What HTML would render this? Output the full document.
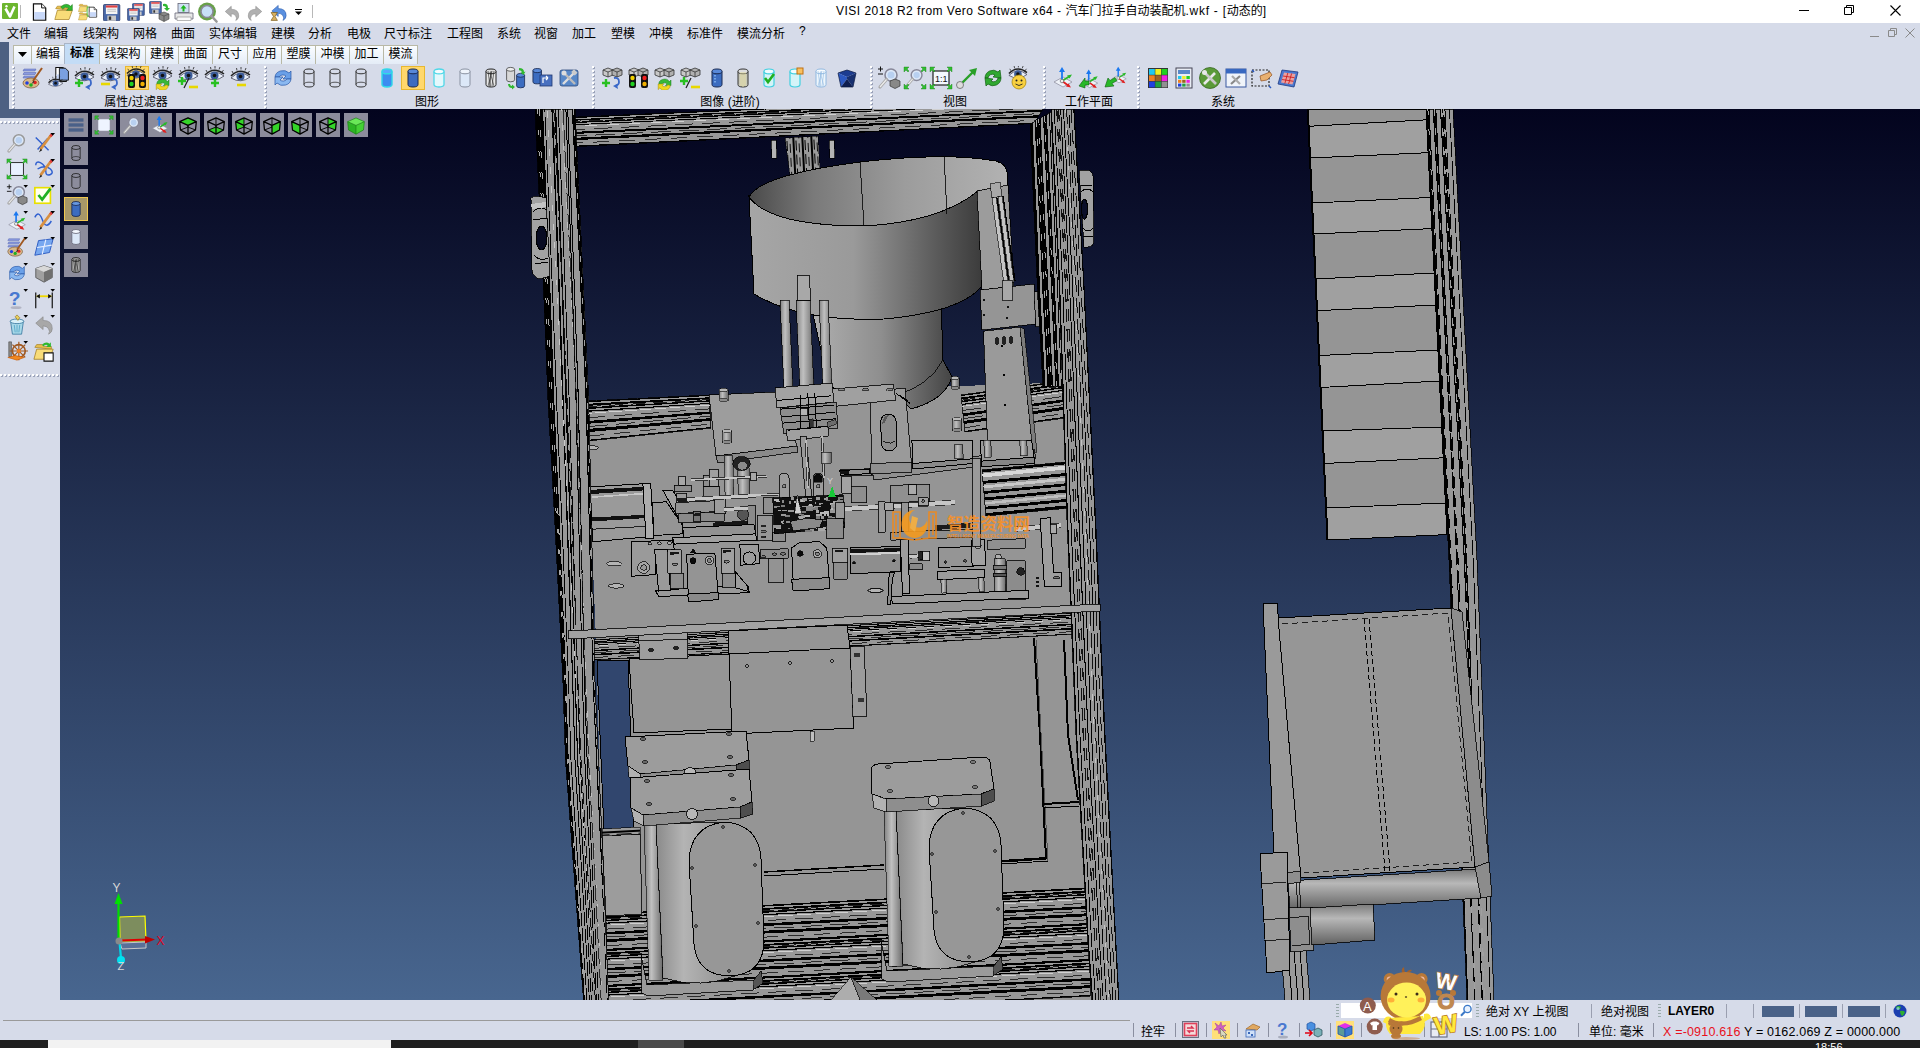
<!DOCTYPE html>
<html lang="zh-CN">
<head>
<meta charset="utf-8">
<title>VISI 2018 R2 from Vero Software x64 - 汽车门拉手自动装配机.wkf - [动态的]</title>
<style>
html,body{margin:0;padding:0}
body{width:1920px;height:1048px;overflow:hidden;position:relative;background:#d6dbe9;font-family:"Liberation Sans","Noto Sans CJK SC",sans-serif;font-size:12px;color:#000}
.abs{position:absolute}
#title{left:0;top:0;width:1920px;height:23px;background:#fff}
#title .t{position:absolute;left:836px;top:2px;font-size:12px;line-height:18px;white-space:nowrap}
#menu{left:0;top:23px;width:1920px;height:19px;background:#d6dbe9}
#menu span{position:absolute;top:1px;font-size:12px;white-space:nowrap}
#strip{left:0;top:42px;width:60px;height:76px;background:#4d6082}
#ribbon{left:9px;top:42px;width:1911px;height:67px;background:#d6dbe9}
.tab{position:absolute;top:45px;height:19px;box-sizing:border-box;border:1px solid #b9b9a6;border-bottom:none;background:linear-gradient(#fbfdff,#e4ecf7);font-size:12px;text-align:center;line-height:17px;white-space:nowrap}
.tab.on{top:43px;height:21px;background:#c3dcf6;border-color:#a9b5c7;line-height:19px}
.glabel{position:absolute;top:91.5px;font-size:12px;white-space:nowrap}
.grip{position:absolute;width:3px;background-image:repeating-linear-gradient(#fbfcff 0 1.6px,#aab2c6 1.6px 2.6px,transparent 2.6px 4px)}
#left{left:0;top:118px;width:60px;height:882px;background:#d6dbe9}
#vp{left:60px;top:109px;width:1860px;height:891px;display:block}
#status{left:0;top:1000px;width:1920px;height:40px;background:#d6dbe9}
#taskbar{left:0;top:1040px;width:1920px;height:8px;background:#1f1f1f}
.st{position:absolute;font-size:12.5px;white-space:nowrap}
.ic{position:absolute;width:24px;height:24px}
</style>
</head>
<body>
<div id="title" class="abs"><div class="t"><span style="letter-spacing:.49px">VISI 2018 R2 from Vero Software x64 - </span>汽车门拉手自动装配机<span style="letter-spacing:.75px">.wkf - [</span>动态的]</div></div>
<div id="menu" class="abs"><span style="left:7px">文件</span><span style="left:44px">编辑</span><span style="left:83px">线架构</span><span style="left:133px">网格</span><span style="left:171px">曲面</span><span style="left:209px">实体编辑</span><span style="left:271px">建模</span><span style="left:308px">分析</span><span style="left:347px">电极</span><span style="left:384px">尺寸标注</span><span style="left:447px">工程图</span><span style="left:497px">系统</span><span style="left:534px">视窗</span><span style="left:572px">加工</span><span style="left:611px">塑模</span><span style="left:649px">冲模</span><span style="left:687px">标准件</span><span style="left:737px">模流分析</span><span style="left:799px">?</span></div>
<div id="strip" class="abs"></div>
<div id="ribbon" class="abs"></div>
<div class="tab" style="left:13px;width:19px"><svg width="10" height="6" style="margin-top:6px"><path d="M0 0h9l-4.5 5z" fill="#000"/></svg></div>
<div class="tab" style="left:31px;width:34px">编辑</div>
<div class="tab on" style="left:64px;width:36px"><b>标准</b></div>
<div class="tab" style="left:99px;width:47px">线架构</div>
<div class="tab" style="left:145px;width:34px">建模</div>
<div class="tab" style="left:178px;width:35px">曲面</div>
<div class="tab" style="left:212px;width:36px">尺寸</div>
<div class="tab" style="left:247px;width:35px">应用</div>
<div class="tab" style="left:281px;width:35px">塑膜</div>
<div class="tab" style="left:315px;width:35px">冲模</div>
<div class="tab" style="left:349px;width:35px">加工</div>
<div class="tab" style="left:383px;width:35px">模流</div>
<svg width="0" height="0" style="position:absolute"><defs><pattern id="gp" width="4" height="4" patternUnits="userSpaceOnUse"><rect x="1" y="1" width="2" height="2" fill="#9aa2b8"/><rect width="2" height="2" fill="#fff"/></pattern></defs></svg>
<svg class="abs" style="left:12px;top:66px" width="4" height="43"><rect width="4" height="43" fill="url(#gp)"/></svg>
<svg class="abs" style="left:264px;top:66px" width="4" height="43"><rect width="4" height="43" fill="url(#gp)"/></svg>
<svg class="abs" style="left:592px;top:66px" width="4" height="43"><rect width="4" height="43" fill="url(#gp)"/></svg>
<svg class="abs" style="left:870px;top:66px" width="4" height="43"><rect width="4" height="43" fill="url(#gp)"/></svg>
<svg class="abs" style="left:1043px;top:66px" width="4" height="43"><rect width="4" height="43" fill="url(#gp)"/></svg>
<svg class="abs" style="left:1137px;top:66px" width="4" height="43"><rect width="4" height="43" fill="url(#gp)"/></svg>
<div class="glabel" style="left:76px;width:120px;text-align:center">属性/过滤器</div>
<div class="glabel" style="left:367px;width:120px;text-align:center">图形</div>
<div class="glabel" style="left:670px;width:120px;text-align:center">图像 (进阶)</div>
<div class="glabel" style="left:895px;width:120px;text-align:center">视图</div>
<div class="glabel" style="left:1029px;width:120px;text-align:center">工作平面</div>
<div class="glabel" style="left:1163px;width:120px;text-align:center">系统</div>
<svg class="abs" style="left:2px;top:3px;" width="16" height="16" viewBox="0 0 16 16"><rect width="16" height="16" rx="1" fill="#6cb62e"/><path d="M3.500 5.500l4.500 8l4.500-10" stroke="#fff" stroke-width="2.600" fill="none" stroke-linejoin="round"/><circle cx="4.500" cy="3.200" r="1.200" fill="#fff"/></svg>
<div class="abs" style="left:20px;top:5px;width:1px;height:13px;background:#b8b8b8"></div>
<svg class="abs" style="left:31px;top:2px;" width="18" height="20" viewBox="1 0 22 24"><path d="M4 2h10l5 5v15H4z" fill="#fff" stroke="#111" stroke-width="1.5"/><path d="M5 12h13v9H5z" fill="#c8d8f8"/><path d="M14 2v5h5" fill="#fff" stroke="#111" stroke-width="1.2"/></svg>
<svg class="abs" style="left:54px;top:2px;" width="20" height="20" viewBox="0 0 24 24"><path d="M2 8l2-3h6l2 2h8v3z" fill="#e8c050" stroke="#a07818" stroke-width=".7"/><path d="M1 21L4 10h18l-4 11z" fill="#f8dc78" stroke="#a07818" stroke-width=".8"/><path d="M8 6q6-6 12-1l2-2v7h-7l2.500-2.500q-4-3-7 1z" fill="#30b830" stroke="#187018" stroke-width=".6"/></svg>
<svg class="abs" style="left:78px;top:2px;" width="20" height="20" viewBox="0 0 24 24"><g transform="scale(.55)"><path d="M2 8l2-3h6l2 2h8v3z" fill="#e8c050" stroke="#a07818" stroke-width=".7"/><path d="M1 21L4 10h18l-4 11z" fill="#f8dc78" stroke="#a07818" stroke-width=".8"/></g><g transform="translate(0,10) scale(.55)"><path d="M2 8l2-3h6l2 2h8v3z" fill="#e8c050" stroke="#a07818" stroke-width=".7"/><path d="M1 21L4 10h18l-4 11z" fill="#f8dc78" stroke="#a07818" stroke-width=".8"/></g><path d="M11 6h3M11 17h3M11 6v11" stroke="#40c040" fill="none"/><g transform="translate(11,5) scale(.6)"><path d="M4 2h10l5 5v15H4z" fill="#fff" stroke="#111" stroke-width="1.5"/><path d="M5 12h13v9H5z" fill="#c8d8f8"/><path d="M14 2v5h5" fill="#fff" stroke="#111" stroke-width="1.2"/></g></svg>
<svg class="abs" style="left:103px;top:4px;" width="18" height="17" viewBox="0 0 18 17"><g transform="translate(0.5,0.5) scale(0.96)"><rect x="0" y="0" width="17" height="17" rx="1" fill="#4868a8" stroke="#283868" stroke-width=".8"/><rect x="2.500" y="1" width="12" height="9" fill="#f4f4f4"/><rect x="2.500" y="1" width="12" height="2.200" fill="#e04040"/><path d="M4 5h9M4 7h9" stroke="#aaa" stroke-width=".7"/><rect x="4" y="11.500" width="9" height="5.500" fill="#c8c8c8"/><rect x="5.500" y="12.500" width="2.500" height="3.500" fill="#333"/></g></svg>
<svg class="abs" style="left:127px;top:3px;" width="18" height="18" viewBox="0 0 18 18"><g transform="translate(5.5,0.5) scale(0.7)"><rect x="0" y="0" width="17" height="17" rx="1" fill="#4868a8" stroke="#283868" stroke-width=".8"/><rect x="2.500" y="1" width="12" height="9" fill="#f4f4f4"/><rect x="2.500" y="1" width="12" height="2.200" fill="#e04040"/><path d="M4 5h9M4 7h9" stroke="#aaa" stroke-width=".7"/><rect x="4" y="11.500" width="9" height="5.500" fill="#c8c8c8"/><rect x="5.500" y="12.500" width="2.500" height="3.500" fill="#333"/></g><g transform="translate(0.5,5.5) scale(0.7)"><rect x="0" y="0" width="17" height="17" rx="1" fill="#4868a8" stroke="#283868" stroke-width=".8"/><rect x="2.500" y="1" width="12" height="9" fill="#f4f4f4"/><rect x="2.500" y="1" width="12" height="2.200" fill="#e04040"/><path d="M4 5h9M4 7h9" stroke="#aaa" stroke-width=".7"/><rect x="4" y="11.500" width="9" height="5.500" fill="#c8c8c8"/><rect x="5.500" y="12.500" width="2.500" height="3.500" fill="#333"/></g></svg>
<svg class="abs" style="left:149px;top:1px;" width="22" height="21" viewBox="0 0 22 21"><g transform="translate(0.5,0.5) scale(0.7)"><rect x="0" y="0" width="17" height="17" rx="1" fill="#4868a8" stroke="#283868" stroke-width=".8"/><rect x="2.500" y="1" width="12" height="9" fill="#f4f4f4"/><rect x="2.500" y="1" width="12" height="2.200" fill="#e04040"/><path d="M4 5h9M4 7h9" stroke="#aaa" stroke-width=".7"/><rect x="4" y="11.500" width="9" height="5.500" fill="#c8c8c8"/><rect x="5.500" y="12.500" width="2.500" height="3.500" fill="#333"/></g><path d="M14 3q5-1 5 4l2 0l-3 3l-3-3h2q0-2-3-2z" fill="#30b830"/><path d="M10 13l5-2l5 2v5l-5 2.500l-5-2.500z" fill="#888" stroke="#444" stroke-width=".6"/><path d="M10 13l5 2l5-2M15 15v5.500" stroke="#444" stroke-width=".6" fill="none"/></svg>
<svg class="abs" style="left:174px;top:3px;" width="20" height="18" viewBox="0 0 20 18"><rect x="4" y="0.500" width="11" height="9" fill="#cfe0f4" stroke="#667" stroke-width=".8"/><path d="M9.500 2l3 3.500h-2v3h-2v-3h-2z" fill="#20b820"/><path d="M1 10h18v6H1z" fill="#e8e8e8" stroke="#667" stroke-width=".8"/><path d="M3 14h14v3.500H3z" fill="#fafafa" stroke="#888" stroke-width=".6"/></svg>
<svg class="abs" style="left:197px;top:2px;" width="21" height="21" viewBox="0 0 21 21"><circle cx="10" cy="9.500" r="9" fill="#68a048"/><circle cx="10" cy="9.500" r="6" fill="#c8e0f8" stroke="#889" stroke-width="1.600"/><path d="M14.500 14l5 5.500" stroke="#999" stroke-width="2.600" stroke-linecap="round"/></svg>
<svg class="abs" style="left:223px;top:4px;" width="18" height="18" viewBox="0 0 24 24"><path d="M3 10l8-7v4q10 0 10 9q0 4-4 6q2-3 0-6q-2-3-6-3v4z" fill="#b0b0b0" stroke="#888" stroke-width=".7"/></svg>
<svg class="abs" style="left:246px;top:4px;" width="18" height="18" viewBox="0 0 24 24"><g transform="translate(24,0) scale(-1,1)"><path d="M3 10l8-7v4q10 0 10 9q0 4-4 6q2-3 0-6q-2-3-6-3v4z" fill="#b0b0b0" stroke="#888" stroke-width=".7"/></g></svg>
<svg class="abs" style="left:269px;top:3px;" width="20" height="19" viewBox="0 0 24 24"><path d="M3 10l8-7v4q10 0 10 9q0 4-4 6q2-3 0-6q-2-3-6-3v4z" fill="#5a90e0" stroke="#2858a8" stroke-width=".7"/><path d="M2 12h8l-3 5l3 5H2l3-5z" fill="#d8b060" stroke="#705010" stroke-width=".8"/></svg>
<svg class="abs" style="left:295px;top:9px;" width="8" height="7" viewBox="0 0 8 7"><path d="M0 .500h7" stroke="#000" stroke-width="1"/><path d="M0 2.500h7l-3.500 3.500z" fill="#000"/></svg>
<div class="abs" style="left:312px;top:5px;width:1px;height:13px;background:#b8b8b8"></div>
<svg class="abs" style="left:1799px;top:5px;" width="10" height="10" viewBox="0 0 10 10"><path d="M0 5.500h10" stroke="#000" stroke-width="1"/></svg>
<svg class="abs" style="left:1844px;top:5px;" width="10" height="10" viewBox="0 0 10 10"><path d="M.5 2.500h7v7h-7zM2.500 2.500v-2h7v7h-2" fill="none" stroke="#000" stroke-width="1"/></svg>
<svg class="abs" style="left:1890px;top:5px;" width="11" height="11" viewBox="0 0 11 11"><path d="M.5 .5l10 10M10.500 .5l-10 10" stroke="#000" stroke-width="1.100"/></svg>
<svg class="abs" style="left:1870px;top:28px;" width="10" height="10" viewBox="0 0 10 10"><path d="M0 8.500h9" stroke="#8a8a8a" stroke-width="1"/></svg>
<svg class="abs" style="left:1888px;top:28px;" width="10" height="10" viewBox="0 0 10 10"><path d="M.5 2.500h6v6h-6zM2.500 2.500v-2h6v6h-2" fill="none" stroke="#8a8a8a" stroke-width="1"/></svg>
<svg class="abs" style="left:1905px;top:28px;" width="10" height="10" viewBox="0 0 10 10"><path d="M.5 .5l9 9M9.500 .5l-9 9" stroke="#8a8a8a" stroke-width="1"/></svg>
<svg class="abs" style="left:21px;top:66px;" width="24" height="24" viewBox="0 0 24 24"><path d="M3 3h12l-1 2H2zM3 6.500h12l-1 2H2zM3 10h12l-1 2H2z" fill="#8a9ae0" stroke="#5060b0" stroke-width=".5"/><ellipse cx="10" cy="17" rx="8" ry="5" fill="#d8b888" stroke="#806040" stroke-width=".8"/><circle cx="6" cy="17" r="1.8" fill="#2040e0"/><circle cx="10" cy="19" r="1.8" fill="#20b020"/><circle cx="14" cy="16.500" r="1.8" fill="#e02020"/><path d="M21 2L12 15" stroke="#a05820" stroke-width="2"/><path d="M12.500 14.500l-2 3.500l3-2z" fill="#333"/></svg>
<svg class="abs" style="left:47px;top:66px;" width="24" height="24" viewBox="0 0 24 24"><g transform="translate(6,0) scale(.7)"><path d="M4 2h10l5 5v15H4z" fill="#fff" stroke="#111" stroke-width="1.5"/><path d="M5 12h13v9H5z" fill="#c8d8f8"/><path d="M14 2v5h5" fill="#fff" stroke="#111" stroke-width="1.2"/></g><g transform="translate(10,1) scale(.6)"><path d="M4 2h10l5 5v15H4z" fill="#7aa0e0" stroke="#111" stroke-width="1.500"/></g><g transform="translate(0,10) scale(0.75)"><path d="M2 11Q11 2 21 10Q12 17 2 11z" fill="#e8eef8" stroke="#445" stroke-width=".8"/><circle cx="11.5" cy="9.5" r="4" fill="#3c5c98"/><circle cx="11.5" cy="9.5" r="1.8" fill="#111"/><path d="M2 9Q11 0 21 8" stroke="#222" stroke-width="1.6" fill="none"/><path d="M4 6l-1-2M8 3.5l-.5-2.5M12 2.5V0M16 3.5l1-2.5M19 6l1.5-2" stroke="#222" stroke-width=".8"/></g></svg>
<svg class="abs" style="left:73px;top:66px;" width="24" height="24" viewBox="0 0 24 24"><g transform="translate(0,1) scale(1)"><path d="M2 11Q11 2 21 10Q12 17 2 11z" fill="#e8eef8" stroke="#445" stroke-width=".8"/><circle cx="11.5" cy="9.5" r="4" fill="#3c5c98"/><circle cx="11.5" cy="9.5" r="1.8" fill="#111"/><path d="M2 9Q11 0 21 8" stroke="#222" stroke-width="1.6" fill="none"/><path d="M4 6l-1-2M8 3.5l-.5-2.5M12 2.5V0M16 3.5l1-2.5M19 6l1.5-2" stroke="#222" stroke-width=".8"/></g><path d="M2 17h8M6 13v8" stroke="#28c020" stroke-width="2.4"/><path d="M13 13q5-1 5 4q0 3-4 4" stroke="#3a68c8" stroke-width="1.8" fill="none"/><path d="M12 21l5 3l-1-5z" fill="#3a68c8"/></svg>
<svg class="abs" style="left:99px;top:66px;" width="24" height="24" viewBox="0 0 24 24"><g transform="translate(0,1) scale(1)"><path d="M2 11Q11 2 21 10Q12 17 2 11z" fill="#e8eef8" stroke="#445" stroke-width=".8"/><circle cx="11.5" cy="9.5" r="4" fill="#3c5c98"/><circle cx="11.5" cy="9.5" r="1.8" fill="#111"/><path d="M2 9Q11 0 21 8" stroke="#222" stroke-width="1.6" fill="none"/><path d="M4 6l-1-2M8 3.5l-.5-2.5M12 2.5V0M16 3.5l1-2.5M19 6l1.5-2" stroke="#222" stroke-width=".8"/></g><path d="M2 18h9" stroke="#e8d800" stroke-width="2.6"/><path d="M13 13q5-1 5 4q0 3-4 4" stroke="#3a68c8" stroke-width="1.8" fill="none"/><path d="M12 21l5 3l-1-5z" fill="#3a68c8"/></svg>
<div class="abs" style="left:125px;top:66px;width:24px;height:24px;background:#ffd86c;border:1px solid #e8b830;box-sizing:border-box"></div>
<svg class="abs" style="left:125px;top:66px;" width="24" height="24" viewBox="0 0 24 24"><g transform="translate(0,-1) scale(0.95)"><path d="M2 11Q11 2 21 10Q12 17 2 11z" fill="#e8eef8" stroke="#445" stroke-width=".8"/><circle cx="11.5" cy="9.5" r="4" fill="#3c5c98"/><circle cx="11.5" cy="9.5" r="1.8" fill="#111"/><path d="M2 9Q11 0 21 8" stroke="#222" stroke-width="1.6" fill="none"/><path d="M4 6l-1-2M8 3.5l-.5-2.5M12 2.5V0M16 3.5l1-2.5M19 6l1.5-2" stroke="#222" stroke-width=".8"/></g><rect x="3" y="8" width="7" height="14" rx="2" fill="#111"/><circle cx="6.5" cy="12" r="2.2" fill="#f0d000"/><circle cx="6.5" cy="18" r="2.2" fill="#20d020"/><rect x="14" y="8" width="7" height="14" rx="2" fill="#111"/><circle cx="17.5" cy="12" r="2.2" fill="#f02020"/><circle cx="17.5" cy="18" r="2.2" fill="#f0b000"/></svg>
<svg class="abs" style="left:151px;top:66px;" width="24" height="24" viewBox="0 0 24 24"><g transform="translate(0,0) scale(1)"><path d="M2 11Q11 2 21 10Q12 17 2 11z" fill="#e8eef8" stroke="#445" stroke-width=".8"/><circle cx="11.5" cy="9.5" r="4" fill="#3c5c98"/><circle cx="11.5" cy="9.5" r="1.8" fill="#111"/><path d="M2 9Q11 0 21 8" stroke="#222" stroke-width="1.6" fill="none"/><path d="M4 6l-1-2M8 3.5l-.5-2.5M12 2.5V0M16 3.5l1-2.5M19 6l1.5-2" stroke="#222" stroke-width=".8"/></g><g transform="translate(2,6) scale(.8)"><path d="M5 16a7 6 0 0 1 13-4l2-2v7h-7l2-2a4 3.5 0 0 0-7 1z" fill="#38b838" stroke="#187818" stroke-width=".6"/><path d="M19 17a7 6 0 0 1-13 3l-2 2v-7h7l-2 2a4 3.5 0 0 0 7-1z" fill="#f0d820" stroke="#a08800" stroke-width=".6"/></g></svg>
<svg class="abs" style="left:177px;top:66px;" width="24" height="24" viewBox="0 0 24 24"><g transform="translate(0,0) scale(1)"><path d="M2 11Q11 2 21 10Q12 17 2 11z" fill="#e8eef8" stroke="#445" stroke-width=".8"/><circle cx="11.5" cy="9.5" r="4" fill="#3c5c98"/><circle cx="11.5" cy="9.5" r="1.8" fill="#111"/><path d="M2 9Q11 0 21 8" stroke="#222" stroke-width="1.6" fill="none"/><path d="M4 6l-1-2M8 3.5l-.5-2.5M12 2.5V0M16 3.5l1-2.5M19 6l1.5-2" stroke="#222" stroke-width=".8"/></g><path d="M1 15h8M5 11v8" stroke="#28c020" stroke-width="2.4"/><path d="M12 12L7 22" stroke="#222" stroke-width="1.200"/><path d="M12 21h9" stroke="#e8d800" stroke-width="2.6"/></svg>
<svg class="abs" style="left:203px;top:66px;" width="24" height="24" viewBox="0 0 24 24"><g transform="translate(0,0) scale(1)"><path d="M2 11Q11 2 21 10Q12 17 2 11z" fill="#e8eef8" stroke="#445" stroke-width=".8"/><circle cx="11.5" cy="9.5" r="4" fill="#3c5c98"/><circle cx="11.5" cy="9.5" r="1.8" fill="#111"/><path d="M2 9Q11 0 21 8" stroke="#222" stroke-width="1.6" fill="none"/><path d="M4 6l-1-2M8 3.5l-.5-2.5M12 2.5V0M16 3.5l1-2.5M19 6l1.5-2" stroke="#222" stroke-width=".8"/></g><path d="M8 17h8M12 13v8" stroke="#28c020" stroke-width="2.4"/></svg>
<svg class="abs" style="left:229px;top:66px;" width="24" height="24" viewBox="0 0 24 24"><g transform="translate(0,1) scale(1)"><path d="M2 11Q11 2 21 10Q12 17 2 11z" fill="#e8eef8" stroke="#445" stroke-width=".8"/><circle cx="11.5" cy="9.5" r="4" fill="#3c5c98"/><circle cx="11.5" cy="9.5" r="1.8" fill="#111"/><path d="M2 9Q11 0 21 8" stroke="#222" stroke-width="1.6" fill="none"/><path d="M4 6l-1-2M8 3.5l-.5-2.5M12 2.5V0M16 3.5l1-2.5M19 6l1.5-2" stroke="#222" stroke-width=".8"/></g><path d="M8 19h9" stroke="#e8d800" stroke-width="2.6"/></svg>
<svg class="abs" style="left:271px;top:66px;" width="24" height="24" viewBox="0 0 24 24"><path d="M4 11a8 7 0 0 1 14-4l2-2v8h-8l3-3a4.500 4 0 0 0-7 1z" fill="#6aa0e8" stroke="#2858a8" stroke-width=".7"/><path d="M20 13a8 7 0 0 1-14 4l-2 2v-8h8l-3 3a4.500 4 0 0 0 7-1z" fill="#8ab8f0" stroke="#2858a8" stroke-width=".7"/></svg>
<svg class="abs" style="left:297px;top:66px;" width="24" height="24" viewBox="0 0 24 24"><path d="M7 5.4v13.2a5.0 2.4 0 0 0 10 0v-13.2" fill="none" stroke="#333" stroke-width="1"/><ellipse cx="12.0" cy="5.4" rx="5.0" ry="2.4" fill="none" stroke="#333" stroke-width="1"/><path d="M7 18.6a5 2.4 0 0 1 10 0" fill="none" stroke="#333" stroke-width=".8"/></svg>
<svg class="abs" style="left:323px;top:66px;" width="24" height="24" viewBox="0 0 24 24"><path d="M7 5.4v13.2a5.0 2.4 0 0 0 10 0v-13.2" fill="none" stroke="#333" stroke-width="1"/><ellipse cx="12.0" cy="5.4" rx="5.0" ry="2.4" fill="none" stroke="#333" stroke-width="1"/><path d="M7 18.6a5 2.4 0 0 1 10 0" fill="none" stroke="#333" stroke-width=".8"/></svg>
<svg class="abs" style="left:349px;top:66px;" width="24" height="24" viewBox="0 0 24 24"><path d="M7 5.4v13.2a5.0 2.4 0 0 0 10 0v-13.2" fill="none" stroke="#333" stroke-width="1"/><ellipse cx="12.0" cy="5.4" rx="5.0" ry="2.4" fill="none" stroke="#333" stroke-width="1"/><path d="M7 18.6a5 2.4 0 0 1 10 0" fill="none" stroke="#333" stroke-width=".8"/></svg>
<svg class="abs" style="left:375px;top:66px;" width="24" height="24" viewBox="0 0 24 24"><path d="M7 5.4v13.2a5.0 2.4 0 0 0 10 0v-13.2" fill="#3c8cf0" stroke="#30d8e8" stroke-width="1.4"/><ellipse cx="12.0" cy="5.4" rx="5.0" ry="2.4" fill="#58a8ff" stroke="#30d8e8" stroke-width="1.4"/></svg>
<div class="abs" style="left:401px;top:66px;width:24px;height:24px;background:#ffd86c;border:1px solid #e8b830;box-sizing:border-box"></div>
<svg class="abs" style="left:401px;top:66px;" width="24" height="24" viewBox="0 0 24 24"><path d="M7 5.4v13.2a5.0 2.4 0 0 0 10 0v-13.2" fill="#3c6cc0" stroke="#182850" stroke-width="1"/><ellipse cx="12.0" cy="5.4" rx="5.0" ry="2.4" fill="#5888d8" stroke="#182850" stroke-width="1"/></svg>
<svg class="abs" style="left:427px;top:66px;" width="24" height="24" viewBox="0 0 24 24"><path d="M7 5.4v13.2a5.0 2.4 0 0 0 10 0v-13.2" fill="#e4f8fc" stroke="#50d8e8" stroke-width="1.3"/><ellipse cx="12.0" cy="5.4" rx="5.0" ry="2.4" fill="#f4fcff" stroke="#50d8e8" stroke-width="1.3"/></svg>
<svg class="abs" style="left:453px;top:66px;" width="24" height="24" viewBox="0 0 24 24"><path d="M7 5.4v13.2a5.0 2.4 0 0 0 10 0v-13.2" fill="#dce8f8" stroke="#8890a0" stroke-width="1"/><ellipse cx="12.0" cy="5.4" rx="5.0" ry="2.4" fill="#eef4fc" stroke="#8890a0" stroke-width="1"/></svg>
<svg class="abs" style="left:479px;top:66px;" width="24" height="24" viewBox="0 0 24 24"><path d="M7 5.4v13.2a5.0 2.4 0 0 0 10 0v-13.2" fill="#e8e8e8" stroke="#222" stroke-width="1"/><ellipse cx="12.0" cy="5.4" rx="5.0" ry="2.4" fill="#ddd" stroke="#222" stroke-width="1"/><path d="M9 5l2 15M12 5l-1 16M15 5l-2 15M9 20l4-15M15 20l-4-14" stroke="#222" stroke-width=".6" fill="none"/></svg>
<svg class="abs" style="left:505px;top:66px;" width="24" height="24" viewBox="0 0 24 24"><g transform="translate(-4,-1) scale(.8)"><path d="M7 5.4v13.2a5.0 2.4 0 0 0 10 0v-13.2" fill="#d8d8d8" stroke="#444" stroke-width="1"/><ellipse cx="12.0" cy="5.4" rx="5.0" ry="2.4" fill="#eee" stroke="#444" stroke-width="1"/></g><g transform="translate(6,5) scale(.8)"><path d="M7 5.4v13.2a5.0 2.4 0 0 0 10 0v-13.2" fill="#3c6cc0" stroke="#182850" stroke-width="1"/><ellipse cx="12.0" cy="5.4" rx="5.0" ry="2.4" fill="#5888d8" stroke="#182850" stroke-width="1"/></g><path d="M14 2q5 0 5 4l1.500-.5l-2 3.500l-3-2.500l1.500-.2q-.5-2-3-2z" fill="#30b830"/><path d="M3 18q0 4 4 4v1.500l3-2.500l-3-2.500v1.500q-2 0-2-2z" fill="#30b830"/></svg>
<svg class="abs" style="left:531px;top:66px;" width="24" height="24" viewBox="0 0 24 24"><g transform="translate(-4,0) scale(.85)"><path d="M7 5.4v13.2a5.0 2.4 0 0 0 10 0v-13.2" fill="#3c6cc0" stroke="#182850" stroke-width="1"/><ellipse cx="12.0" cy="5.4" rx="5.0" ry="2.4" fill="#5888d8" stroke="#182850" stroke-width="1"/></g><rect x="9" y="9" width="12" height="11" fill="#4870c0" stroke="#203870" stroke-width=".8"/><path d="M12 17v-5h5M17 12l-2-2M17 12l-2 2" stroke="#fff" stroke-width="1.200" fill="none"/></svg>
<svg class="abs" style="left:557px;top:66px;" width="24" height="24" viewBox="0 0 24 24"><rect x="3" y="4" width="18" height="16" rx="2" fill="#5888c8" stroke="#284878" stroke-width=".8"/><path d="M6 18L17 7" stroke="#ddd" stroke-width="2.400"/><path d="M18 18L8 8" stroke="#bbb" stroke-width="2.400"/><circle cx="7" cy="7" r="2.500" fill="#ddd"/><rect x="15" y="4" width="5" height="4" fill="#ccc" transform="rotate(45 17 6)"/></svg>
<svg class="abs" style="left:601px;top:66px;" width="24" height="24" viewBox="0 0 24 24"><g transform="translate(0,-1)"><path d="M2 5l5-2l5 2v5l-5 2l-5-2z" fill="#c8c8c8" stroke="#333" stroke-width=".8"/><path d="M2 5l5 2l5-2M7 7v5" stroke="#333" stroke-width=".8" fill="none"/><path d="M11 5l5-2l5 2v5l-5 2l-5-2z" fill="#b0b0b0" stroke="#333" stroke-width=".8"/><path d="M11 5l5 2l5-2M16 7v5" stroke="#333" stroke-width=".8" fill="none"/></g><path d="M1 17h8M5 13v8" stroke="#28c020" stroke-width="2.4"/><path d="M13 12q5-1 5 4q0 3-4 4" stroke="#3a68c8" stroke-width="1.8" fill="none"/><path d="M12 20l5 3l-1-5z" fill="#3a68c8"/></svg>
<svg class="abs" style="left:627px;top:66px;" width="24" height="24" viewBox="0 0 24 24"><g transform="translate(0,-1)"><path d="M2 5l5-2l5 2v5l-5 2l-5-2z" fill="#c8c8c8" stroke="#333" stroke-width=".8"/><path d="M2 5l5 2l5-2M7 7v5" stroke="#333" stroke-width=".8" fill="none"/><path d="M11 5l5-2l5 2v5l-5 2l-5-2z" fill="#b0b0b0" stroke="#333" stroke-width=".8"/><path d="M11 5l5 2l5-2M16 7v5" stroke="#333" stroke-width=".8" fill="none"/></g><rect x="2" y="8" width="7" height="14" rx="2" fill="#111"/><circle cx="5.5" cy="12" r="2.2" fill="#f0d000"/><circle cx="5.5" cy="18" r="2.2" fill="#20d020"/><rect x="14" y="8" width="7" height="14" rx="2" fill="#111"/><circle cx="17.5" cy="12" r="2.2" fill="#f02020"/><circle cx="17.5" cy="18" r="2.2" fill="#f0b000"/></svg>
<svg class="abs" style="left:653px;top:66px;" width="24" height="24" viewBox="0 0 24 24"><g transform="translate(0,-1)"><path d="M2 5l5-2l5 2v5l-5 2l-5-2z" fill="#c8c8c8" stroke="#333" stroke-width=".8"/><path d="M2 5l5 2l5-2M7 7v5" stroke="#333" stroke-width=".8" fill="none"/><path d="M11 5l5-2l5 2v5l-5 2l-5-2z" fill="#b0b0b0" stroke="#333" stroke-width=".8"/><path d="M11 5l5 2l5-2M16 7v5" stroke="#333" stroke-width=".8" fill="none"/></g><g transform="translate(2,6) scale(.8)"><path d="M5 16a7 6 0 0 1 13-4l2-2v7h-7l2-2a4 3.5 0 0 0-7 1z" fill="#38b838" stroke="#187818" stroke-width=".6"/><path d="M19 17a7 6 0 0 1-13 3l-2 2v-7h7l-2 2a4 3.5 0 0 0 7-1z" fill="#f0d820" stroke="#a08800" stroke-width=".6"/></g></svg>
<svg class="abs" style="left:679px;top:66px;" width="24" height="24" viewBox="0 0 24 24"><g transform="translate(0,-1)"><path d="M2 5l5-2l5 2v5l-5 2l-5-2z" fill="#c8c8c8" stroke="#333" stroke-width=".8"/><path d="M2 5l5 2l5-2M7 7v5" stroke="#333" stroke-width=".8" fill="none"/><path d="M11 5l5-2l5 2v5l-5 2l-5-2z" fill="#b0b0b0" stroke="#333" stroke-width=".8"/><path d="M11 5l5 2l5-2M16 7v5" stroke="#333" stroke-width=".8" fill="none"/></g><path d="M1 15h8M5 11v8" stroke="#28c020" stroke-width="2.4"/><path d="M12 12L7 22" stroke="#222" stroke-width="1.200"/><path d="M12 21h9" stroke="#e8d800" stroke-width="2.6"/></svg>
<svg class="abs" style="left:705px;top:66px;" width="24" height="24" viewBox="0 0 24 24"><path d="M7 5.4v13.2a5.0 2.4 0 0 0 10 0v-13.2" fill="#3c6cc0" stroke="#182850" stroke-width="1"/><ellipse cx="12.0" cy="5.4" rx="5.0" ry="2.4" fill="#5888d8" stroke="#182850" stroke-width="1"/><path d="M10 9v8" stroke="#9cf" stroke-width="1.200" stroke-dasharray="1.500 1.500"/></svg>
<svg class="abs" style="left:731px;top:66px;" width="24" height="24" viewBox="0 0 24 24"><path d="M7 5.4v13.2a5.0 2.4 0 0 0 10 0v-13.2" fill="#c8c8b8" stroke="#333" stroke-width="1"/><ellipse cx="12.0" cy="5.4" rx="5.0" ry="2.4" fill="#ddd" stroke="#333" stroke-width="1"/><path d="M10 6v14M12 6v15M14 6v14" stroke="#e8e0a0" stroke-width=".9"/></svg>
<svg class="abs" style="left:757px;top:66px;" width="24" height="24" viewBox="0 0 24 24"><path d="M7 5.4v13.2a5.0 2.4 0 0 0 10 0v-13.2" fill="#d4f4f8" stroke="#40d0e0" stroke-width="1.2"/><ellipse cx="12.0" cy="5.4" rx="5.0" ry="2.4" fill="#f0fcff" stroke="#40d0e0" stroke-width="1.2"/><path d="M8 12l3 4l6-8" stroke="#20b020" stroke-width="2.600" fill="none"/></svg>
<svg class="abs" style="left:783px;top:66px;" width="24" height="24" viewBox="0 0 24 24"><path d="M7 5.4v13.2a5.0 2.4 0 0 0 10 0v-13.2" fill="#d4f4f8" stroke="#40d0e0" stroke-width="1.2"/><ellipse cx="12.0" cy="5.4" rx="5.0" ry="2.4" fill="#f0fcff" stroke="#40d0e0" stroke-width="1.2"/><rect x="14" y="2" width="6" height="6" fill="#f8c060" stroke="#c07010" stroke-width="1"/></svg>
<svg class="abs" style="left:809px;top:66px;" width="24" height="24" viewBox="0 0 24 24"><path d="M7 5.4v13.2a5.0 2.4 0 0 0 10 0v-13.2" fill="#eef6fc" stroke="#90b8e0" stroke-width="1"/><ellipse cx="12.0" cy="5.4" rx="5.0" ry="2.4" fill="#f8fcff" stroke="#90b8e0" stroke-width="1"/><path d="M9 5l2 15M12 5l-1 16M15 5l-2 15M9 20l4-15M15 20l-4-14" stroke="#90b8e0" stroke-width=".6" fill="none"/></svg>
<svg class="abs" style="left:835px;top:66px;" width="24" height="24" viewBox="0 0 24 24"><path d="M3 7l9-3l9 3l-9 4z" fill="#1c3c90"/><path d="M3 7l9 4v2l-6 8z" fill="#2c58c0"/><path d="M21 7l-9 4v2l6 8z" fill="#183070"/><path d="M12 13l-6 8h12z" fill="#0c1c50"/><path d="M3 7l9-3l9 3l-3 14H6z" fill="none" stroke="#0a1840" stroke-width=".7"/></svg>
<svg class="abs" style="left:877px;top:66px;" width="24" height="24" viewBox="0 0 24 24"><circle cx="14" cy="9" r="6" fill="#dce8f8" stroke="#889" stroke-width="1.6"/><circle cx="14" cy="9" r="3.5" fill="#b8d0f0"/><path d="M9.5 13.5L3 21" stroke="#aaa" stroke-width="3.2" stroke-linecap="round"/><path d="M9.5 13.5L3 21" stroke="#eee" stroke-width="1.2"/><path d="M1 3h5M3.500 .5v5M1 8h5" stroke="#111" stroke-width="1"/><path d="M13 15l5-2l5 2v5l-5 2.500l-5-2.500z" fill="#888" stroke="#333" stroke-width=".7"/></svg>
<svg class="abs" style="left:903px;top:66px;" width="24" height="24" viewBox="0 0 24 24"><g transform="translate(1,1) scale(.9)"><circle cx="14" cy="9" r="6" fill="#dce8f8" stroke="#889" stroke-width="1.6"/><circle cx="14" cy="9" r="3.5" fill="#b8d0f0"/><path d="M9.5 13.5L3 21" stroke="#aaa" stroke-width="3.2" stroke-linecap="round"/><path d="M9.5 13.5L3 21" stroke="#eee" stroke-width="1.2"/></g><path d="M1 1h5l-2 2l2 2l-1 1l-2-2l-2 2zM23 1v5l-2-2l-2 2l-1-1l2-2l-2-2zM1 23v-5l2 2l2-2l1 1l-2 2l2 2zM23 23h-5l2-2l-2-2l1-1l2 2l2-2z" fill="#30c030" stroke="#187818" stroke-width=".4"/></svg>
<svg class="abs" style="left:929px;top:66px;" width="24" height="24" viewBox="0 0 24 24"><rect x="4" y="5" width="16" height="14" fill="#f4f8ff" stroke="#222" stroke-width="1.200"/><text x="6" y="16" font-size="9" font-family="Liberation Sans,sans-serif" fill="#111">1:1</text><path d="M1 1h5l-2 2l2 2l-1 1l-2-2l-2 2zM23 1v5l-2-2l-2 2l-1-1l2-2l-2-2zM1 23v-5l2 2l2-2l1 1l-2 2l2 2zM23 23h-5l2-2l-2-2l1-1l2 2l2-2z" fill="#30c030" stroke="#187818" stroke-width=".4"/></svg>
<svg class="abs" style="left:955px;top:66px;" width="24" height="24" viewBox="0 0 24 24"><path d="M5 19L19 5" stroke="#28a028" stroke-width="2.400"/><path d="M22 2l-8 2l6 6z" fill="#28a028"/><circle cx="5" cy="19" r="3.500" fill="#ddd" stroke="#666" stroke-width=".8"/></svg>
<svg class="abs" style="left:981px;top:66px;" width="24" height="24" viewBox="0 0 24 24"><path d="M4 12a8 8 0 0 1 13-6l2-2l1 8l-8-1l2-2a4.500 4.500 0 0 0-7 3z" fill="#30a830" stroke="#106010" stroke-width=".7"/><path d="M20 12a8 8 0 0 1-13 6l-2 2l-1-8l8 1l-2 2a4.500 4.500 0 0 0 7-3z" fill="#30a830" stroke="#106010" stroke-width=".7"/></svg>
<svg class="abs" style="left:1007px;top:66px;" width="24" height="24" viewBox="0 0 24 24"><g transform="translate(0,-1) scale(0.95)"><path d="M2 11Q11 2 21 10Q12 17 2 11z" fill="#e8eef8" stroke="#445" stroke-width=".8"/><circle cx="11.5" cy="9.5" r="4" fill="#3c5c98"/><circle cx="11.5" cy="9.5" r="1.8" fill="#111"/><path d="M2 9Q11 0 21 8" stroke="#222" stroke-width="1.6" fill="none"/><path d="M4 6l-1-2M8 3.5l-.5-2.5M12 2.5V0M16 3.5l1-2.5M19 6l1.5-2" stroke="#222" stroke-width=".8"/></g><circle cx="12" cy="16" r="7" fill="#f8d040" stroke="#a08000" stroke-width=".7"/><circle cx="9.500" cy="14.500" r="1" fill="#222"/><circle cx="14.500" cy="14.500" r="1" fill="#222"/><path d="M8.500 18q3.500 3 7 0" stroke="#222" stroke-width=".9" fill="none"/></svg>
<svg class="abs" style="left:1051px;top:66px;" width="24" height="24" viewBox="0 0 24 24"><path d="M3 16l9-5l9 5l-9 5z" fill="#eef2f8" stroke="#889" stroke-width=".7"/><path d="M11 15V4" stroke="#1a78f0" stroke-width="1.8"/><path d="M11 1l3 5h-6z" fill="#1a78f0"/><path d="M11 15l8-5" stroke="#28b828" stroke-width="1.8"/><path d="M21 8.500l-5 1l2.500 3z" fill="#28b828"/><path d="M11 15l7 5" stroke="#e02020" stroke-width="1.8"/><path d="M20 21.500l-5-1l2.500-3z" fill="#e02020"/><circle cx="11" cy="15" r="1.8" fill="#eee" stroke="#555" stroke-width=".6"/></svg>
<svg class="abs" style="left:1077px;top:66px;" width="24" height="24" viewBox="0 0 24 24"><g transform="scale(.9) translate(2,3)"><path d="M3 16l9-5l9 5l-9 5z" fill="#eef2f8" stroke="#889" stroke-width=".7"/><path d="M11 15V4" stroke="#1a78f0" stroke-width="1.8"/><path d="M11 1l3 5h-6z" fill="#1a78f0"/><path d="M11 15l8-5" stroke="#28b828" stroke-width="1.8"/><path d="M21 8.500l-5 1l2.500 3z" fill="#28b828"/><path d="M11 15l7 5" stroke="#e02020" stroke-width="1.8"/><path d="M20 21.500l-5-1l2.500-3z" fill="#e02020"/><circle cx="11" cy="15" r="1.8" fill="#eee" stroke="#555" stroke-width=".6"/></g><path d="M2 20l6-8v3h4v4H8v3z" fill="#28b828" stroke="#106010" stroke-width=".6"/></svg>
<svg class="abs" style="left:1103px;top:66px;" width="24" height="24" viewBox="0 0 24 24"><g transform="scale(.8) translate(8,0)"><path d="M3 16l9-5l9 5l-9 5z" fill="#eef2f8" stroke="#889" stroke-width=".7"/><path d="M11 15V4" stroke="#1a78f0" stroke-width="1.8"/><path d="M11 1l3 5h-6z" fill="#1a78f0"/><path d="M11 15l8-5" stroke="#28b828" stroke-width="1.8"/><path d="M21 8.500l-5 1l2.500 3z" fill="#28b828"/><path d="M11 15l7 5" stroke="#e02020" stroke-width="1.8"/><path d="M20 21.500l-5-1l2.500-3z" fill="#e02020"/><circle cx="11" cy="15" r="1.8" fill="#eee" stroke="#555" stroke-width=".6"/></g><path d="M2 21l3-9l2 2.500l5-3l2 3l-5 3l2 2.500z" fill="#28b828" stroke="#106010" stroke-width=".6"/></svg>
<svg class="abs" style="left:1146px;top:66px;" width="24" height="24" viewBox="0 0 24 24"><rect x="2" y="2" width="20" height="20" fill="#333"/><rect x="3.0" y="3.0" width="5.800" height="5.800" fill="#20c8f0"/><rect x="9.3" y="3.0" width="5.800" height="5.800" fill="#f0f020"/><rect x="15.6" y="3.0" width="5.800" height="5.800" fill="#20d020"/><rect x="3.0" y="9.3" width="5.800" height="5.800" fill="#f08020"/><rect x="9.3" y="9.3" width="5.800" height="5.800" fill="#a06020"/><rect x="15.6" y="9.3" width="5.800" height="5.800" fill="#f020e0"/><rect x="3.0" y="15.6" width="5.800" height="5.800" fill="#2040e0"/><rect x="9.3" y="15.6" width="5.800" height="5.800" fill="#20a040"/><rect x="15.6" y="15.6" width="5.800" height="5.800" fill="#909090"/></svg>
<svg class="abs" style="left:1172px;top:66px;" width="24" height="24" viewBox="0 0 24 24"><rect x="4" y="2" width="16" height="20" fill="#e8ecf4" stroke="#445" stroke-width="1"/><rect x="6" y="4" width="12" height="4" fill="#5888c8"/><rect x="6.0" y="10.0" width="3.400" height="3" fill="#20c8f0"/><rect x="10.2" y="10.0" width="3.400" height="3" fill="#f0f020"/><rect x="14.4" y="10.0" width="3.400" height="3" fill="#20d020"/><rect x="6.0" y="13.8" width="3.400" height="3" fill="#f08020"/><rect x="10.2" y="13.8" width="3.400" height="3" fill="#a06020"/><rect x="14.4" y="13.8" width="3.400" height="3" fill="#f020e0"/><rect x="6.0" y="17.6" width="3.400" height="3" fill="#2040e0"/><rect x="10.2" y="17.6" width="3.400" height="3" fill="#20a040"/><rect x="14.4" y="17.6" width="3.400" height="3" fill="#909090"/></svg>
<svg class="abs" style="left:1198px;top:66px;" width="24" height="24" viewBox="0 0 24 24"><circle cx="12" cy="12" r="10.500" fill="#5a9a38" stroke="#386820" stroke-width=".8"/><path d="M6 18L17 7" stroke="#e8e8e8" stroke-width="2.600"/><path d="M18 18L7 7" stroke="#c8c8c8" stroke-width="2.600"/><circle cx="6.500" cy="6.500" r="2.500" fill="#e8e8e8"/></svg>
<svg class="abs" style="left:1224px;top:66px;" width="24" height="24" viewBox="0 0 24 24"><rect x="2" y="3" width="20" height="18" fill="#f0f4fa" stroke="#3858a0" stroke-width="1"/><rect x="2" y="3" width="20" height="4.500" fill="#3868c0"/><path d="M7 18l9-8" stroke="#888" stroke-width="2.200"/><path d="M16 18l-8-8" stroke="#aaa" stroke-width="2.200"/></svg>
<svg class="abs" style="left:1250px;top:66px;" width="24" height="24" viewBox="0 0 24 24"><rect x="2" y="4" width="17" height="16" fill="none" stroke="#222" stroke-width="1.200" stroke-dasharray="2 1.500"/><path d="M10 10l10-4l2 3l-5 5l-6 1z" fill="#e8b070" stroke="#905020" stroke-width=".7"/><path d="M2 4l2 2M19 20l2 2" stroke="#2858c0" stroke-width="1.500"/></svg>
<svg class="abs" style="left:1276px;top:66px;" width="24" height="24" viewBox="0 0 24 24"><path d="M6 4l16 2l-4 15l-16-3z" fill="#4878d0" stroke="#203880" stroke-width=".8"/><path d="M8 6.500l11.500 1.500l-3 10.500l-11.500-2z" fill="#e8a0a0"/><path d="M11.800 7l-3 10.500M15.600 7.500l-3 10.500M7 10l11.500 1.700M6 13.500l11.500 1.800" stroke="#d02020" stroke-width=".9"/></svg>
<div id="left" class="abs"></div>
<svg class="abs" style="left:0px;top:121px" width="60" height="4"><rect width="60" height="4" fill="url(#gp)"/></svg>
<svg class="abs" style="left:0px;top:374px" width="60" height="4"><rect width="60" height="4" fill="url(#gp)"/></svg>
<svg class="abs" style="left:6px;top:132px;" width="22" height="22" viewBox="0 0 24 24"><circle cx="14" cy="9" r="6" fill="#dce8f8" stroke="#999" stroke-width="1.6"/><circle cx="14" cy="9" r="3.5" fill="#b8d0f0"/><path d="M9.5 13.5L3 21" stroke="#aaa" stroke-width="3.2" stroke-linecap="round"/><path d="M9.5 13.5L3 21" stroke="#eee" stroke-width="1.2"/></svg>
<svg class="abs" style="left:33px;top:132px;" width="22" height="22" viewBox="0 0 24 24"><path d="M3 6l14 14M16 7L5 19" stroke="#3060d0" stroke-width="1.600"/><path d="M20 3L8 19" stroke="#d89040" stroke-width="3"/><path d="M21 2l-2 3" stroke="#e04040" stroke-width="3"/><path d="M8.500 18l-2 4l3.500-2z" fill="#222"/><path d="M19 1h5l-2.500 3z" fill="#000"/></svg>
<svg class="abs" style="left:6px;top:158px;" width="22" height="22" viewBox="0 0 24 24"><rect x="5" y="5" width="14" height="14" fill="#e8f0ff" stroke="#222" stroke-width="1"/><path d="M1 1h5l-2 2l2 2l-1 1l-2-2l-2 2zM23 1v5l-2-2l-2 2l-1-1l2-2l-2-2zM1 23v-5l2 2l2-2l1 1l-2 2l2 2zM23 23h-5l2-2l-2-2l1-1l2 2l2-2z" fill="#30c030" stroke="#187818" stroke-width=".4"/></svg>
<svg class="abs" style="left:33px;top:158px;" width="22" height="22" viewBox="0 0 24 24"><path d="M3 8q0-5 5-3q6 3 6 10q0 5 5 3q4-2 0-6q-6-5-14 0" stroke="#3060d0" stroke-width="1.600" fill="none"/><path d="M20 3L8 19" stroke="#d89040" stroke-width="3"/><path d="M21 2l-2 3" stroke="#e04040" stroke-width="3"/><path d="M8.500 18l-2 4l3.500-2z" fill="#222"/><path d="M19 1h5l-2.500 3z" fill="#000"/></svg>
<svg class="abs" style="left:6px;top:184px;" width="22" height="22" viewBox="0 0 24 24"><circle cx="14" cy="9" r="6" fill="#dce8f8" stroke="#889" stroke-width="1.6"/><circle cx="14" cy="9" r="3.5" fill="#b8d0f0"/><path d="M9.5 13.5L3 21" stroke="#aaa" stroke-width="3.2" stroke-linecap="round"/><path d="M9.5 13.5L3 21" stroke="#eee" stroke-width="1.2"/><path d="M1 3h5M3.500 .5v5M1 8h5" stroke="#111" stroke-width="1"/><path d="M13 15l5-2l5 2v5l-5 2.500l-5-2.500z" fill="#888" stroke="#333" stroke-width=".7"/><path d="M19 1h5l-2.500 3z" fill="#000"/></svg>
<svg class="abs" style="left:33px;top:184px;" width="22" height="22" viewBox="0 0 24 24"><rect x="2" y="4" width="17" height="17" fill="#fffff0" stroke="#e8e000" stroke-width="1.800"/><path d="M6 12l4 5l9-12" stroke="#20b020" stroke-width="3" fill="none"/><path d="M19 1h5l-2.500 3z" fill="#000"/></svg>
<svg class="abs" style="left:6px;top:210px;" width="22" height="22" viewBox="0 0 24 24"><path d="M3 16l9-5l9 5l-9 5z" fill="#eef2f8" stroke="#889" stroke-width=".7"/><path d="M11 15V4" stroke="#1a78f0" stroke-width="1.8"/><path d="M11 1l3 5h-6z" fill="#1a78f0"/><path d="M11 15l8-5" stroke="#28b828" stroke-width="1.8"/><path d="M21 8.500l-5 1l2.500 3z" fill="#28b828"/><path d="M11 15l7 5" stroke="#e02020" stroke-width="1.8"/><path d="M20 21.500l-5-1l2.500-3z" fill="#e02020"/><circle cx="11" cy="15" r="1.8" fill="#eee" stroke="#555" stroke-width=".6"/><path d="M19 1h5l-2.500 3z" fill="#000"/></svg>
<svg class="abs" style="left:33px;top:210px;" width="22" height="22" viewBox="0 0 24 24"><path d="M2 8q4-8 8 2q4 12 10 2" stroke="#3060d0" stroke-width="1.600" fill="none"/><path d="M20 3L8 19" stroke="#d89040" stroke-width="3"/><path d="M21 2l-2 3" stroke="#e04040" stroke-width="3"/><path d="M8.500 18l-2 4l3.500-2z" fill="#222"/><path d="M19 1h5l-2.500 3z" fill="#000"/></svg>
<svg class="abs" style="left:6px;top:236px;" width="22" height="22" viewBox="0 0 24 24"><path d="M3 3h12l-1 2H2zM3 6.500h12l-1 2H2zM3 10h12l-1 2H2z" fill="#8a9ae0" stroke="#5060b0" stroke-width=".5"/><ellipse cx="10" cy="17" rx="8" ry="5" fill="#d8b888" stroke="#806040" stroke-width=".8"/><circle cx="6" cy="17" r="1.8" fill="#2040e0"/><circle cx="10" cy="19" r="1.8" fill="#20b020"/><circle cx="14" cy="16.500" r="1.8" fill="#e02020"/><path d="M21 2L12 15" stroke="#a05820" stroke-width="2"/><path d="M12.500 14.500l-2 3.500l3-2z" fill="#333"/><path d="M19 1h5l-2.500 3z" fill="#000"/></svg>
<svg class="abs" style="left:33px;top:236px;" width="22" height="22" viewBox="0 0 24 24"><path d="M6 5l16-2l-4 15l-16 3z" fill="#78a8f0" stroke="#2858c0" stroke-width="1"/><path d="M14 4l-4 16M4.500 12.500l16-2.500" stroke="#e8f0ff" stroke-width="1.200"/><path d="M19 1h5l-2.500 3z" fill="#000"/></svg>
<svg class="abs" style="left:6px;top:262px;" width="22" height="22" viewBox="0 0 24 24"><path d="M4 11a8 7 0 0 1 14-4l2-2v8h-8l3-3a4.500 4 0 0 0-7 1z" fill="#6aa0e8" stroke="#2858a8" stroke-width=".7"/><path d="M20 13a8 7 0 0 1-14 4l-2 2v-8h8l-3 3a4.500 4 0 0 0 7-1z" fill="#8ab8f0" stroke="#2858a8" stroke-width=".7"/><path d="M19 1h5l-2.500 3z" fill="#000"/></svg>
<svg class="abs" style="left:33px;top:262px;" width="22" height="22" viewBox="0 0 24 24"><path d="M3 7l9-3l9 3v10l-9 5l-9-5z" fill="#a0a0a0" stroke="#444" stroke-width=".8"/><path d="M3 7l9 4l9-4l-9-3z" fill="#d8d8d8"/><path d="M12 11v11l9-5V7z" fill="#707070"/><path d="M19 1h5l-2.500 3z" fill="#000"/></svg>
<svg class="abs" style="left:6px;top:288px;" width="22" height="22" viewBox="0 0 24 24"><ellipse cx="11" cy="21.500" rx="6" ry="1.500" fill="#99a" opacity=".6"/><text x="3" y="19" font-size="21" font-weight="bold" fill="#4878d0" font-family="Liberation Sans,sans-serif">?</text><path d="M19 1h5l-2.500 3z" fill="#000"/></svg>
<svg class="abs" style="left:33px;top:288px;" width="22" height="22" viewBox="0 0 24 24"><path d="M3 5v17M21 5v17" stroke="#111" stroke-width="1.300"/><path d="M4 9h16" stroke="#f0d800" stroke-width="2"/><path d="M3.500 9l4-2.500v5zM20.500 9l-4-2.500v5z" fill="#111"/><path d="M19 1h5l-2.500 3z" fill="#000"/></svg>
<svg class="abs" style="left:6px;top:314px;" width="22" height="22" viewBox="0 0 24 24"><path d="M5 8h14l-2 14H7z" fill="#a8d8e8" stroke="#3878a0" stroke-width=".9"/><ellipse cx="12" cy="8" rx="7.500" ry="2.500" fill="#d8f0f8" stroke="#3878a0" stroke-width=".9"/><path d="M10 3l2-2l3 3l-2 3z" fill="#e8d060" stroke="#806000" stroke-width=".6"/><path d="M9 12l1 8M12 12v8M15 12l-1 8" stroke="#58a8c8" stroke-width="1"/><path d="M19 1h5l-2.500 3z" fill="#000"/></svg>
<svg class="abs" style="left:33px;top:314px;" width="22" height="22" viewBox="0 0 24 24"><path d="M3 10l8-7v4q10 0 10 9q0 4-4 6q2-3 0-6q-2-3-6-3v4z" fill="#a8a8a8" stroke="#888" stroke-width=".7"/><path d="M19 1h5l-2.500 3z" fill="#000"/></svg>
<svg class="abs" style="left:6px;top:340px;" width="22" height="22" viewBox="0 0 24 24"><path d="M3 2v16h3V2z" fill="#8a8a8a" stroke="#444" stroke-width=".6"/><circle cx="14" cy="12" r="7" fill="none" stroke="#a05820" stroke-width="1.800"/><path d="M14 2v20M4 12h20M7 5l14 14M21 5L7 19" stroke="#a05820" stroke-width="1.300"/><circle cx="14" cy="12" r="2.200" fill="#f08020"/><path d="M2 19l8-2l10 2l-8 3z" fill="#f08820" stroke="#c05000" stroke-width=".6"/><path d="M19 1h5l-2.500 3z" fill="#000"/></svg>
<svg class="abs" style="left:33px;top:340px;" width="22" height="22" viewBox="0 0 24 24"><path d="M2 8l2-3h6l2 2h8v3z" fill="#e8c050" stroke="#a07818" stroke-width=".7"/><path d="M1 21L4 10h18l-4 11z" fill="#f8dc78" stroke="#a07818" stroke-width=".8"/><path d="M12 14h10v9H12z" fill="#fff" stroke="#111" stroke-width="1.200"/><path d="M10 5q4-4 8-1l1.500-1.500v5h-5l1.500-1.500q-2-2-5 1z" fill="#30b830"/></svg>
<svg id="vp" class="abs" viewBox="60 109 1860 891" width="1860" height="891" shape-rendering="crispEdges">
<defs>
<linearGradient id="bg" x1="0" y1="0" x2="0" y2="1"><stop offset="0" stop-color="#03041e"/><stop offset="1" stop-color="#48668f"/></linearGradient>
<linearGradient id="bowlo" x1="0" y1="0" x2="1" y2="0"><stop offset="0" stop-color="#a6a6a6"/><stop offset="0.45" stop-color="#9a9a9a"/><stop offset="0.8" stop-color="#5c5c5c"/><stop offset="1" stop-color="#3c3c3c"/></linearGradient>
<linearGradient id="bowli" x1="0" y1="0" x2="1" y2="0"><stop offset="0" stop-color="#4a4a4a"/><stop offset="0.25" stop-color="#7a7a7a"/><stop offset="0.6" stop-color="#9c9c9c"/><stop offset="1" stop-color="#b2b2b2"/></linearGradient>
<linearGradient id="ped" x1="0" y1="0" x2="1" y2="0"><stop offset="0" stop-color="#b0b0b0"/><stop offset="0.5" stop-color="#8e8e8e"/><stop offset="1" stop-color="#444"/></linearGradient>
<linearGradient id="cyl" x1="0" y1="0" x2="1" y2="0"><stop offset="0" stop-color="#8a8a8a"/><stop offset="0.35" stop-color="#b4b4b4"/><stop offset="1" stop-color="#8c8c8c"/></linearGradient>
<linearGradient id="rod" x1="0" y1="0" x2="1" y2="0"><stop offset="0" stop-color="#808080"/><stop offset="0.4" stop-color="#c0c0c0"/><stop offset="1" stop-color="#6a6a6a"/></linearGradient>
<linearGradient id="roll" x1="0" y1="0" x2="0" y2="1"><stop offset="0" stop-color="#7a7a7a"/><stop offset="0.35" stop-color="#b8b8b8"/><stop offset="1" stop-color="#606060"/></linearGradient>
<pattern id="hv" width="9" height="14" patternUnits="userSpaceOnUse" patternTransform="rotate(-2.8)"><rect width="9" height="14" fill="#9a9a9a"/><rect x="1" width="1.6" height="14" fill="#000"/><rect x="4" width="1.2" height="10" fill="#000"/><rect x="6.5" y="3" width="1.3" height="9" fill="#111"/></pattern>
<pattern id="hv2" width="9" height="14" patternUnits="userSpaceOnUse" patternTransform="rotate(-3)"><rect width="9" height="14" fill="#9a9a9a"/><rect x="1" width="1.6" height="14" fill="#000"/><rect x="4" width="1.2" height="10" fill="#000"/><rect x="6.5" y="3" width="1.3" height="9" fill="#111"/></pattern>
<pattern id="hh" width="22" height="7" patternUnits="userSpaceOnUse" patternTransform="rotate(-3)"><rect width="22" height="7" fill="#9c9c9c"/><rect y="1" width="22" height="1.5" fill="#000"/><rect y="4" width="15" height="1.3" fill="#000"/></pattern>
<pattern id="hh2" width="26" height="8" patternUnits="userSpaceOnUse" patternTransform="rotate(-3.5)"><rect width="26" height="8" fill="#a0a0a0"/><rect y="1" width="26" height="2" fill="#000"/><rect y="5" width="18" height="1.5" fill="#000"/></pattern>
<pattern id="hvc" width="9" height="16" patternUnits="userSpaceOnUse" patternTransform="rotate(-2.6)"><rect width="9" height="16" fill="#999"/><rect x="0.5" width="2" height="16" fill="#000"/><rect x="4" width="1.6" height="11" fill="#000"/><rect x="7" y="4" width="1.2" height="10" fill="#111"/></pattern>
</defs>
<rect x="60" y="109" width="1860" height="891" fill="url(#bg)"/>
<polygon points="567.0,117.5 647.7,113.9 728.3,110.3 809.0,106.8 889.7,103.2 970.3,99.6 1051.0,96.0 1034.0,123.5 956.2,127.4 878.3,131.3 800.5,135.2 722.7,139.2 644.8,143.1 567.0,147.0" fill="#989898" stroke="#000" stroke-width="0.8" />
<polygon points="567.0,117.5 647.7,113.9 728.3,110.3 809.0,106.8 889.7,103.2 970.3,99.6 1051.0,96.0 1050.5,96.8 969.9,100.4 889.3,104.0 808.7,107.6 728.2,111.2 647.6,114.8 567.0,118.4" fill="#000" stroke="none" stroke-width="1" />
<polygon points="567.0,119.6 647.5,116.0 727.9,112.4 808.4,108.7 888.9,105.1 969.3,101.5 1049.8,97.9 1049.0,99.3 968.6,102.9 888.3,106.5 808.0,110.2 727.7,113.8 647.3,117.4 567.0,121.0" fill="#000" stroke="none" stroke-width="1" />
<polygon points="567.0,122.2 647.2,118.6 727.4,114.9 807.6,111.3 887.9,107.7 968.1,104.0 1048.3,100.4 1047.6,101.5 967.5,105.1 887.4,108.8 807.3,112.5 727.2,116.1 647.1,119.8 567.0,123.4" fill="#000" stroke="none" stroke-width="1" />
<polygon points="567.0,124.6 647.0,120.9 727.0,117.3 807.0,113.6 886.9,109.9 966.9,106.3 1046.9,102.6 1046.4,103.4 966.5,107.1 886.6,110.8 806.7,114.4 726.8,118.1 646.9,121.8 567.0,125.5" fill="#000" stroke="none" stroke-width="1" />
<polygon points="567.0,126.3 646.8,122.7 726.6,119.0 806.5,115.3 886.3,111.6 966.1,107.9 1045.9,104.2 1045.6,104.8 965.8,108.5 886.0,112.2 806.3,115.9 726.5,119.6 646.8,123.2 567.0,126.9" fill="#d0d0d0" stroke="none" stroke-width="1" />
<polygon points="567.0,132.2 646.2,128.5 725.5,124.8 804.8,121.0 884.0,117.2 963.2,113.5 1042.5,109.8 1041.3,111.7 962.3,115.4 883.2,119.2 804.2,123.0 725.1,126.8 646.1,130.5 567.0,134.3" fill="#000" stroke="none" stroke-width="1" />
<polygon points="567.0,138.2 645.7,134.3 724.4,130.5 803.0,126.7 881.7,122.9 960.4,119.1 1039.1,115.2 1037.7,117.5 959.3,121.3 880.8,125.1 802.4,129.0 723.9,132.8 645.5,136.7 567.0,140.5" fill="#000" stroke="none" stroke-width="1" />
<polygon points="567.0,146.1 644.9,142.2 722.8,138.3 800.8,134.4 878.7,130.5 956.6,126.6 1034.5,122.7 1034.0,123.5 956.2,127.4 878.3,131.3 800.5,135.2 722.7,139.2 644.8,143.1 567.0,147.0" fill="#000" stroke="none" stroke-width="1" />
<polyline points="567.0,118.8 647.5,115.2 728.1,111.6 808.6,108.0 889.2,104.4 969.7,100.8 1050.2,97.2" fill="none" stroke="#a0a0a0" stroke-width="0.8" stroke-dasharray="9 12"/>
<polyline points="567.0,121.6 647.3,118.0 727.5,114.4 807.8,110.7 888.1,107.1 968.4,103.5 1048.6,99.8" fill="none" stroke="#111" stroke-width="0.9" stroke-dasharray="14 8"/>
<polyline points="567.0,124.0 647.0,120.3 727.1,116.7 807.1,113.0 887.2,109.4 967.2,105.7 1047.3,102.0" fill="none" stroke="#a0a0a0" stroke-width="0.8" stroke-dasharray="10 12"/>
<polyline points="567.0,129.9 646.5,126.2 726.0,122.4 805.4,118.7 884.9,115.0 964.4,111.3 1043.9,107.5" fill="none" stroke="#111" stroke-width="0.8" stroke-dasharray="18 9"/>
<polyline points="567.0,136.4 645.9,132.6 724.7,128.8 803.6,125.0 882.4,121.2 961.3,117.4 1040.1,113.6" fill="none" stroke="#111" stroke-width="0.8" stroke-dasharray="20 8"/>
<polyline points="567.0,143.5 645.2,139.6 723.3,135.7 801.5,131.8 879.7,128.0 957.9,124.1 1036.0,120.2" fill="none" stroke="#111" stroke-width="0.8" stroke-dasharray="16 10"/>
<polygon points="771.0,140.0 776.0,140.0 777.0,158.0 772.0,158.0" fill="#b4b4b4" stroke="#000" stroke-width="0.7" />
<polygon points="829.0,140.0 834.0,140.0 835.0,158.0 830.0,158.0" fill="#b4b4b4" stroke="#000" stroke-width="0.7" />
<polygon points="785.0,138.0 818.0,136.0 820.0,172.0 790.0,176.0" fill="url(#hv2)" stroke="#000" stroke-width="0.5" />
<polygon points="586.0,401.0 709.0,395.0 1046.0,383.0 1060.0,383.0 1082.0,612.0 1092.0,1000.0 606.0,1000.0 596.0,640.0" fill="#959595" stroke="none" stroke-width="1" />
<polygon points="597.0,661.0 628.0,660.0 634.0,828.0 604.0,832.0" fill="#31466e" stroke="#000" stroke-width="1" />
<polygon points="587.0,401.0 607.3,400.0 627.7,399.0 648.0,398.0 668.3,397.0 688.7,396.0 709.0,395.0 711.0,428.0 690.5,430.2 670.0,432.3 649.5,434.5 629.0,436.7 608.5,438.8 588.0,441.0" fill="#989898" stroke="#000" stroke-width="0.8" />
<polygon points="587.0,401.0 607.3,400.0 627.7,399.0 648.0,398.0 668.3,397.0 688.7,396.0 709.0,395.0 709.1,396.0 688.7,397.0 668.4,398.1 648.0,399.1 627.7,400.1 607.4,401.2 587.0,402.2" fill="#000" stroke="none" stroke-width="1" />
<polygon points="587.1,403.8 607.4,402.7 627.8,401.6 648.1,400.6 668.5,399.5 688.8,398.4 709.1,397.3 709.2,399.0 688.9,400.1 668.5,401.2 648.2,402.4 627.8,403.5 607.5,404.7 587.1,405.8" fill="#000" stroke="none" stroke-width="1" />
<polygon points="587.2,407.4 607.5,406.2 627.9,405.0 648.2,403.8 668.6,402.7 689.0,401.5 709.3,400.3 709.4,401.6 689.0,402.8 668.7,404.1 648.3,405.3 627.9,406.5 607.6,407.8 587.2,409.0" fill="#000" stroke="none" stroke-width="1" />
<polygon points="587.2,410.6 607.6,409.3 628.0,408.0 648.4,406.8 668.7,405.5 689.1,404.2 709.5,402.9 709.5,403.9 689.2,405.2 668.8,406.5 648.4,407.9 628.0,409.2 607.6,410.5 587.3,411.8" fill="#000" stroke="none" stroke-width="1" />
<polygon points="587.3,413.0 607.7,411.6 628.1,410.3 648.5,408.9 668.8,407.6 689.2,406.2 709.6,404.9 709.6,405.6 689.3,406.9 668.9,408.3 648.5,409.7 628.1,411.1 607.7,412.4 587.3,413.8" fill="#d0d0d0" stroke="none" stroke-width="1" />
<polygon points="587.5,421.0 607.9,419.4 628.3,417.8 648.8,416.2 669.2,414.7 689.6,413.1 710.0,411.5 710.1,413.8 689.7,415.5 669.3,417.1 648.9,418.8 628.4,420.5 608.0,422.1 587.6,423.8" fill="#000" stroke="none" stroke-width="1" />
<polygon points="587.7,429.0 608.1,427.2 628.6,425.4 649.0,423.6 669.5,421.7 690.0,419.9 710.4,418.1 710.6,420.7 690.1,422.7 669.6,424.6 649.2,426.5 628.7,428.4 608.2,430.3 587.8,432.2" fill="#000" stroke="none" stroke-width="1" />
<polygon points="588.0,439.8 608.5,437.7 629.0,435.5 649.5,433.4 670.0,431.3 690.4,429.1 710.9,427.0 711.0,428.0 690.5,430.2 670.0,432.3 649.5,434.5 629.0,436.7 608.5,438.8 588.0,441.0" fill="#000" stroke="none" stroke-width="1" />
<polyline points="587.0,402.8 607.4,401.7 627.7,400.7 648.1,399.6 668.4,398.6 688.7,397.5 709.1,396.5" fill="none" stroke="#a0a0a0" stroke-width="0.8" stroke-dasharray="9 12"/>
<polyline points="587.1,406.6 607.5,405.4 627.9,404.3 648.2,403.1 668.6,401.9 688.9,400.8 709.3,399.6" fill="none" stroke="#111" stroke-width="0.9" stroke-dasharray="14 8"/>
<polyline points="587.2,409.8 607.6,408.5 628.0,407.3 648.3,406.0 668.7,404.8 689.1,403.5 709.4,402.3" fill="none" stroke="#a0a0a0" stroke-width="0.8" stroke-dasharray="10 12"/>
<polyline points="587.4,417.8 607.8,416.3 628.2,414.8 648.6,413.3 669.0,411.8 689.4,410.4 709.8,408.9" fill="none" stroke="#111" stroke-width="0.8" stroke-dasharray="18 9"/>
<polyline points="587.6,426.6 608.1,424.9 628.5,423.1 649.0,421.4 669.4,419.6 689.8,417.9 710.3,416.1" fill="none" stroke="#111" stroke-width="0.8" stroke-dasharray="20 8"/>
<polyline points="587.9,436.2 608.4,434.2 628.8,432.1 649.3,430.1 669.8,428.1 690.3,426.1 710.8,424.0" fill="none" stroke="#111" stroke-width="0.8" stroke-dasharray="16 10"/>
<polygon points="961.0,395.0 977.8,392.7 994.7,390.3 1011.5,388.0 1028.3,385.7 1045.2,383.3 1062.0,381.0 1064.0,418.0 1047.5,420.3 1031.0,422.7 1014.5,425.0 998.0,427.3 981.5,429.7 965.0,432.0" fill="#989898" stroke="#000" stroke-width="0.8" />
<polygon points="961.0,395.0 977.8,392.7 994.7,390.3 1011.5,388.0 1028.3,385.7 1045.2,383.3 1062.0,381.0 1062.1,382.1 1045.2,384.4 1028.4,386.8 1011.6,389.1 994.8,391.4 977.9,393.8 961.1,396.1" fill="#000" stroke="none" stroke-width="1" />
<polygon points="961.3,397.6 978.1,395.3 994.9,392.9 1011.7,390.6 1028.5,388.3 1045.3,385.9 1062.1,383.6 1062.2,385.4 1045.4,387.8 1028.7,390.1 1011.9,392.4 995.1,394.8 978.3,397.1 961.5,399.4" fill="#000" stroke="none" stroke-width="1" />
<polygon points="961.6,400.9 978.4,398.6 995.2,396.3 1012.0,393.9 1028.8,391.6 1045.5,389.3 1062.3,386.9 1062.4,388.4 1045.6,390.7 1028.9,393.1 1012.1,395.4 995.3,397.7 978.6,400.1 961.8,402.4" fill="#000" stroke="none" stroke-width="1" />
<polygon points="962.0,403.9 978.7,401.5 995.5,399.2 1012.2,396.9 1029.0,394.5 1045.7,392.2 1062.5,389.9 1062.5,391.0 1045.8,393.3 1029.1,395.7 1012.3,398.0 995.6,400.3 978.8,402.7 962.1,405.0" fill="#000" stroke="none" stroke-width="1" />
<polygon points="962.2,406.1 978.9,403.8 995.7,401.4 1012.4,399.1 1029.1,396.8 1045.9,394.4 1062.6,392.1 1062.6,392.8 1045.9,395.2 1029.2,397.5 1012.5,399.8 995.7,402.2 979.0,404.5 962.3,406.8" fill="#d0d0d0" stroke="none" stroke-width="1" />
<polygon points="963.0,413.5 979.7,411.2 996.3,408.8 1013.0,406.5 1029.7,404.2 1046.3,401.8 1063.0,399.5 1063.1,402.1 1046.5,404.4 1029.9,406.8 1013.2,409.1 996.6,411.4 979.9,413.8 963.3,416.1" fill="#000" stroke="none" stroke-width="1" />
<polygon points="963.8,420.9 980.4,418.6 997.0,416.2 1013.6,413.9 1030.2,411.6 1046.8,409.2 1063.4,406.9 1063.6,409.9 1047.0,412.2 1030.4,414.5 1013.8,416.9 997.3,419.2 980.7,421.5 964.1,423.9" fill="#000" stroke="none" stroke-width="1" />
<polygon points="964.9,430.9 981.4,428.6 997.9,426.2 1014.4,423.9 1030.9,421.6 1047.4,419.2 1063.9,416.9 1064.0,418.0 1047.5,420.3 1031.0,422.7 1014.5,425.0 998.0,427.3 981.5,429.7 965.0,432.0" fill="#000" stroke="none" stroke-width="1" />
<polyline points="961.2,396.7 978.0,394.3 994.8,392.0 1011.6,389.7 1028.5,387.3 1045.3,385.0 1062.1,382.7" fill="none" stroke="#a0a0a0" stroke-width="0.8" stroke-dasharray="9 12"/>
<polyline points="961.6,400.2 978.3,397.8 995.1,395.5 1011.9,393.2 1028.7,390.8 1045.5,388.5 1062.3,386.2" fill="none" stroke="#111" stroke-width="0.9" stroke-dasharray="14 8"/>
<polyline points="961.9,403.1 978.6,400.8 995.4,398.5 1012.2,396.1 1028.9,393.8 1045.7,391.5 1062.4,389.1" fill="none" stroke="#a0a0a0" stroke-width="0.8" stroke-dasharray="10 12"/>
<polyline points="962.7,410.5 979.4,408.2 996.1,405.9 1012.8,403.5 1029.5,401.2 1046.1,398.9 1062.8,396.5" fill="none" stroke="#111" stroke-width="0.8" stroke-dasharray="18 9"/>
<polyline points="963.6,418.7 980.2,416.3 996.8,414.0 1013.4,411.7 1030.0,409.3 1046.7,407.0 1063.3,404.7" fill="none" stroke="#111" stroke-width="0.8" stroke-dasharray="20 8"/>
<polyline points="964.5,427.6 981.1,425.2 997.6,422.9 1014.1,420.6 1030.7,418.2 1047.2,415.9 1063.8,413.6" fill="none" stroke="#111" stroke-width="0.8" stroke-dasharray="16 10"/>
<polygon points="982.0,470.0 1066.0,462.0 1069.0,508.0 986.0,516.0" fill="#989898" stroke="#000" stroke-width="0.8" />
<polygon points="982.0,470.0 1066.0,462.0 1066.2,464.3 982.2,472.3" fill="#000" stroke="none" stroke-width="1" />
<polygon points="982.3,473.7 1066.2,465.7 1066.5,469.4 982.6,477.4" fill="#d8d8d8" stroke="none" stroke-width="1" />
<polygon points="983.0,481.0 1066.7,473.0 1066.9,475.8 983.2,483.8" fill="#000" stroke="none" stroke-width="1" />
<polygon points="983.4,485.6 1067.0,477.6 1067.2,480.4 983.6,488.4" fill="#c8c8c8" stroke="none" stroke-width="1" />
<polygon points="983.8,491.2 1067.4,483.2 1067.6,485.9 984.1,493.9" fill="#000" stroke="none" stroke-width="1" />
<polygon points="984.4,497.6 1067.8,489.6 1068.0,492.4 984.6,500.4" fill="#000" stroke="none" stroke-width="1" />
<polygon points="984.8,502.2 1068.1,494.2 1068.2,496.5 985.0,504.5" fill="#c0c0c0" stroke="none" stroke-width="1" />
<polygon points="985.2,506.8 1068.4,498.8 1068.6,501.6 985.4,509.6" fill="#000" stroke="none" stroke-width="1" />
<polygon points="985.8,513.2 1068.8,505.2 1069.0,508.0 986.0,516.0" fill="#000" stroke="none" stroke-width="1" />
<path d="M811,305 L829,386 Q860,402 897,395 L911,409 Q945,400 952,377 L943,360 L941,300 Z" fill="url(#ped)" stroke="#000" stroke-width="1" />
<path d="M897,395 Q930,385 943,360" fill="none" stroke="#000" stroke-width="0.8" />
<path d="M749,197 Q770,226 864,226 Q940,222 978,190 L981,200 L981,287 Q960,312 884,319 Q800,322 754,294 Z" fill="url(#bowlo)" stroke="#000" stroke-width="1" />
<path d="M749,197 Q760,175 860,162 Q946,152 996,161 Q1006,164 1007,172 L1008,186 L978,191 Q940,222 864,226 Q770,226 749,197 Z" fill="url(#bowli)" stroke="#000" stroke-width="1" />
<polyline points="860.0,162.0 864.0,226.0" fill="none" stroke="#000" stroke-width="0.8" />
<polyline points="944.0,156.0 947.0,214.0" fill="none" stroke="#000" stroke-width="0.8" />
<polygon points="977.0,191.0 1008.0,185.0 1014.0,286.0 982.0,290.0" fill="#9c9c9c" stroke="#000" stroke-width="0.8" />
<polygon points="990.0,184.0 1000.0,182.0 1002.0,196.0 992.0,198.0" fill="#a8a8a8" stroke="#000" stroke-width="0.6" />
<polygon points="992.0,198.0 996.0,197.0 1008.0,283.0 1004.0,284.0" fill="#c4c4c4" stroke="#000" stroke-width="0.6" />
<polygon points="998.0,197.0 1002.0,196.0 1014.0,282.0 1010.0,283.0" fill="#c4c4c4" stroke="#000" stroke-width="0.6" />
<polyline points="997.0,198.0 1009.0,283.0" fill="none" stroke="#000" stroke-width="1.2" />
<polyline points="1003.0,196.0 1015.0,281.0" fill="none" stroke="#000" stroke-width="1.2" />
<polygon points="980.0,290.0 1034.0,284.0 1036.0,324.0 982.0,330.0" fill="#959595" stroke="#000" stroke-width="0.8" />
<polygon points="1002.0,281.0 1012.0,280.0 1013.0,300.0 1003.0,301.0" fill="#a8a8a8" stroke="#000" stroke-width="0.7" />
<circle cx="984" cy="300" r="1.5" fill="#111"/>
<circle cx="984" cy="315" r="1.5" fill="#111"/>
<circle cx="1008" cy="307" r="1.5" fill="#111"/>
<circle cx="1007" cy="318" r="1.5" fill="#111"/>
<polygon points="983.5,331.0 1020.0,327.0 1033.0,453.0 988.0,457.0" fill="#9a9a9a" stroke="#000" stroke-width="0.8" />
<polygon points="1020.0,327.0 1024.0,329.0 1037.0,452.0 1033.0,453.0" fill="#7c7c7c" stroke="#000" stroke-width="0.6" />
<circle cx="1002" cy="346" r="1.6" fill="#000"/>
<circle cx="1004" cy="375" r="1.6" fill="#000"/>
<circle cx="1005" cy="405" r="1.6" fill="#000"/>
<ellipse cx="997" cy="341" rx="2" ry="4.5" fill="#222" transform="translate(0,-0.0)"/>
<ellipse cx="1004" cy="341" rx="2" ry="4.5" fill="#222" transform="translate(0,-0.5)"/>
<ellipse cx="1011" cy="341" rx="2" ry="4.5" fill="#222" transform="translate(0,-1.0)"/>
<polygon points="1034.0,292.0 1052.0,290.0 1053.0,324.0 1036.0,327.0" fill="#909090" stroke="#000" stroke-width="0.8" />
<circle cx="1043" cy="305" r="1.5" fill="#111"/>
<polygon points="709.0,395.0 776.0,392.0 797.0,446.0 716.0,456.0" fill="#9d9d9d" stroke="#000" stroke-width="0.8" />
<polygon points="716.0,456.0 797.0,446.0 798.0,452.0 718.0,463.0" fill="#8a8a8a" stroke="#000" stroke-width="0.8" />
<polygon points="870.0,392.0 905.0,388.0 912.0,470.0 872.0,476.0" fill="#9a9a9a" stroke="#000" stroke-width="0.8" />
<rect x="881" y="414" width="15.5" height="37" rx="7.7" fill="#8c8c8c" stroke="#000" stroke-width="1" transform="rotate(-2 889 432)"/>
<path d="M882,424 q1,-9 8,-9.500 q-4,3 -5,8 z" fill="#5a5a5a"/>
<path d="M883,441 q7,4 12,0" fill="none" stroke="#000" stroke-width=".8"/>
<polygon points="797.0,392.0 893.0,384.0 896.0,400.0 800.0,410.0" fill="#a0a0a0" stroke="#000" stroke-width="0.8" />
<polygon points="872.0,470.0 1010.0,452.0 1012.0,462.0 874.0,480.0" fill="#909090" stroke="#000" stroke-width="0.8" />
<polygon points="1010.0,452.0 1034.0,449.0 1036.0,458.0 1012.0,462.0" fill="#888" stroke="#000" stroke-width="0.8" />
<polygon points="780.0,300.0 789.0,300.0 793.0,390.0 784.0,390.0" fill="url(#rod)" stroke="#000" stroke-width="0.7" />
<polygon points="796.0,300.0 810.0,300.0 814.0,390.0 800.0,390.0" fill="url(#rod)" stroke="#000" stroke-width="0.7" />
<polygon points="819.0,300.0 828.0,300.0 832.0,390.0 823.0,390.0" fill="url(#rod)" stroke="#000" stroke-width="0.7" />
<polygon points="797.0,275.0 809.0,275.0 811.0,300.0 797.0,300.0" fill="#a8a8a8" stroke="#000" stroke-width="0.8" />
<polygon points="775.0,388.0 832.0,383.0 834.0,402.0 777.0,408.0" fill="#a2a2a2" stroke="#000" stroke-width="0.8" />
<polygon points="780.0,408.0 836.0,402.0 838.0,428.0 784.0,434.0" fill="#8c8c8c" stroke="#000" stroke-width="0.8" />
<polygon points="786.0,430.0 828.0,426.0 828.0,436.0 788.0,441.0" fill="#a0a0a0" stroke="#000" stroke-width="0.8" />
<polyline points="776.6,400.5 831.2,395.8" fill="none" stroke="#000" stroke-width="1" />
<polyline points="781.2,409.1 834.4,405.2" fill="none" stroke="#000" stroke-width="1" />
<polyline points="782.0,416.9 835.2,412.2" fill="none" stroke="#000" stroke-width="1" />
<polyline points="782.8,423.1 835.9,418.8" fill="none" stroke="#000" stroke-width="1" />
<polyline points="787.5,430.2 829.7,426.2" fill="none" stroke="#000" stroke-width="1" />
<polyline points="800.0,395.0 800.0,429.4" fill="none" stroke="#000" stroke-width="1" />
<polyline points="807.8,393.4 809.4,428.6" fill="none" stroke="#000" stroke-width="1" />
<polyline points="814.8,393.4 816.4,427.8" fill="none" stroke="#000" stroke-width="1" />
<polygon points="827.3,422.3 835.9,419.2 836.2,423.9 827.8,427.5" fill="#6c6c6c" stroke="#000" stroke-width="0.6" />
<polygon points="800.0,409.1 807.8,408.4 807.8,415.3 800.3,415.9" fill="#b4b4b4" stroke="#000" stroke-width="0.8" />
<polygon points="809.4,419.2 813.3,418.9 813.4,427.0 809.7,427.5" fill="#333" stroke="#000" stroke-width="0.5" />
<ellipse cx="841.4" cy="389.5" rx="3" ry="1.5" fill="#8a8a8a" stroke="#000" stroke-width=".6"/>
<ellipse cx="865.6" cy="389.5" rx="3" ry="1.5" fill="#8a8a8a" stroke="#000" stroke-width=".6"/>
<ellipse cx="889.8" cy="389.5" rx="3" ry="1.5" fill="#8a8a8a" stroke="#000" stroke-width=".6"/>
<polyline points="896.1,393.4 910.2,403.6" fill="none" stroke="#000" stroke-width="1" />
<polyline points="899.2,395.0 908.6,401.2" fill="none" stroke="#000" stroke-width="1" />
<rect x="719.0" y="390" width="9" height="10" fill="url(#rod)" stroke="#000" stroke-width=".6"/>
<ellipse cx="723.5" cy="400" rx="4.5" ry="1.8" fill="#8a8a8a" stroke="#000" stroke-width=".5"/>
<ellipse cx="723.5" cy="390" rx="4.5" ry="1.8" fill="#b8b8b8" stroke="#000" stroke-width=".6"/>
<rect x="722.5" y="431" width="9" height="11" fill="url(#rod)" stroke="#000" stroke-width=".6"/>
<ellipse cx="727" cy="442" rx="4.5" ry="1.8" fill="#8a8a8a" stroke="#000" stroke-width=".5"/>
<ellipse cx="727" cy="431" rx="4.5" ry="1.8" fill="#b8b8b8" stroke="#000" stroke-width=".6"/>
<rect x="951.0" y="378" width="8" height="10" fill="url(#rod)" stroke="#000" stroke-width=".6"/>
<ellipse cx="955" cy="388" rx="4.0" ry="1.6" fill="#8a8a8a" stroke="#000" stroke-width=".5"/>
<ellipse cx="955" cy="378" rx="4.0" ry="1.6" fill="#b8b8b8" stroke="#000" stroke-width=".6"/>
<rect x="952.5" y="419" width="9" height="11" fill="url(#rod)" stroke="#000" stroke-width=".6"/>
<ellipse cx="957" cy="430" rx="4.5" ry="1.8" fill="#8a8a8a" stroke="#000" stroke-width=".5"/>
<ellipse cx="957" cy="419" rx="4.5" ry="1.8" fill="#b8b8b8" stroke="#000" stroke-width=".6"/>
<rect x="983.5" y="442" width="7" height="17" fill="url(#rod)" stroke="#000" stroke-width=".6"/>
<ellipse cx="987" cy="459" rx="3.5" ry="1.4" fill="#8a8a8a" stroke="#000" stroke-width=".5"/>
<ellipse cx="987" cy="442" rx="3.5" ry="1.4" fill="#b8b8b8" stroke="#000" stroke-width=".6"/>
<ellipse cx="614.0" cy="563.6" rx="7.8" ry="2.2" fill="#b4b4b4" stroke="#000" stroke-width="0.7"/>
<ellipse cx="616.3" cy="585.9" rx="7.8" ry="2.2" fill="#b4b4b4" stroke="#000" stroke-width="0.7"/>
<ellipse cx="590.5" cy="447.8" rx="7.8" ry="2.2" fill="#b4b4b4" stroke="#000" stroke-width="0.7"/>
<ellipse cx="875.3" cy="590.5" rx="7.8" ry="2.2" fill="#b4b4b4" stroke="#000" stroke-width="0.7"/>
<ellipse cx="875.1" cy="590.5" rx="7.0" ry="2.0" fill="#b4b4b4" stroke="#000" stroke-width="0.7"/>
<polygon points="589.7,486.9 642.9,483.8 646.0,537.0 592.8,541.7" fill="#9a9a9a" stroke="#000" stroke-width="1" />
<polygon points="591.3,489.8 642.9,486.9 643.1,490.4 591.4,494.0" fill="#111" stroke="none" stroke-width="1" />
<polygon points="591.6,496.3 643.2,492.9 643.2,494.5 591.6,497.9" fill="#c8c8c8" stroke="none" stroke-width="1" />
<polygon points="592.2,517.5 644.2,514.8 644.3,518.2 592.4,521.4" fill="#111" stroke="none" stroke-width="1" />
<polyline points="592.8,529.2 645.3,526.4" fill="none" stroke="#000" stroke-width="0.8" />
<polygon points="642.9,483.8 650.7,483.5 653.9,538.6 646.0,538.6" fill="#acacac" stroke="#000" stroke-width="1" />
<polygon points="652.3,502.6 666.4,501.8 682.0,524.5 682.0,533.9 653.9,535.5" fill="#959595" stroke="#000" stroke-width="1" />
<polygon points="663.2,490.9 672.6,490.4 685.2,508.9 682.0,524.5" fill="#a2a2a2" stroke="#000" stroke-width="1" />
<polygon points="724.3,455.6 732.9,455.6 733.7,496.3 725.1,497.1" fill="url(#rod)" stroke="#000" stroke-width="0.6" />
<polygon points="737.6,468.2 749.3,467.9 750.1,497.9 738.4,498.7" fill="url(#rod)" stroke="#000" stroke-width="0.6" />
<ellipse cx="741.5" cy="463.5" rx="8.6" ry="7.0" fill="#222" stroke="#000" stroke-width="0.7"/>
<ellipse cx="742.3" cy="465.8" rx="4.7" ry="3.9" fill="#8a8a8a" stroke="none" stroke-width="0.7"/>
<polygon points="674.2,485.4 691.4,485.4 691.4,491.6 674.2,491.6" fill="#8c8c8c" stroke="#000" stroke-width="0.8" />
<polygon points="678.9,476.0 685.2,476.0 685.2,485.4 678.9,485.4" fill="#a6a6a6" stroke="#000" stroke-width="0.8" />
<polygon points="676.5,493.2 686.7,493.2 686.7,508.9 676.5,508.9" fill="#9a9a9a" stroke="#000" stroke-width="0.8" />
<polygon points="703.2,475.2 710.2,475.2 710.2,486.9 703.2,486.9" fill="#8e8e8e" stroke="#000" stroke-width="0.8" />
<polygon points="709.4,469.0 718.0,469.0 718.0,486.9 709.4,486.9" fill="#a0a0a0" stroke="#000" stroke-width="0.8" />
<polygon points="703.9,486.9 719.6,486.9 719.6,496.3 703.9,496.3" fill="#909090" stroke="#000" stroke-width="0.8" />
<polygon points="675.8,502.6 725.8,500.3 725.8,511.2 675.8,513.6" fill="#939393" stroke="#000" stroke-width="0.8" />
<polygon points="678.9,513.6 724.3,511.7 724.3,521.1 678.9,522.9" fill="#8a8a8a" stroke="#000" stroke-width="0.8" />
<polygon points="693.0,511.2 700.8,511.2 700.8,521.4 693.0,521.4" fill="#777" stroke="#000" stroke-width="0.8" />
<polygon points="714.9,496.3 725.8,496.3 725.8,513.6 714.9,513.6" fill="#9c9c9c" stroke="#000" stroke-width="0.8" />
<polygon points="677.3,498.2 686.7,497.6 687.0,501.8 677.6,502.3" fill="#1a1a1a" stroke="none" stroke-width="1" />
<polygon points="693.0,513.6 700.8,513.2 700.8,516.1 693.0,516.4" fill="#1a1a1a" stroke="none" stroke-width="1" />
<polygon points="713.3,522.6 747.8,520.6 747.8,526.1 713.6,528.4" fill="#161616" stroke="none" stroke-width="1" />
<polygon points="747.8,505.7 755.6,505.7 755.6,535.5 747.8,535.5" fill="#8a8a8a" stroke="#000" stroke-width="0.8" />
<ellipse cx="743.1" cy="514.3" rx="5.5" ry="6.3" fill="#555" stroke="#000" stroke-width="0.7"/>
<polyline points="691.4,479.9 766.5,476.3" fill="none" stroke="#333" stroke-width="2.8" />
<polyline points="691.4,479.9 766.5,476.3" fill="none" stroke="#c6c6c6" stroke-width="1.6" />
<polyline points="686.7,499.5 755.6,495.6" fill="none" stroke="#333" stroke-width="4.2" />
<polyline points="686.7,499.5 755.6,495.6" fill="none" stroke="#c6c6c6" stroke-width="3" />
<polyline points="724.3,509.6 747.8,508.1" fill="none" stroke="#333" stroke-width="4.2" />
<polyline points="724.3,509.6 747.8,508.1" fill="none" stroke="#c6c6c6" stroke-width="3" />
<polyline points="755.6,495.1 786.9,494.0" fill="none" stroke="#333" stroke-width="2.4" />
<polyline points="755.6,495.1 786.9,494.0" fill="none" stroke="#c6c6c6" stroke-width="1.2" />
<polygon points="750.9,472.1 756.4,472.1 756.4,480.7 750.9,480.7" fill="#a8a8a8" stroke="#000" stroke-width="0.8" />
<polygon points="672.6,537.8 755.6,533.9 757.1,540.2 674.2,544.1" fill="#a0a0a0" stroke="#000" stroke-width="1" />
<polygon points="682.8,527.6 754.0,524.5 755.6,533.9 683.6,537.3" fill="#929292" stroke="#000" stroke-width="1" />
<path d="M779,498 L779,478 Q779,473 784,473 Q789,473 789,478 L789,498 Z" fill="#9c9c9c" stroke="#000" stroke-width="0.8" />
<circle cx="784" cy="486" r="2" fill="#888" stroke="#000" stroke-width=".6"/>
<path d="M813,498 L813,478 Q813,473 818,473 Q823,473 823,478 L823,498 Z" fill="#9c9c9c" stroke="#000" stroke-width="0.8" />
<path d="M814,482 L814,478 Q814,474 818,474 Q822,474 822,478 L822,482 Z" fill="#0a0a0a" stroke="#000" stroke-width="0.5" />
<circle cx="818" cy="486" r="2" fill="#888" stroke="#000" stroke-width=".6"/>
<polygon points="800.0,436.0 806.0,436.0 812.0,500.0 806.0,500.0" fill="#9a9a9a" stroke="#000" stroke-width="0.8" />
<polyline points="806.0,440.0 808.0,488.0" fill="none" stroke="#333" stroke-width="2.4" />
<polyline points="806.0,440.0 808.0,488.0" fill="none" stroke="#bbb" stroke-width="1.2" />
<polyline points="822.0,436.0 824.0,478.0" fill="none" stroke="#333" stroke-width="2.4" />
<polyline points="822.0,436.0 824.0,478.0" fill="none" stroke="#bbb" stroke-width="1.2" />
<polygon points="821.0,452.0 831.0,452.0 831.0,463.0 822.0,464.0" fill="url(#rod)" stroke="#000" stroke-width="0.6" />
<polygon points="757.1,515.1 772.8,515.1 772.8,540.2 757.1,540.2" fill="#969696" stroke="#000" stroke-width="0.8" />
<polygon points="772.8,532.3 785.3,532.3 785.3,541.7 772.8,541.7" fill="#8e8e8e" stroke="#000" stroke-width="0.8" />
<polygon points="763.4,497.9 774.4,497.9 774.4,513.6 763.4,513.6" fill="#909090" stroke="#000" stroke-width="0.8" />
<polygon points="772.8,497.9 843.2,494.8 844.8,527.6 774.4,533.9" fill="#101010" stroke="#000" stroke-width="0.8" />
<polygon points="803.7,515.3 810.4,515.0 810.4,517.2 803.7,517.5" fill="#b8b8b8" stroke="none" stroke-width="1" />
<polygon points="830.4,503.0 836.5,502.7 836.5,504.9 830.4,505.2" fill="#b8b8b8" stroke="none" stroke-width="1" />
<polygon points="826.3,499.8 829.6,499.7 829.6,500.7 826.3,500.8" fill="#7c7c7c" stroke="none" stroke-width="1" />
<polygon points="815.8,516.5 819.6,516.3 819.6,518.5 815.8,518.6" fill="#7c7c7c" stroke="none" stroke-width="1" />
<polygon points="814.5,501.9 816.2,501.8 816.2,504.2 814.5,504.3" fill="#989898" stroke="none" stroke-width="1" />
<polygon points="775.9,526.0 780.9,525.8 780.9,528.9 775.9,529.1" fill="#a8a8a8" stroke="none" stroke-width="1" />
<polygon points="802.9,524.7 807.4,524.6 807.4,527.2 802.9,527.4" fill="#8a8a8a" stroke="none" stroke-width="1" />
<polygon points="773.9,499.5 779.1,499.3 779.1,501.3 773.9,501.5" fill="#b8b8b8" stroke="none" stroke-width="1" />
<polygon points="839.8,524.7 843.5,524.4 843.5,526.2 839.8,526.4" fill="#989898" stroke="none" stroke-width="1" />
<polygon points="807.7,497.6 812.4,497.5 812.4,498.6 807.7,498.7" fill="#989898" stroke="none" stroke-width="1" />
<polygon points="829.9,509.5 836.8,509.3 836.8,512.6 829.9,512.8" fill="#989898" stroke="none" stroke-width="1" />
<polygon points="787.8,527.6 789.6,527.5 789.6,529.4 787.8,529.5" fill="#7c7c7c" stroke="none" stroke-width="1" />
<polygon points="800.0,499.1 805.1,498.9 805.1,502.0 800.0,502.2" fill="#a8a8a8" stroke="none" stroke-width="1" />
<polygon points="796.0,507.0 797.6,507.0 797.6,509.0 796.0,509.0" fill="#989898" stroke="none" stroke-width="1" />
<polygon points="782.5,520.2 784.2,520.2 784.2,522.3 782.5,522.4" fill="#8a8a8a" stroke="none" stroke-width="1" />
<polygon points="785.4,515.3 789.5,515.1 789.5,516.5 785.4,516.6" fill="#7c7c7c" stroke="none" stroke-width="1" />
<polygon points="824.8,510.6 828.5,510.5 828.5,512.4 824.8,512.6" fill="#989898" stroke="none" stroke-width="1" />
<polygon points="773.6,525.5 780.7,525.2 780.7,527.7 773.6,528.0" fill="#989898" stroke="none" stroke-width="1" />
<polygon points="787.6,509.8 794.0,509.5 794.0,512.2 787.6,512.5" fill="#989898" stroke="none" stroke-width="1" />
<polygon points="776.4,501.5 780.4,501.4 780.4,502.2 776.4,502.3" fill="#b8b8b8" stroke="none" stroke-width="1" />
<polygon points="795.5,506.5 797.4,506.4 797.4,507.5 795.5,507.6" fill="#b8b8b8" stroke="none" stroke-width="1" />
<polygon points="815.9,497.2 819.6,497.0 819.6,499.7 815.9,499.8" fill="#989898" stroke="none" stroke-width="1" />
<polygon points="837.4,512.8 842.2,512.6 842.2,515.9 837.4,516.1" fill="#989898" stroke="none" stroke-width="1" />
<polygon points="815.3,507.0 818.1,506.9 818.1,509.5 815.3,509.6" fill="#7c7c7c" stroke="none" stroke-width="1" />
<polygon points="786.2,521.3 793.1,521.0 793.1,522.4 786.2,522.7" fill="#8a8a8a" stroke="none" stroke-width="1" />
<polygon points="832.3,516.8 836.2,516.6 836.2,517.7 832.3,517.9" fill="#989898" stroke="none" stroke-width="1" />
<polygon points="807.7,505.2 813.4,504.9 813.4,506.9 807.7,507.1" fill="#8a8a8a" stroke="none" stroke-width="1" />
<polygon points="828.4,516.5 831.6,516.4 831.6,517.7 828.4,517.8" fill="#7c7c7c" stroke="none" stroke-width="1" />
<polygon points="838.6,500.9 842.8,500.7 842.8,503.4 838.6,503.6" fill="#b8b8b8" stroke="none" stroke-width="1" />
<polygon points="814.4,506.0 821.2,505.7 821.2,507.1 814.4,507.4" fill="#989898" stroke="none" stroke-width="1" />
<polygon points="778.2,510.4 781.1,510.2 781.1,511.2 778.2,511.3" fill="#a8a8a8" stroke="none" stroke-width="1" />
<polygon points="798.1,515.7 800.4,515.6 800.4,517.5 798.1,517.6" fill="#8a8a8a" stroke="none" stroke-width="1" />
<polygon points="838.8,518.5 843.5,518.3 843.5,520.9 838.8,521.1" fill="#989898" stroke="none" stroke-width="1" />
<polygon points="812.8,527.4 817.0,527.3 817.0,529.1 812.8,529.3" fill="#a8a8a8" stroke="none" stroke-width="1" />
<polygon points="837.6,497.4 842.8,497.2 842.8,499.4 837.6,499.6" fill="#7c7c7c" stroke="none" stroke-width="1" />
<polygon points="794.3,501.2 796.2,501.1 796.2,503.3 794.3,503.3" fill="#a8a8a8" stroke="none" stroke-width="1" />
<polygon points="822.6,526.7 828.3,526.4 828.3,529.3 822.6,529.5" fill="#a8a8a8" stroke="none" stroke-width="1" />
<polygon points="797.0,519.5 803.6,519.2 803.6,522.6 797.0,522.9" fill="#8a8a8a" stroke="none" stroke-width="1" />
<polygon points="836.4,497.7 840.8,497.5 840.8,498.3 836.4,498.5" fill="#7c7c7c" stroke="none" stroke-width="1" />
<polygon points="799.0,516.1 804.0,515.9 804.0,516.9 799.0,517.1" fill="#7c7c7c" stroke="none" stroke-width="1" />
<polygon points="781.3,505.2 785.2,505.1 785.2,506.8 781.3,507.0" fill="#7c7c7c" stroke="none" stroke-width="1" />
<polygon points="819.7,511.9 823.9,511.7 823.9,514.1 819.7,514.3" fill="#b8b8b8" stroke="none" stroke-width="1" />
<polygon points="823.5,497.6 828.4,497.4 828.4,499.7 823.5,499.9" fill="#989898" stroke="none" stroke-width="1" />
<polygon points="837.3,500.4 843.2,500.2 843.2,502.9 837.3,503.2" fill="#8a8a8a" stroke="none" stroke-width="1" />
<polygon points="790.6,497.0 793.9,496.9 793.9,499.7 790.6,499.8" fill="#989898" stroke="none" stroke-width="1" />
<polygon points="808.1,521.8 811.5,521.6 811.5,525.2 808.1,525.3" fill="#8a8a8a" stroke="none" stroke-width="1" />
<polygon points="832.9,507.5 838.2,507.3 838.2,508.7 832.9,508.9" fill="#8a8a8a" stroke="none" stroke-width="1" />
<polygon points="827.0,521.8 829.7,521.7 829.7,523.1 827.0,523.2" fill="#989898" stroke="none" stroke-width="1" />
<polygon points="812.4,507.2 814.7,507.1 814.7,509.4 812.4,509.5" fill="#989898" stroke="none" stroke-width="1" />
<polygon points="820.9,528.3 824.0,528.2 824.0,529.5 820.9,529.6" fill="#8a8a8a" stroke="none" stroke-width="1" />
<polygon points="804.9,527.5 811.2,527.3 811.2,529.2 804.9,529.4" fill="#b8b8b8" stroke="none" stroke-width="1" />
<polygon points="806.4,507.2 812.7,506.9 812.7,510.6 806.4,510.9" fill="#8a8a8a" stroke="none" stroke-width="1" />
<polygon points="794.9,524.3 798.0,524.1 798.0,526.7 794.9,526.9" fill="#7c7c7c" stroke="none" stroke-width="1" />
<polygon points="820.7,515.7 824.0,515.5 824.0,518.7 820.7,518.8" fill="#989898" stroke="none" stroke-width="1" />
<polygon points="816.2,510.2 818.8,510.1 818.8,513.1 816.2,513.2" fill="#a8a8a8" stroke="none" stroke-width="1" />
<polygon points="789.4,501.3 791.2,501.3 791.2,503.9 789.4,504.0" fill="#8a8a8a" stroke="none" stroke-width="1" />
<polygon points="780.8,514.5 786.0,514.3 786.0,516.2 780.8,516.4" fill="#989898" stroke="none" stroke-width="1" />
<polygon points="819.1,503.3 823.3,503.1 823.3,504.4 819.1,504.6" fill="#989898" stroke="none" stroke-width="1" />
<polygon points="823.8,514.5 825.6,514.4 825.6,515.9 823.8,515.9" fill="#a8a8a8" stroke="none" stroke-width="1" />
<polygon points="809.5,528.2 813.9,528.0 813.9,531.8 809.5,532.0" fill="#989898" stroke="none" stroke-width="1" />
<polygon points="799.7,523.0 806.4,522.8 806.4,523.8 799.7,524.1" fill="#7c7c7c" stroke="none" stroke-width="1" />
<polygon points="799.4,511.7 802.1,511.6 802.1,515.0 799.4,515.1" fill="#989898" stroke="none" stroke-width="1" />
<polygon points="798.6,515.6 805.2,515.4 805.2,518.5 798.6,518.8" fill="#a8a8a8" stroke="none" stroke-width="1" />
<polygon points="804.4,518.4 807.1,518.3 807.1,521.2 804.4,521.3" fill="#7c7c7c" stroke="none" stroke-width="1" />
<polygon points="835.0,500.8 838.0,500.6 838.0,502.6 835.0,502.7" fill="#989898" stroke="none" stroke-width="1" />
<polygon points="838.6,514.5 843.5,514.3 843.5,516.0 838.6,516.3" fill="#7c7c7c" stroke="none" stroke-width="1" />
<polygon points="830.5,508.3 832.5,508.2 832.5,510.3 830.5,510.4" fill="#b8b8b8" stroke="none" stroke-width="1" />
<polygon points="801.6,505.8 808.4,505.6 808.4,507.0 801.6,507.3" fill="#989898" stroke="none" stroke-width="1" />
<polygon points="802.1,497.8 806.7,497.6 806.7,500.5 802.1,500.6" fill="#989898" stroke="none" stroke-width="1" />
<polygon points="804.9,530.0 811.5,529.7 811.5,532.0 804.9,532.3" fill="#7c7c7c" stroke="none" stroke-width="1" />
<polygon points="819.4,528.2 823.8,528.0 823.8,531.6 819.4,531.8" fill="#989898" stroke="none" stroke-width="1" />
<polygon points="824.0,511.3 828.7,511.1 828.7,514.4 824.0,514.6" fill="#b8b8b8" stroke="none" stroke-width="1" />
<polygon points="816.1,514.1 822.4,513.8 822.4,516.3 816.1,516.5" fill="#a8a8a8" stroke="none" stroke-width="1" />
<polygon points="818.2,528.5 824.7,528.2 824.7,530.8 818.2,531.1" fill="#a8a8a8" stroke="none" stroke-width="1" />
<polygon points="830.2,528.9 834.7,528.8 834.7,531.2 830.2,531.4" fill="#989898" stroke="none" stroke-width="1" />
<polygon points="800.9,500.5 802.5,500.4 802.5,502.3 800.9,502.4" fill="#b8b8b8" stroke="none" stroke-width="1" />
<polygon points="838.1,513.9 841.9,513.7 841.9,516.9 838.1,517.0" fill="#b8b8b8" stroke="none" stroke-width="1" />
<polygon points="781.7,499.8 784.2,499.7 784.2,503.2 781.7,503.3" fill="#8a8a8a" stroke="none" stroke-width="1" />
<polygon points="801.1,528.5 807.9,528.3 807.9,529.9 801.1,530.1" fill="#8a8a8a" stroke="none" stroke-width="1" />
<polygon points="806.4,508.0 813.0,507.7 813.0,511.3 806.4,511.5" fill="#8a8a8a" stroke="none" stroke-width="1" />
<polygon points="808.5,500.3 812.4,500.1 812.4,501.0 808.5,501.1" fill="#a8a8a8" stroke="none" stroke-width="1" />
<polygon points="782.2,522.6 783.9,522.6 783.9,523.9 782.2,524.0" fill="#989898" stroke="none" stroke-width="1" />
<polygon points="774.4,506.1 780.0,505.9 780.0,507.4 774.4,507.6" fill="#8a8a8a" stroke="none" stroke-width="1" />
<polygon points="780.6,521.0 782.8,520.9 782.8,523.2 780.6,523.3" fill="#a8a8a8" stroke="none" stroke-width="1" />
<polygon points="821.3,520.0 827.8,519.8 827.8,520.6 821.3,520.9" fill="#7c7c7c" stroke="none" stroke-width="1" />
<polygon points="801.1,514.3 803.5,514.2 803.5,515.6 801.1,515.7" fill="#7c7c7c" stroke="none" stroke-width="1" />
<polygon points="809.1,503.9 811.9,503.8 811.9,506.2 809.1,506.3" fill="#b8b8b8" stroke="none" stroke-width="1" />
<polygon points="830.6,504.4 836.3,504.2 836.3,507.4 830.6,507.6" fill="#989898" stroke="none" stroke-width="1" />
<polygon points="794.6,507.2 801.3,506.9 801.3,508.3 794.6,508.6" fill="#989898" stroke="none" stroke-width="1" />
<polygon points="832.6,501.1 835.5,501.0 835.5,503.9 832.6,504.1" fill="#a8a8a8" stroke="none" stroke-width="1" />
<polygon points="799.4,511.1 806.2,510.9 806.2,513.3 799.4,513.5" fill="#7c7c7c" stroke="none" stroke-width="1" />
<polygon points="782.0,510.1 787.4,509.9 787.4,510.7 782.0,510.9" fill="#989898" stroke="none" stroke-width="1" />
<polygon points="811.5,508.6 817.7,508.3 817.7,510.2 811.5,510.4" fill="#7c7c7c" stroke="none" stroke-width="1" />
<polygon points="807.2,521.9 811.6,521.7 811.6,524.6 807.2,524.7" fill="#989898" stroke="none" stroke-width="1" />
<polygon points="827.0,512.7 828.7,512.7 828.7,515.7 827.0,515.8" fill="#b8b8b8" stroke="none" stroke-width="1" />
<polygon points="794.7,513.6 797.1,494.8 801.7,513.6" fill="#d0d0d0" stroke="#000" stroke-width="0.5" />
<polygon points="790.0,521.4 807.2,518.2 822.9,519.8 819.7,527.6 793.1,530.8" fill="#8a8a8a" stroke="#000" stroke-width="0.8" />
<ellipse cx="763.4" cy="526.1" rx="2.8" ry="0.9" fill="#777" stroke="#000" stroke-width="0.7"/>
<ellipse cx="763.4" cy="531.5" rx="2.8" ry="0.9" fill="#777" stroke="#000" stroke-width="0.7"/>
<ellipse cx="763.4" cy="537.0" rx="2.8" ry="0.9" fill="#777" stroke="#000" stroke-width="0.7"/>
<polygon points="826.8,518.2 843.2,518.2 843.2,538.6 826.8,538.6" fill="#8c8c8c" stroke="#000" stroke-width="0.8" />
<polygon points="835.4,502.6 844.8,502.6 844.8,518.2 835.4,518.2" fill="#9a9a9a" stroke="#000" stroke-width="0.8" />
<polygon points="840.1,469.7 871.4,468.8 871.4,475.1 840.1,476.0" fill="#8f8f8f" stroke="#000" stroke-width="0.8" />
<polygon points="841.7,476.0 851.0,476.0 851.0,493.2 841.7,493.2" fill="#a2a2a2" stroke="#000" stroke-width="0.8" />
<polygon points="851.0,486.9 866.7,486.9 866.7,502.6 851.0,502.6" fill="#8e8e8e" stroke="#000" stroke-width="0.8" />
<polygon points="840.9,471.3 849.5,470.8 849.5,473.6 840.9,474.1" fill="#111" stroke="none" stroke-width="1" />
<polygon points="828.3,497.0 832.3,486.0 836.0,497.0" fill="#18c838" stroke="none" stroke-width="1" />
<text x="827" y="484" font-size="9" fill="#d0d0d0" font-family="Liberation Sans,sans-serif">Y</text>
<polygon points="631.9,541.7 672.6,540.2 674.2,549.5 655.4,552.7 655.4,574.6 631.9,576.2" fill="#9a9a9a" stroke="#000" stroke-width="1" />
<ellipse cx="643.7" cy="567.5" rx="5.9" ry="5.9" fill="#a6a6a6" stroke="#000" stroke-width="0.7"/>
<ellipse cx="643.7" cy="567.5" rx="2.8" ry="2.8" fill="#999" stroke="#000" stroke-width="0.7"/>
<ellipse cx="649.9" cy="543.6" rx="1.9" ry="1.4" fill="#aaa" stroke="#000" stroke-width="0.7"/>
<ellipse cx="659.3" cy="543.3" rx="1.9" ry="1.4" fill="#aaa" stroke="#000" stroke-width="0.7"/>
<ellipse cx="669.5" cy="543.0" rx="1.9" ry="1.4" fill="#aaa" stroke="#000" stroke-width="0.7"/>
<polygon points="655.4,590.2 747.8,585.5 749.3,592.6 658.6,596.5" fill="#999" stroke="#000" stroke-width="1" />
<polygon points="654.6,549.5 667.9,549.5 670.3,590.2 658.6,591.0" fill="#9a9a9a" stroke="#000" stroke-width="1" />
<polygon points="667.9,549.5 681.2,549.5 681.2,573.0 667.9,573.0" fill="#a0a0a0" stroke="#000" stroke-width="0.8" />
<polygon points="670.3,573.0 683.6,573.0 683.6,588.7 670.3,588.7" fill="#8e8e8e" stroke="#000" stroke-width="0.8" />
<polygon points="670.3,552.4 678.9,552.1 678.9,554.2 670.3,554.7" fill="#151515" stroke="none" stroke-width="1" />
<ellipse cx="675.0" cy="564.4" rx="2.8" ry="1.3" fill="#888" stroke="#000" stroke-width="0.7"/>
<polygon points="686.7,554.2 714.9,553.5 718.0,591.8 688.3,596.5" fill="#949494" stroke="#000" stroke-width="1" />
<polygon points="687.5,594.1 718.0,592.6 718.0,599.6 689.1,602.0" fill="#8a8a8a" stroke="#000" stroke-width="1" />
<ellipse cx="709.4" cy="560.5" rx="4.1" ry="4.1" fill="#aaa" stroke="#000" stroke-width="0.7"/>
<ellipse cx="709.4" cy="560.5" rx="1.9" ry="1.9" fill="#888" stroke="#000" stroke-width="0.7"/>
<ellipse cx="693.0" cy="560.8" rx="2.8" ry="3.1" fill="#0a0a0a" stroke="#000" stroke-width="0.7"/>
<polygon points="689.1,553.5 693.0,548.8 696.9,553.0" fill="#0a0a0a" stroke="none" stroke-width="1" />
<polygon points="721.2,548.0 734.5,548.0 734.5,573.0 721.2,573.0" fill="#a0a0a0" stroke="#000" stroke-width="0.8" />
<polygon points="722.7,573.0 736.0,573.0 736.0,587.9 722.7,587.9" fill="#8e8e8e" stroke="#000" stroke-width="0.8" />
<polygon points="722.7,550.3 731.3,550.0 731.3,552.2 722.7,552.7" fill="#151515" stroke="none" stroke-width="1" />
<ellipse cx="726.6" cy="561.8" rx="2.8" ry="1.3" fill="#888" stroke="#000" stroke-width="0.7"/>
<polygon points="735.2,571.5 747.0,585.5 748.5,591.5 736.0,587.9" fill="#9c9c9c" stroke="#000" stroke-width="1" />
<polygon points="739.9,544.9 758.7,544.1 759.5,563.6 740.7,565.2" fill="#9a9a9a" stroke="#000" stroke-width="1" />
<ellipse cx="749.3" cy="558.2" rx="6.3" ry="6.3" fill="#9c9c9c" stroke="#000" stroke-width="1"/>
<polygon points="760.3,549.5 788.4,548.8 788.4,558.2 760.3,558.9" fill="#8c8c8c" stroke="#000" stroke-width="0.8" />
<ellipse cx="763.4" cy="556.6" rx="2.5" ry="1.3" fill="#777" stroke="#000" stroke-width="0.7"/>
<ellipse cx="774.4" cy="554.2" rx="2.5" ry="1.3" fill="#777" stroke="#000" stroke-width="0.7"/>
<ellipse cx="783.0" cy="553.9" rx="2.5" ry="1.3" fill="#777" stroke="#000" stroke-width="0.7"/>
<polygon points="768.1,558.9 783.7,558.9 783.7,582.4 768.1,582.4" fill="#939393" stroke="#000" stroke-width="0.8" />
<polygon points="791.6,548.0 799.4,542.5 819.7,541.7 826.8,548.0 829.1,577.7 793.1,579.3" fill="#969696" stroke="#000" stroke-width="1" />
<polygon points="791.6,579.3 829.1,577.7 829.1,588.7 793.1,591.0" fill="#8c8c8c" stroke="#000" stroke-width="1" />
<ellipse cx="800.2" cy="553.5" rx="2.8" ry="2.8" fill="#0a0a0a" stroke="#000" stroke-width="0.7"/>
<ellipse cx="817.4" cy="553.9" rx="4.1" ry="4.1" fill="#aaa" stroke="#000" stroke-width="0.7"/>
<ellipse cx="817.4" cy="553.9" rx="1.9" ry="1.9" fill="#888" stroke="#000" stroke-width="0.7"/>
<polygon points="832.3,548.0 847.9,548.0 847.9,562.1 832.3,562.1" fill="#a0a0a0" stroke="#000" stroke-width="0.8" />
<polygon points="833.8,562.1 847.1,562.1 847.1,579.3 833.8,579.3" fill="#8e8e8e" stroke="#000" stroke-width="0.8" />
<polygon points="834.6,550.0 843.2,549.7 843.2,551.9 834.6,552.4" fill="#151515" stroke="none" stroke-width="1" />
<polygon points="850.1,548.0 900.2,546.4 900.9,571.5 850.9,573.8" fill="#8e8e8e" stroke="#000" stroke-width="1" />
<polygon points="850.4,549.5 900.2,548.0 900.2,551.4 850.4,553.0" fill="#111" stroke="none" stroke-width="1" />
<polygon points="850.4,553.5 900.2,551.7 900.2,553.9 850.4,555.5" fill="#d0d0d0" stroke="none" stroke-width="1" />
<ellipse cx="854.0" cy="562.8" rx="1.3" ry="1.3" fill="#111" stroke="#000" stroke-width="0.7"/>
<ellipse cx="893.9" cy="560.8" rx="1.3" ry="1.3" fill="#111" stroke="#000" stroke-width="0.7"/>
<polygon points="900.2,537.0 908.0,536.7 909.5,593.4 902.5,594.1" fill="#9c9c9c" stroke="#000" stroke-width="1" />
<polygon points="889.2,573.0 894.7,572.2 892.3,579.3 890.8,604.0 887.6,604.0" fill="#8a8a8a" stroke="#000" stroke-width="1" />
<polyline points="845.4,508.9 954.9,502.3" fill="none" stroke="#333" stroke-width="5.2" />
<polyline points="845.4,508.9 954.9,502.3" fill="none" stroke="#c6c6c6" stroke-width="4" />
<polyline points="1014.4,529.2 1061.3,525.3" fill="none" stroke="#333" stroke-width="5.2" />
<polyline points="1014.4,529.2 1061.3,525.3" fill="none" stroke="#c6c6c6" stroke-width="4" />
<polygon points="878.2,501.8 885.3,501.8 885.3,532.3 878.2,532.3" fill="#9c9c9c" stroke="#000" stroke-width="0.8" />
<polygon points="884.5,502.6 893.9,502.6 893.9,510.4 884.5,510.4" fill="#a8a8a8" stroke="#000" stroke-width="0.8" />
<polygon points="901.7,497.9 908.0,497.9 908.0,533.9 901.7,533.9" fill="#959595" stroke="#000" stroke-width="0.8" />
<polygon points="890.8,485.4 929.9,484.1 929.9,501.3 890.8,502.6" fill="#909090" stroke="#000" stroke-width="0.8" />
<polygon points="908.0,484.6 916.6,484.6 916.6,494.8 908.0,494.8" fill="#aaa" stroke="#000" stroke-width="0.8" />
<polygon points="918.2,497.9 928.3,497.9 928.3,505.7 918.2,505.7" fill="#a0a0a0" stroke="#000" stroke-width="0.8" />
<ellipse cx="923.2" cy="500.7" rx="1.6" ry="1.6" fill="#777" stroke="#000" stroke-width="0.7"/>
<polygon points="890.8,532.3 972.1,529.2 972.1,537.0 890.8,540.2" fill="#8e8e8e" stroke="#000" stroke-width="0.8" />
<polygon points="934.6,525.3 970.6,522.9 970.6,527.6 934.6,530.0" fill="#1a1a1a" stroke="none" stroke-width="1" />
<polygon points="938.5,548.0 973.7,546.4 974.0,566.0 939.0,567.5" fill="#959595" stroke="#000" stroke-width="1" />
<ellipse cx="945.5" cy="562.1" rx="1.1" ry="1.6" fill="#333" stroke="#000" stroke-width="0.7"/>
<ellipse cx="965.1" cy="560.8" rx="1.4" ry="1.4" fill="#555" stroke="#000" stroke-width="0.7"/>
<polygon points="971.4,540.2 984.7,539.5 985.4,565.2 972.1,566.0" fill="#a0a0a0" stroke="#000" stroke-width="1" />
<ellipse cx="978.1" cy="545.9" rx="3.1" ry="3.1" fill="#a8a8a8" stroke="#000" stroke-width="0.7"/>
<polygon points="937.7,571.5 984.7,569.1 984.7,577.7 938.0,579.6" fill="#9c9c9c" stroke="#000" stroke-width="1" />
<polygon points="940.8,579.6 946.3,579.3 946.8,592.6 941.6,593.1" fill="url(#rod)" stroke="#000" stroke-width="0.6" />
<polygon points="978.4,578.0 983.9,577.7 984.4,591.5 979.2,591.8" fill="url(#rod)" stroke="#000" stroke-width="0.6" />
<polyline points="909.5,556.6 923.6,555.5" fill="none" stroke="#333" stroke-width="4.2" />
<polyline points="909.5,556.6 923.6,555.5" fill="none" stroke="#c6c6c6" stroke-width="3" />
<polygon points="918.9,551.1 929.9,551.1 929.9,560.5 918.9,560.5" fill="#c0c0c0" stroke="#000" stroke-width="0.8" />
<polygon points="919.7,551.9 922.8,551.9 922.8,559.7 919.7,559.7" fill="#222" stroke="#000" stroke-width="0.8" />
<polygon points="909.5,563.6 922.1,563.6 922.1,569.9 909.5,569.9" fill="#8a8a8a" stroke="#000" stroke-width="0.8" />
<polygon points="987.8,540.2 1025.4,538.6 1025.4,548.0 987.8,549.5" fill="#909090" stroke="#000" stroke-width="0.8" />
<polygon points="1006.6,560.5 1025.4,560.5 1025.4,599.6 1006.6,599.6" fill="#8c8c8c" stroke="#000" stroke-width="0.8" />
<polygon points="994.1,558.9 1005.0,558.5 1005.8,599.6 994.8,599.9" fill="url(#rod)" stroke="#000" stroke-width="0.7" />
<ellipse cx="998.4" cy="556.6" rx="3.1" ry="2.2" fill="#b0b0b0" stroke="#000" stroke-width="0.7"/>
<polygon points="993.3,565.2 1006.6,565.2 1006.6,569.9 993.3,569.9" fill="#777" stroke="#000" stroke-width="0.8" />
<polygon points="993.3,573.0 1006.6,573.0 1006.6,576.9 993.3,576.9" fill="#555" stroke="#000" stroke-width="0.8" />
<ellipse cx="1020.7" cy="571.5" rx="3.9" ry="3.9" fill="#222" stroke="#000" stroke-width="0.7"/>
<polygon points="1036.0,577.2 1039.4,577.2 1039.4,579.4 1036.0,579.4" fill="#111" stroke="#000" stroke-width="0" />
<polygon points="1036.0,581.2 1039.4,581.2 1039.4,583.3 1036.0,583.3" fill="#111" stroke="#000" stroke-width="0" />
<polygon points="1036.0,585.1 1039.4,585.1 1039.4,587.3 1036.0,587.3" fill="#111" stroke="#000" stroke-width="0" />
<polygon points="1040.2,518.2 1050.4,517.9 1053.5,573.0 1061.3,572.7 1061.7,586.3 1044.4,586.8" fill="#9e9e9e" stroke="#000" stroke-width="1" />
<ellipse cx="1056.7" cy="577.7" rx="3.4" ry="1.3" fill="#777" stroke="#000" stroke-width="0.7"/>
<polygon points="1050.4,524.5 1056.7,524.5 1056.7,533.9 1050.4,533.9" fill="#aaa" stroke="#000" stroke-width="0.8" />
<polygon points="891.5,596.5 1028.5,590.2 1028.5,598.1 892.3,604.0" fill="#9a9a9a" stroke="#000" stroke-width="1" />
<polygon points="911.9,440.0 972.1,440.0 972.9,458.8 912.7,463.5" fill="#9b9b9b" stroke="#000" stroke-width="1" />
<polygon points="912.7,463.5 972.9,458.8 972.9,463.5 913.0,469.0" fill="#8a8a8a" stroke="#000" stroke-width="1" />
<polygon points="980.0,440.0 1031.6,440.0 1034.0,457.2 981.5,461.1" fill="#9b9b9b" stroke="#000" stroke-width="1" />
<polygon points="981.5,461.1 1034.0,457.2 1034.3,463.5 981.8,466.6" fill="#858585" stroke="#000" stroke-width="1" />
<polygon points="954.1,444.7 962.8,444.7 963.1,458.8 954.5,458.8" fill="url(#rod)" stroke="#000" stroke-width="0.6" />
<polygon points="983.9,440.0 990.9,440.0 991.2,457.2 984.2,457.2" fill="url(#rod)" stroke="#000" stroke-width="0.6" />
<polygon points="1019.9,440.0 1026.9,440.0 1027.2,455.6 1020.2,455.6" fill="url(#rod)" stroke="#000" stroke-width="0.6" />
<polygon points="870.4,463.5 911.9,462.2 911.9,472.4 870.4,473.6" fill="#909090" stroke="#000" stroke-width="0.8" />
<polygon points="839.9,470.5 869.6,469.0 870.0,473.6 840.2,475.2" fill="#8f8f8f" stroke="#000" stroke-width="1" />
<polygon points="840.4,471.3 848.5,471.0 848.5,473.5 840.4,474.0" fill="#111" stroke="none" stroke-width="1" />
<polygon points="972.1,458.8 980.8,458.8 980.8,546.4 972.1,546.4" fill="#9a9a9a" stroke="#000" stroke-width="0.8" />
<g shape-rendering="auto" opacity=".92">
<path d="M893,512v26h7v-26zM900,538l14,2M936,512v26h-7v-26zM929,538l-14,2M896,515v20M933,515v20" fill="none" stroke="#f08a1c" stroke-width="1.6"/>
<path d="M915,510a13,14 0 1 0 12,10a9,9 0 1 1 -12,-10z" fill="#f39a20"/><path d="M912,516l6,2l-3,14l-5,-4z" fill="#f6b040"/>
<text x="947" y="530" font-size="16.600" font-weight="bold" fill="#f5912a" font-family="Liberation Sans,Noto Sans CJK SC,sans-serif">智造资料网</text>
<text x="947" y="538" font-size="4.700" font-weight="bold" fill="#f5912a" textLength="82" lengthAdjust="spacingAndGlyphs" font-family="Liberation Sans,sans-serif">INTELLIGENT MANUFACTURING DATA</text>
</g>
<polyline points="1034.0,638.0 1040.0,735.0 1046.0,858.0 1002.0,861.0" fill="none" stroke="#000" stroke-width="2" />
<polyline points="1036.0,640.0 1048.0,861.0" fill="none" stroke="#555" stroke-width="1" />
<polyline points="1002.0,864.0 1048.0,861.0" fill="none" stroke="#000" stroke-width="1" />
<polyline points="1043.0,804.0 1079.0,802.0" fill="none" stroke="#000" stroke-width="2" />
<polyline points="1043.0,808.0 1079.0,806.0" fill="none" stroke="#000" stroke-width="1" />
<polyline points="1064.0,640.0 1068.0,735.0 1078.0,800.0" fill="none" stroke="#000" stroke-width="2" />
<polyline points="764.0,872.0 884.0,865.0" fill="none" stroke="#000" stroke-width="1.5" />
<polyline points="764.0,876.0 884.0,869.0" fill="none" stroke="#000" stroke-width="1" />
<polyline points="1004.0,862.0 1046.0,859.0" fill="none" stroke="#000" stroke-width="1" />
<polygon points="606.0,914.0 666.5,910.8 727.0,907.5 787.5,904.2 848.0,901.0 908.5,897.8 969.0,894.5 1029.5,891.2 1090.0,888.0 1090.0,924.0 1029.5,927.2 969.0,930.5 908.5,933.8 848.0,937.0 787.5,940.2 727.0,943.5 666.5,946.8 606.0,950.0" fill="#989898" stroke="#000" stroke-width="0.8" />
<polygon points="606.0,914.0 666.5,910.8 727.0,907.5 787.5,904.2 848.0,901.0 908.5,897.8 969.0,894.5 1029.5,891.2 1090.0,888.0 1090.0,889.1 1029.5,892.3 969.0,895.6 908.5,898.8 848.0,902.1 787.5,905.3 727.0,908.6 666.5,911.8 606.0,915.1" fill="#000" stroke="none" stroke-width="1" />
<polygon points="606.0,916.5 666.5,913.3 727.0,910.0 787.5,906.8 848.0,903.5 908.5,900.3 969.0,897.0 1029.5,893.8 1090.0,890.5 1090.0,892.3 1029.5,895.6 969.0,898.8 908.5,902.1 848.0,905.3 787.5,908.6 727.0,911.8 666.5,915.1 606.0,918.3" fill="#000" stroke="none" stroke-width="1" />
<polygon points="606.0,919.8 666.5,916.5 727.0,913.3 787.5,910.0 848.0,906.8 908.5,903.5 969.0,900.3 1029.5,897.0 1090.0,893.8 1090.0,895.2 1029.5,898.5 969.0,901.7 908.5,905.0 848.0,908.2 787.5,911.5 727.0,914.7 666.5,918.0 606.0,921.2" fill="#000" stroke="none" stroke-width="1" />
<polygon points="606.0,922.6 666.5,919.4 727.0,916.1 787.5,912.9 848.0,909.6 908.5,906.4 969.0,903.1 1029.5,899.9 1090.0,896.6 1090.0,897.7 1029.5,901.0 969.0,904.2 908.5,907.5 848.0,910.7 787.5,914.0 727.0,917.2 666.5,920.5 606.0,923.7" fill="#000" stroke="none" stroke-width="1" />
<polygon points="606.0,924.8 666.5,921.5 727.0,918.3 787.5,915.0 848.0,911.8 908.5,908.5 969.0,905.3 1029.5,902.0 1090.0,898.8 1090.0,899.5 1029.5,902.8 969.0,906.0 908.5,909.3 848.0,912.5 787.5,915.8 727.0,919.0 666.5,922.3 606.0,925.5" fill="#d0d0d0" stroke="none" stroke-width="1" />
<polygon points="606.0,932.0 666.5,928.8 727.0,925.5 787.5,922.2 848.0,919.0 908.5,915.8 969.0,912.5 1029.5,909.2 1090.0,906.0 1090.0,908.5 1029.5,911.8 969.0,915.0 908.5,918.3 848.0,921.5 787.5,924.8 727.0,928.0 666.5,931.3 606.0,934.5" fill="#000" stroke="none" stroke-width="1" />
<polygon points="606.0,939.2 666.5,936.0 727.0,932.7 787.5,929.5 848.0,926.2 908.5,923.0 969.0,919.7 1029.5,916.5 1090.0,913.2 1090.0,916.1 1029.5,919.3 969.0,922.6 908.5,925.8 848.0,929.1 787.5,932.3 727.0,935.6 666.5,938.8 606.0,942.1" fill="#000" stroke="none" stroke-width="1" />
<polygon points="606.0,948.9 666.5,945.7 727.0,942.4 787.5,939.2 848.0,935.9 908.5,932.7 969.0,929.4 1029.5,926.2 1090.0,922.9 1090.0,924.0 1029.5,927.2 969.0,930.5 908.5,933.8 848.0,937.0 787.5,940.2 727.0,943.5 666.5,946.8 606.0,950.0" fill="#000" stroke="none" stroke-width="1" />
<polyline points="606.0,915.6 666.5,912.4 727.0,909.1 787.5,905.9 848.0,902.6 908.5,899.4 969.0,896.1 1029.5,892.9 1090.0,889.6" fill="none" stroke="#a0a0a0" stroke-width="0.8" stroke-dasharray="9 12"/>
<polyline points="606.0,919.0 666.5,915.8 727.0,912.5 787.5,909.3 848.0,906.0 908.5,902.8 969.0,899.5 1029.5,896.3 1090.0,893.0" fill="none" stroke="#111" stroke-width="0.9" stroke-dasharray="14 8"/>
<polyline points="606.0,921.9 666.5,918.7 727.0,915.4 787.5,912.2 848.0,908.9 908.5,905.7 969.0,902.4 1029.5,899.2 1090.0,895.9" fill="none" stroke="#a0a0a0" stroke-width="0.8" stroke-dasharray="10 12"/>
<polyline points="606.0,929.1 666.5,925.9 727.0,922.6 787.5,919.4 848.0,916.1 908.5,912.9 969.0,909.6 1029.5,906.4 1090.0,903.1" fill="none" stroke="#111" stroke-width="0.8" stroke-dasharray="18 9"/>
<polyline points="606.0,937.0 666.5,933.8 727.0,930.5 787.5,927.3 848.0,924.0 908.5,920.8 969.0,917.5 1029.5,914.3 1090.0,911.0" fill="none" stroke="#111" stroke-width="0.8" stroke-dasharray="20 8"/>
<polyline points="606.0,945.7 666.5,942.4 727.0,939.2 787.5,935.9 848.0,932.7 908.5,929.4 969.0,926.2 1029.5,922.9 1090.0,919.7" fill="none" stroke="#111" stroke-width="0.8" stroke-dasharray="16 10"/>
<polygon points="606.0,950.0 666.5,946.8 727.0,943.5 787.5,940.2 848.0,937.0 908.5,933.8 969.0,930.5 1029.5,927.2 1090.0,924.0 1090.0,960.0 1029.5,963.2 969.0,966.5 908.5,969.8 848.0,973.0 787.5,976.2 727.0,979.5 666.5,982.8 606.0,986.0" fill="#989898" stroke="#000" stroke-width="0.8" />
<polygon points="606.0,950.0 666.5,946.8 727.0,943.5 787.5,940.2 848.0,937.0 908.5,933.8 969.0,930.5 1029.5,927.2 1090.0,924.0 1090.0,925.1 1029.5,928.3 969.0,931.6 908.5,934.8 848.0,938.1 787.5,941.3 727.0,944.6 666.5,947.8 606.0,951.1" fill="#000" stroke="none" stroke-width="1" />
<polygon points="606.0,952.5 666.5,949.3 727.0,946.0 787.5,942.8 848.0,939.5 908.5,936.3 969.0,933.0 1029.5,929.8 1090.0,926.5 1090.0,928.3 1029.5,931.6 969.0,934.8 908.5,938.1 848.0,941.3 787.5,944.6 727.0,947.8 666.5,951.1 606.0,954.3" fill="#000" stroke="none" stroke-width="1" />
<polygon points="606.0,955.8 666.5,952.5 727.0,949.3 787.5,946.0 848.0,942.8 908.5,939.5 969.0,936.3 1029.5,933.0 1090.0,929.8 1090.0,931.2 1029.5,934.5 969.0,937.7 908.5,941.0 848.0,944.2 787.5,947.5 727.0,950.7 666.5,954.0 606.0,957.2" fill="#000" stroke="none" stroke-width="1" />
<polygon points="606.0,958.6 666.5,955.4 727.0,952.1 787.5,948.9 848.0,945.6 908.5,942.4 969.0,939.1 1029.5,935.9 1090.0,932.6 1090.0,933.7 1029.5,937.0 969.0,940.2 908.5,943.5 848.0,946.7 787.5,950.0 727.0,953.2 666.5,956.5 606.0,959.7" fill="#000" stroke="none" stroke-width="1" />
<polygon points="606.0,960.8 666.5,957.5 727.0,954.3 787.5,951.0 848.0,947.8 908.5,944.5 969.0,941.3 1029.5,938.0 1090.0,934.8 1090.0,935.5 1029.5,938.8 969.0,942.0 908.5,945.3 848.0,948.5 787.5,951.8 727.0,955.0 666.5,958.3 606.0,961.5" fill="#d0d0d0" stroke="none" stroke-width="1" />
<polygon points="606.0,968.0 666.5,964.8 727.0,961.5 787.5,958.2 848.0,955.0 908.5,951.8 969.0,948.5 1029.5,945.2 1090.0,942.0 1090.0,944.5 1029.5,947.8 969.0,951.0 908.5,954.3 848.0,957.5 787.5,960.8 727.0,964.0 666.5,967.3 606.0,970.5" fill="#000" stroke="none" stroke-width="1" />
<polygon points="606.0,975.2 666.5,972.0 727.0,968.7 787.5,965.5 848.0,962.2 908.5,959.0 969.0,955.7 1029.5,952.5 1090.0,949.2 1090.0,952.1 1029.5,955.3 969.0,958.6 908.5,961.8 848.0,965.1 787.5,968.3 727.0,971.6 666.5,974.8 606.0,978.1" fill="#000" stroke="none" stroke-width="1" />
<polygon points="606.0,984.9 666.5,981.7 727.0,978.4 787.5,975.2 848.0,971.9 908.5,968.7 969.0,965.4 1029.5,962.2 1090.0,958.9 1090.0,960.0 1029.5,963.2 969.0,966.5 908.5,969.8 848.0,973.0 787.5,976.2 727.0,979.5 666.5,982.8 606.0,986.0" fill="#000" stroke="none" stroke-width="1" />
<polyline points="606.0,951.6 666.5,948.4 727.0,945.1 787.5,941.9 848.0,938.6 908.5,935.4 969.0,932.1 1029.5,928.9 1090.0,925.6" fill="none" stroke="#a0a0a0" stroke-width="0.8" stroke-dasharray="9 12"/>
<polyline points="606.0,955.0 666.5,951.8 727.0,948.5 787.5,945.3 848.0,942.0 908.5,938.8 969.0,935.5 1029.5,932.3 1090.0,929.0" fill="none" stroke="#111" stroke-width="0.9" stroke-dasharray="14 8"/>
<polyline points="606.0,957.9 666.5,954.7 727.0,951.4 787.5,948.2 848.0,944.9 908.5,941.7 969.0,938.4 1029.5,935.2 1090.0,931.9" fill="none" stroke="#a0a0a0" stroke-width="0.8" stroke-dasharray="10 12"/>
<polyline points="606.0,965.1 666.5,961.9 727.0,958.6 787.5,955.4 848.0,952.1 908.5,948.9 969.0,945.6 1029.5,942.4 1090.0,939.1" fill="none" stroke="#111" stroke-width="0.8" stroke-dasharray="18 9"/>
<polyline points="606.0,973.0 666.5,969.8 727.0,966.5 787.5,963.3 848.0,960.0 908.5,956.8 969.0,953.5 1029.5,950.3 1090.0,947.0" fill="none" stroke="#111" stroke-width="0.8" stroke-dasharray="20 8"/>
<polyline points="606.0,981.7 666.5,978.4 727.0,975.2 787.5,971.9 848.0,968.7 908.5,965.4 969.0,962.2 1029.5,958.9 1090.0,955.7" fill="none" stroke="#111" stroke-width="0.8" stroke-dasharray="16 10"/>
<polygon points="606.0,986.0 666.5,982.8 727.0,979.5 787.5,976.2 848.0,973.0 908.5,969.8 969.0,966.5 1029.5,963.2 1090.0,960.0 1090.0,996.0 1029.5,999.2 969.0,1002.5 908.5,1005.8 848.0,1009.0 787.5,1012.2 727.0,1015.5 666.5,1018.8 606.0,1022.0" fill="#989898" stroke="#000" stroke-width="0.8" />
<polygon points="606.0,986.0 666.5,982.8 727.0,979.5 787.5,976.2 848.0,973.0 908.5,969.8 969.0,966.5 1029.5,963.2 1090.0,960.0 1090.0,961.1 1029.5,964.3 969.0,967.6 908.5,970.8 848.0,974.1 787.5,977.3 727.0,980.6 666.5,983.8 606.0,987.1" fill="#000" stroke="none" stroke-width="1" />
<polygon points="606.0,988.5 666.5,985.3 727.0,982.0 787.5,978.8 848.0,975.5 908.5,972.3 969.0,969.0 1029.5,965.8 1090.0,962.5 1090.0,964.3 1029.5,967.6 969.0,970.8 908.5,974.1 848.0,977.3 787.5,980.6 727.0,983.8 666.5,987.1 606.0,990.3" fill="#000" stroke="none" stroke-width="1" />
<polygon points="606.0,991.8 666.5,988.5 727.0,985.3 787.5,982.0 848.0,978.8 908.5,975.5 969.0,972.3 1029.5,969.0 1090.0,965.8 1090.0,967.2 1029.5,970.5 969.0,973.7 908.5,977.0 848.0,980.2 787.5,983.5 727.0,986.7 666.5,990.0 606.0,993.2" fill="#000" stroke="none" stroke-width="1" />
<polygon points="606.0,994.6 666.5,991.4 727.0,988.1 787.5,984.9 848.0,981.6 908.5,978.4 969.0,975.1 1029.5,971.9 1090.0,968.6 1090.0,969.7 1029.5,973.0 969.0,976.2 908.5,979.5 848.0,982.7 787.5,986.0 727.0,989.2 666.5,992.5 606.0,995.7" fill="#000" stroke="none" stroke-width="1" />
<polygon points="606.0,996.8 666.5,993.5 727.0,990.3 787.5,987.0 848.0,983.8 908.5,980.5 969.0,977.3 1029.5,974.0 1090.0,970.8 1090.0,971.5 1029.5,974.8 969.0,978.0 908.5,981.3 848.0,984.5 787.5,987.8 727.0,991.0 666.5,994.3 606.0,997.5" fill="#d0d0d0" stroke="none" stroke-width="1" />
<polygon points="606.0,1004.0 666.5,1000.8 727.0,997.5 787.5,994.2 848.0,991.0 908.5,987.8 969.0,984.5 1029.5,981.2 1090.0,978.0 1090.0,980.5 1029.5,983.8 969.0,987.0 908.5,990.3 848.0,993.5 787.5,996.8 727.0,1000.0 666.5,1003.3 606.0,1006.5" fill="#000" stroke="none" stroke-width="1" />
<polygon points="606.0,1011.2 666.5,1008.0 727.0,1004.7 787.5,1001.5 848.0,998.2 908.5,995.0 969.0,991.7 1029.5,988.5 1090.0,985.2 1090.0,988.1 1029.5,991.3 969.0,994.6 908.5,997.8 848.0,1001.1 787.5,1004.3 727.0,1007.6 666.5,1010.8 606.0,1014.1" fill="#000" stroke="none" stroke-width="1" />
<polygon points="606.0,1020.9 666.5,1017.7 727.0,1014.4 787.5,1011.2 848.0,1007.9 908.5,1004.7 969.0,1001.4 1029.5,998.2 1090.0,994.9 1090.0,996.0 1029.5,999.2 969.0,1002.5 908.5,1005.8 848.0,1009.0 787.5,1012.2 727.0,1015.5 666.5,1018.8 606.0,1022.0" fill="#000" stroke="none" stroke-width="1" />
<polyline points="606.0,987.6 666.5,984.4 727.0,981.1 787.5,977.9 848.0,974.6 908.5,971.4 969.0,968.1 1029.5,964.9 1090.0,961.6" fill="none" stroke="#a0a0a0" stroke-width="0.8" stroke-dasharray="9 12"/>
<polyline points="606.0,991.0 666.5,987.8 727.0,984.5 787.5,981.3 848.0,978.0 908.5,974.8 969.0,971.5 1029.5,968.3 1090.0,965.0" fill="none" stroke="#111" stroke-width="0.9" stroke-dasharray="14 8"/>
<polyline points="606.0,993.9 666.5,990.7 727.0,987.4 787.5,984.2 848.0,980.9 908.5,977.7 969.0,974.4 1029.5,971.2 1090.0,967.9" fill="none" stroke="#a0a0a0" stroke-width="0.8" stroke-dasharray="10 12"/>
<polyline points="606.0,1001.1 666.5,997.9 727.0,994.6 787.5,991.4 848.0,988.1 908.5,984.9 969.0,981.6 1029.5,978.4 1090.0,975.1" fill="none" stroke="#111" stroke-width="0.8" stroke-dasharray="18 9"/>
<polyline points="606.0,1009.0 666.5,1005.8 727.0,1002.5 787.5,999.3 848.0,996.0 908.5,992.8 969.0,989.5 1029.5,986.3 1090.0,983.0" fill="none" stroke="#111" stroke-width="0.8" stroke-dasharray="20 8"/>
<polyline points="606.0,1017.7 666.5,1014.4 727.0,1011.2 787.5,1007.9 848.0,1004.7 908.5,1001.4 969.0,998.2 1029.5,994.9 1090.0,991.7" fill="none" stroke="#111" stroke-width="0.8" stroke-dasharray="16 10"/>
<polyline points="606.0,914.0 1088.0,888.0" fill="none" stroke="#000" stroke-width="1" />
<polygon points="602.0,836.0 640.0,834.0 642.0,914.0 606.0,916.0" fill="#9c9c9c" stroke="#000" stroke-width="0.8" />
<polygon points="602.0,829.0 640.0,827.0 640.0,834.0 602.0,836.0" fill="url(#hh)" stroke="#000" stroke-width="0.6" />
<polygon points="831.0,1000.0 851.0,977.0 860.0,1000.0" fill="#adadad" stroke="#000" stroke-width="0.6" />
<polygon points="851.0,977.0 877.0,1000.0 860.0,1000.0" fill="#7a7a7a" stroke="#000" stroke-width="0.6" />
<polygon points="591.0,640.0 651.5,636.6 712.0,633.2 772.5,629.9 833.0,626.5 893.5,623.1 954.0,619.8 1014.5,616.4 1075.0,613.0 1076.0,634.0 1015.5,637.2 955.0,640.5 894.5,643.8 834.0,647.0 773.5,650.2 713.0,653.5 652.5,656.8 592.0,660.0" fill="#989898" stroke="#000" stroke-width="0.8" />
<polygon points="591.0,640.0 651.5,636.6 712.0,633.2 772.5,629.9 833.0,626.5 893.5,623.1 954.0,619.8 1014.5,616.4 1075.0,613.0 1075.0,613.6 1014.5,617.0 954.0,620.4 893.5,623.7 833.0,627.1 772.5,630.5 712.0,633.9 651.5,637.2 591.0,640.6" fill="#000" stroke="none" stroke-width="1" />
<polygon points="591.1,641.4 651.6,638.0 712.1,634.7 772.6,631.3 833.1,627.9 893.6,624.6 954.1,621.2 1014.6,617.8 1075.1,614.5 1075.1,615.5 1014.6,618.9 954.1,622.2 893.6,625.6 833.1,629.0 772.6,632.3 712.1,635.7 651.6,639.0 591.1,642.4" fill="#000" stroke="none" stroke-width="1" />
<polygon points="591.2,643.2 651.7,639.8 712.2,636.5 772.7,633.1 833.2,629.8 893.7,626.4 954.2,623.1 1014.7,619.7 1075.2,616.4 1075.2,617.2 1014.7,620.5 954.2,623.9 893.7,627.2 833.2,630.6 772.7,634.0 712.2,637.3 651.7,640.6 591.2,644.0" fill="#000" stroke="none" stroke-width="1" />
<polygon points="591.2,644.8 651.7,641.5 712.2,638.1 772.7,634.8 833.2,631.4 893.7,628.1 954.2,624.7 1014.7,621.4 1075.2,618.0 1075.3,618.7 1014.8,622.0 954.3,625.4 893.8,628.7 833.3,632.0 772.8,635.4 712.3,638.7 651.8,642.1 591.3,645.4" fill="#000" stroke="none" stroke-width="1" />
<polygon points="591.3,646.0 651.8,642.7 712.3,639.3 772.8,636.0 833.3,632.6 893.8,629.3 954.3,626.0 1014.8,622.6 1075.3,619.3 1075.3,619.7 1014.8,623.1 954.3,626.4 893.8,629.7 833.3,633.1 772.8,636.4 712.3,639.7 651.8,643.1 591.3,646.4" fill="#d0d0d0" stroke="none" stroke-width="1" />
<polygon points="591.5,650.0 652.0,646.7 712.5,643.4 773.0,640.1 833.5,636.8 894.0,633.4 954.5,630.1 1015.0,626.8 1075.5,623.5 1075.6,625.0 1015.1,628.3 954.6,631.6 894.1,634.9 833.6,638.2 773.1,641.5 712.6,644.8 652.1,648.1 591.6,651.4" fill="#000" stroke="none" stroke-width="1" />
<polygon points="591.7,654.0 652.2,650.7 712.7,647.4 773.2,644.1 833.7,640.9 894.2,637.6 954.7,634.3 1015.2,631.0 1075.7,627.7 1075.8,629.4 1015.3,632.7 954.8,635.9 894.3,639.2 833.8,642.5 773.3,645.8 712.8,649.0 652.3,652.3 591.8,655.6" fill="#000" stroke="none" stroke-width="1" />
<polygon points="592.0,659.4 652.5,656.1 713.0,652.9 773.5,649.6 834.0,646.4 894.5,643.1 955.0,639.9 1015.5,636.6 1076.0,633.4 1076.0,634.0 1015.5,637.2 955.0,640.5 894.5,643.8 834.0,647.0 773.5,650.2 713.0,653.5 652.5,656.8 592.0,660.0" fill="#000" stroke="none" stroke-width="1" />
<polyline points="591.0,640.9 651.5,637.5 712.0,634.2 772.5,630.8 833.0,627.4 893.5,624.1 954.0,620.7 1014.5,617.3 1075.0,613.9" fill="none" stroke="#a0a0a0" stroke-width="0.8" stroke-dasharray="9 12"/>
<polyline points="591.1,642.8 651.6,639.4 712.1,636.1 772.6,632.7 833.1,629.4 893.6,626.0 954.1,622.7 1014.6,619.3 1075.1,615.9" fill="none" stroke="#111" stroke-width="0.9" stroke-dasharray="14 8"/>
<polyline points="591.2,644.4 651.7,641.1 712.2,637.7 772.7,634.4 833.2,631.0 893.7,627.7 954.2,624.3 1014.7,621.0 1075.2,617.6" fill="none" stroke="#a0a0a0" stroke-width="0.8" stroke-dasharray="10 12"/>
<polyline points="591.4,648.4 651.9,645.1 712.4,641.8 772.9,638.4 833.4,635.1 893.9,631.8 954.4,628.5 1014.9,625.1 1075.4,621.8" fill="none" stroke="#111" stroke-width="0.8" stroke-dasharray="18 9"/>
<polyline points="591.6,652.8 652.1,649.5 712.6,646.2 773.1,642.9 833.6,639.6 894.1,636.3 954.6,633.0 1015.1,629.7 1075.6,626.4" fill="none" stroke="#111" stroke-width="0.8" stroke-dasharray="20 8"/>
<polyline points="591.9,657.6 652.4,654.3 712.9,651.1 773.4,647.8 833.9,644.5 894.4,641.3 954.9,638.0 1015.4,634.7 1075.9,631.5" fill="none" stroke="#111" stroke-width="0.8" stroke-dasharray="16 10"/>
<polygon points="629.0,659.0 729.0,654.0 732.0,729.0 634.0,733.0" fill="#959595" stroke="#000" stroke-width="1" />
<polygon points="728.0,631.0 847.0,625.0 850.0,648.0 729.0,654.0" fill="#959595" stroke="#000" stroke-width="1" />
<polygon points="729.0,654.0 850.0,648.0 854.0,728.0 732.0,734.0" fill="#959595" stroke="#000" stroke-width="1" />
<polygon points="850.0,647.0 864.0,646.0 867.0,716.0 853.0,717.0" fill="#9b9b9b" stroke="#000" stroke-width="0.8" />
<ellipse cx="857" cy="655" rx="3.5" ry="2.5" fill="#333"/>
<ellipse cx="861" cy="700" rx="3.5" ry="2.5" fill="#333"/>
<circle cx="747" cy="666" r="1.6" fill="none" stroke="#000" stroke-width="0.8"/>
<circle cx="790" cy="663" r="1.6" fill="none" stroke="#000" stroke-width="0.8"/>
<circle cx="832" cy="661" r="1.6" fill="none" stroke="#000" stroke-width="0.8"/>
<polygon points="638.0,628.0 687.0,626.0 688.0,658.0 640.0,660.0" fill="#9e9e9e" stroke="#000" stroke-width="0.8" />
<polyline points="638.0,641.0 688.0,639.0" fill="none" stroke="#000" stroke-width="0.8" />
<ellipse cx="651" cy="650" rx="3" ry="2" fill="#222"/>
<ellipse cx="676" cy="648" rx="3" ry="2" fill="#222"/>
<polygon points="810.0,731.0 814.0,731.0 814.0,741.0 810.0,741.0" fill="#c0c0c0" stroke="#000" stroke-width="0.6" />
<polygon points="881.0,941.0 887.0,971.0 994.0,966.0 1001.0,957.0 1003.0,969.0 993.0,976.0 888.0,982.0 882.0,979.0" fill="#9a9a9a" stroke="#000" stroke-width="0.8" />
<polygon points="994.0,966.0 1001.0,957.0 1003.0,969.0 993.0,976.0" fill="#555" stroke="#000" stroke-width="0.6" />
<polygon points="884.0,810.0 896.0,810.0 903.0,966.0 889.0,966.0" fill="url(#rod)" stroke="#000" stroke-width="0.6" />
<path d="M896,810 L903,964 Q940,975 975,962 L965,808 Z" fill="url(#cyl)" stroke="#000" stroke-width="0.8" />
<path d="M929,848 Q930,812 964,808 Q999,810 1001,845 L1004,928 Q1003,960 971,962 Q937,962 934,930 Z" fill="#979797" stroke="#000" stroke-width="1" />
<circle cx="963" cy="813" r="1.4" fill="#555" stroke="#000" stroke-width="0.6"/>
<circle cx="932" cy="854" r="1.4" fill="#555" stroke="#000" stroke-width="0.6"/>
<circle cx="995" cy="851" r="1.4" fill="#555" stroke="#000" stroke-width="0.6"/>
<circle cx="936" cy="912" r="1.4" fill="#555" stroke="#000" stroke-width="0.6"/>
<circle cx="998" cy="909" r="1.4" fill="#555" stroke="#000" stroke-width="0.6"/>
<circle cx="969" cy="957" r="1.4" fill="#555" stroke="#000" stroke-width="0.6"/>
<polygon points="641.0,955.0 647.0,985.0 754.0,980.0 761.0,971.0 763.0,983.0 753.0,990.0 648.0,996.0 642.0,993.0" fill="#9a9a9a" stroke="#000" stroke-width="0.8" />
<polygon points="754.0,980.0 761.0,971.0 763.0,983.0 753.0,990.0" fill="#555" stroke="#000" stroke-width="0.6" />
<polygon points="644.0,824.0 656.0,824.0 663.0,980.0 649.0,980.0" fill="url(#rod)" stroke="#000" stroke-width="0.6" />
<path d="M656,824 L663,978 Q700,989 735,976 L725,822 Z" fill="url(#cyl)" stroke="#000" stroke-width="0.8" />
<path d="M689,862 Q690,826 724,822 Q759,824 761,859 L764,942 Q763,974 731,976 Q697,976 694,944 Z" fill="#979797" stroke="#000" stroke-width="1" />
<circle cx="723" cy="827" r="1.4" fill="#555" stroke="#000" stroke-width="0.6"/>
<circle cx="692" cy="868" r="1.4" fill="#555" stroke="#000" stroke-width="0.6"/>
<circle cx="755" cy="865" r="1.4" fill="#555" stroke="#000" stroke-width="0.6"/>
<circle cx="696" cy="926" r="1.4" fill="#555" stroke="#000" stroke-width="0.6"/>
<circle cx="758" cy="923" r="1.4" fill="#555" stroke="#000" stroke-width="0.6"/>
<circle cx="729" cy="971" r="1.4" fill="#555" stroke="#000" stroke-width="0.6"/>
<path d="M871,770 Q871,765 878,764 L982,757 Q989,757 990,762 L994,789 L981,794 L886,799 L872,794 Z" fill="#9c9c9c" stroke="#000" stroke-width="1" />
<polygon points="872.0,794.0 886.0,799.0 886.0,812.0 874.0,808.0" fill="#b2b2b2" stroke="#000" stroke-width="0.7" />
<polygon points="886.0,799.0 981.0,794.0 982.0,806.0 886.0,812.0" fill="#8e8e8e" stroke="#000" stroke-width="0.7" />
<polygon points="981.0,794.0 994.0,789.0 994.0,801.0 982.0,806.0" fill="#4e4e4e" stroke="#000" stroke-width="0.7" />
<circle cx="933.5" cy="801" r="5.5" fill="#b8b8b8" stroke="#000" stroke-width="0.8"/>
<ellipse cx="888" cy="767" rx="3" ry="1.6" fill="#777" stroke="#000" stroke-width="0.6"/>
<ellipse cx="973" cy="762" rx="3" ry="1.6" fill="#777" stroke="#000" stroke-width="0.6"/>
<ellipse cx="890" cy="791" rx="3" ry="1.6" fill="#777" stroke="#000" stroke-width="0.6"/>
<ellipse cx="975" cy="787" rx="3" ry="1.6" fill="#777" stroke="#000" stroke-width="0.6"/>
<polygon points="625.0,737.0 746.0,731.0 749.0,760.0 736.0,765.0 640.0,774.0 628.0,766.0" fill="#9c9c9c" stroke="#000" stroke-width="1" />
<polygon points="628.0,766.0 640.0,774.0 641.0,785.0 629.0,777.0" fill="#b2b2b2" stroke="#000" stroke-width="0.7" />
<polygon points="640.0,774.0 736.0,765.0 737.0,776.0 641.0,785.0" fill="#8e8e8e" stroke="#000" stroke-width="0.7" />
<polygon points="736.0,765.0 749.0,760.0 749.0,771.0 737.0,776.0" fill="#4e4e4e" stroke="#000" stroke-width="0.7" />
<path d="M684,774 A5,5 0 0 1 696,773" fill="#b8b8b8" stroke="#000" stroke-width="0.8" />
<polygon points="630.0,778.0 749.0,769.0 752.0,802.0 740.0,807.0 643.0,815.0 631.0,808.0" fill="#9c9c9c" stroke="#000" stroke-width="1" />
<polygon points="631.0,808.0 643.0,815.0 644.0,826.0 634.0,821.0" fill="#b2b2b2" stroke="#000" stroke-width="0.7" />
<polygon points="643.0,815.0 740.0,807.0 741.0,818.0 644.0,826.0" fill="#8e8e8e" stroke="#000" stroke-width="0.7" />
<polygon points="740.0,807.0 752.0,802.0 753.0,814.0 741.0,818.0" fill="#4e4e4e" stroke="#000" stroke-width="0.7" />
<circle cx="692" cy="814" r="5.5" fill="#b8b8b8" stroke="#000" stroke-width="0.8"/>
<ellipse cx="643" cy="739" rx="3" ry="1.6" fill="#666" stroke="#000" stroke-width="0.6"/>
<ellipse cx="729" cy="734" rx="3" ry="1.6" fill="#666" stroke="#000" stroke-width="0.6"/>
<ellipse cx="645" cy="762" rx="3" ry="1.6" fill="#666" stroke="#000" stroke-width="0.6"/>
<ellipse cx="730" cy="757" rx="3" ry="1.6" fill="#666" stroke="#000" stroke-width="0.6"/>
<ellipse cx="647" cy="781" rx="3" ry="1.6" fill="#666" stroke="#000" stroke-width="0.6"/>
<ellipse cx="731" cy="775" rx="3" ry="1.6" fill="#666" stroke="#000" stroke-width="0.6"/>
<ellipse cx="649" cy="804" rx="3" ry="1.6" fill="#666" stroke="#000" stroke-width="0.6"/>
<ellipse cx="733" cy="799" rx="3" ry="1.6" fill="#666" stroke="#000" stroke-width="0.6"/>
<polygon points="1030.0,124.0 1038.0,300.0 1043.0,386.0 1063.0,386.0 1059.0,280.0 1051.0,112.0" fill="#989898" stroke="#000" stroke-width="0.8" />
<polygon points="1030.0,124.0 1038.0,300.0 1043.0,386.0 1045.4,386.0 1040.5,297.6 1032.5,122.6" fill="#000" stroke="none" stroke-width="1" />
<polygon points="1034.6,121.4 1042.6,295.6 1047.4,386.0 1053.0,386.0 1048.5,290.0 1040.5,118.0" fill="#000" stroke="none" stroke-width="1" />
<polygon points="1043.0,116.6 1051.0,287.6 1055.4,386.0 1059.0,386.0 1054.8,284.0 1046.8,114.4" fill="#000" stroke="none" stroke-width="1" />
<polygon points="1048.9,113.2 1056.9,282.0 1061.0,386.0 1061.8,386.0 1057.7,281.2 1049.7,112.7" fill="#000" stroke="none" stroke-width="1" />
<polyline points="1036.3,120.4 1044.3,294.0 1049.0,386.0" fill="none" stroke="#a8a8a8" stroke-width="1" stroke-dasharray="7 12"/>
<polyline points="1038.8,119.0 1046.8,291.6 1051.4,386.0" fill="none" stroke="#a8a8a8" stroke-width="1" stroke-dasharray="6 13"/>
<polyline points="1044.7,115.6 1052.7,286.0 1057.0,386.0" fill="none" stroke="#a8a8a8" stroke-width="1" stroke-dasharray="7 12"/>
<polygon points="1051.0,109.0 1059.0,280.0 1067.0,520.0 1076.0,735.0 1088.0,945.0 1092.0,1000.0 1119.0,1000.0 1116.0,945.0 1105.0,735.0 1095.6,520.0 1083.7,280.0 1074.0,109.0" fill="#989898" stroke="#000" stroke-width="0.8" />
<polygon points="1051.0,109.0 1059.0,280.0 1067.0,520.0 1076.0,735.0 1088.0,945.0 1092.0,1000.0 1093.1,1000.0 1089.1,945.0 1077.2,735.0 1068.1,520.0 1060.0,280.0 1051.9,109.0" fill="#000" stroke="none" stroke-width="1" />
<polygon points="1053.8,109.0 1062.0,280.0 1070.4,520.0 1079.5,735.0 1091.4,945.0 1095.2,1000.0 1096.0,1000.0 1092.2,945.0 1080.4,735.0 1071.4,520.0 1062.9,280.0 1054.7,109.0" fill="#000" stroke="none" stroke-width="1" />
<polygon points="1060.2,109.0 1068.9,280.0 1078.4,520.0 1087.6,735.0 1099.2,945.0 1102.8,1000.0 1103.6,1000.0 1100.1,945.0 1088.6,735.0 1079.5,520.0 1069.8,280.0 1061.1,109.0" fill="#000" stroke="none" stroke-width="1" />
<polygon points="1063.0,109.0 1071.8,280.0 1081.9,520.0 1091.1,735.0 1102.6,945.0 1106.0,1000.0 1106.8,1000.0 1103.4,945.0 1092.0,735.0 1082.9,520.0 1072.8,280.0 1063.9,109.0" fill="#000" stroke="none" stroke-width="1" />
<polygon points="1068.5,109.0 1077.8,280.0 1088.7,520.0 1098.0,735.0 1109.3,945.0 1112.5,1000.0 1113.3,1000.0 1110.1,945.0 1098.9,735.0 1089.6,520.0 1078.5,280.0 1069.2,109.0" fill="#000" stroke="none" stroke-width="1" />
<polygon points="1073.3,109.0 1083.0,280.0 1094.7,520.0 1104.1,735.0 1115.2,945.0 1118.2,1000.0 1119.0,1000.0 1116.0,945.0 1105.0,735.0 1095.6,520.0 1083.7,280.0 1074.0,109.0" fill="#000" stroke="none" stroke-width="1" />
<polygon points="1065.3,109.0 1074.3,280.0 1084.7,520.0 1094.0,735.0 1105.4,945.0 1108.7,1000.0 1109.0,1000.0 1105.6,945.0 1094.3,735.0 1085.0,520.0 1074.6,280.0 1065.5,109.0" fill="#c4c4c4" stroke="none" stroke-width="1" />
<polyline points="1056.8,109.0 1065.2,280.0 1074.2,520.0 1083.2,735.0 1095.0,945.0 1098.8,1000.0" fill="none" stroke="#111" stroke-width="1.2" stroke-dasharray="13 7"/>
<polyline points="1058.6,109.0 1067.2,280.0 1076.4,520.0 1085.6,735.0 1097.2,945.0 1100.9,1000.0" fill="none" stroke="#111" stroke-width="1.2" stroke-dasharray="12 8"/>
<polyline points="1066.6,109.0 1075.8,280.0 1086.4,520.0 1095.7,735.0 1107.0,945.0 1110.4,1000.0" fill="none" stroke="#111" stroke-width="1" stroke-dasharray="15 6"/>
<polyline points="1071.2,109.0 1080.7,280.0 1092.2,520.0 1101.5,735.0 1112.6,945.0 1115.8,1000.0" fill="none" stroke="#111" stroke-width="1" stroke-dasharray="14 7"/>
<polygon points="535.0,109.0 544.0,300.0 548.0,400.0 555.0,525.0 562.9,680.0 565.5,760.0 573.0,860.0 583.5,1000.0 608.6,1000.0 603.0,860.0 598.5,760.0 594.9,680.0 591.5,525.0 588.7,400.0 584.0,300.0 575.0,109.0" fill="#989898" stroke="#000" stroke-width="0.8" />
<polygon points="535.0,109.0 544.0,300.0 548.0,400.0 555.0,525.0 562.9,680.0 565.5,760.0 573.0,860.0 583.5,1000.0 585.0,1000.0 575.5,860.0 568.7,760.0 566.4,680.0 559.9,525.0 554.3,400.0 550.8,300.0 543.0,109.0" fill="#000" stroke="none" stroke-width="1" />
<polygon points="544.4,109.0 552.4,300.0 556.0,400.0 561.6,525.0 568.1,680.0 570.5,760.0 577.1,860.0 586.5,1000.0 587.3,1000.0 578.0,860.0 571.4,760.0 568.9,680.0 562.5,525.0 557.0,400.0 553.3,300.0 545.2,109.0" fill="#000" stroke="none" stroke-width="1" />
<polygon points="551.4,109.0 558.8,300.0 562.2,400.0 566.7,525.0 572.1,680.0 574.5,760.0 580.5,860.0 589.0,1000.0 589.8,1000.0 581.4,860.0 575.5,760.0 573.2,680.0 568.0,525.0 563.7,400.0 560.3,300.0 553.0,109.0" fill="#000" stroke="none" stroke-width="1" />
<polygon points="554.6,109.0 562.0,300.0 565.4,400.0 569.6,525.0 574.7,680.0 577.1,760.0 582.9,860.0 591.0,1000.0 591.8,1000.0 583.8,860.0 578.2,760.0 575.8,680.0 570.9,525.0 566.9,400.0 563.5,300.0 556.2,109.0" fill="#000" stroke="none" stroke-width="1" />
<polygon points="557.8,109.0 565.2,300.0 568.7,400.0 572.6,525.0 577.2,680.0 579.7,760.0 585.3,860.0 593.0,1000.0 593.5,1000.0 585.9,860.0 580.4,760.0 577.9,680.0 573.4,525.0 569.6,400.0 566.1,300.0 558.8,109.0" fill="#000" stroke="none" stroke-width="1" />
<polygon points="565.4,109.0 572.2,300.0 575.5,400.0 578.3,525.0 581.9,680.0 584.3,760.0 589.2,860.0 596.0,1000.0 596.8,1000.0 590.1,860.0 585.3,760.0 582.8,680.0 579.3,525.0 576.6,400.0 573.2,300.0 566.4,109.0" fill="#000" stroke="none" stroke-width="1" />
<polygon points="567.2,109.0 574.3,300.0 577.8,400.0 580.5,525.0 584.0,680.0 586.6,760.0 591.5,860.0 598.1,1000.0 598.8,1000.0 592.3,860.0 587.6,760.0 585.0,680.0 581.5,525.0 578.9,400.0 575.3,300.0 568.2,109.0" fill="#000" stroke="none" stroke-width="1" />
<polygon points="571.8,109.0 580.9,300.0 585.6,400.0 588.8,525.0 592.5,680.0 596.1,760.0 600.9,860.0 606.8,1000.0 607.6,1000.0 602.0,860.0 597.5,760.0 594.1,680.0 590.8,525.0 588.2,400.0 583.7,300.0 575.0,109.0" fill="#000" stroke="none" stroke-width="1" />
<polygon points="547.0,109.0 557.3,300.0 562.2,400.0 568.5,525.0 575.6,680.0 579.0,760.0 585.8,860.0 594.8,1000.0 594.9,1000.0 586.0,860.0 579.2,760.0 575.8,680.0 568.8,525.0 562.5,400.0 557.6,300.0 547.4,109.0" fill="#c8c8c8" stroke="none" stroke-width="1" />
<polygon points="561.4,109.0 571.2,300.0 576.1,400.0 580.6,525.0 585.9,680.0 589.4,760.0 595.1,860.0 602.3,1000.0 602.5,1000.0 595.2,860.0 589.7,760.0 586.1,680.0 580.9,525.0 576.4,400.0 571.5,300.0 561.8,109.0" fill="#c0c0c0" stroke="none" stroke-width="1" />
<polyline points="539.0,109.0 548.0,300.0 552.1,400.0 558.6,525.0 566.1,680.0 568.8,760.0 576.0,860.0 586.0,1000.0" fill="none" stroke="#a8a8a8" stroke-width="1" stroke-dasharray="7 14"/>
<polyline points="537.0,109.0 546.0,300.0 550.0,400.0 556.8,525.0 564.5,680.0 567.1,760.0 574.5,860.0 584.8,1000.0" fill="none" stroke="#a8a8a8" stroke-width="1" stroke-dasharray="5 16"/>
<polyline points="553.8,109.0 562.8,300.0 567.1,400.0 572.2,525.0 577.9,680.0 581.0,760.0 587.1,860.0 595.3,1000.0" fill="none" stroke="#111" stroke-width="1" stroke-dasharray="12 6"/>
<polyline points="563.0,109.0 572.0,300.0 576.5,400.0 580.5,525.0 585.3,680.0 588.6,760.0 594.0,860.0 601.1,1000.0" fill="none" stroke="#111" stroke-width="0.8" stroke-dasharray="16 5"/>
<polyline points="573.4,109.0 582.4,300.0 587.1,400.0 590.0,525.0 593.6,680.0 597.2,760.0 601.8,860.0 607.6,1000.0" fill="none" stroke="#a0a0a0" stroke-width="1" stroke-dasharray="6 15"/>
<polygon points="568.0,631.0 1100.0,604.0 1100.0,611.0 568.0,639.0" fill="#a2a2a2" stroke="#000" stroke-width="0.8" />
<path d="M531,200 Q529,196 537,196 L546,198 L550,276 L540,279 Q533,278 532,270 Z" fill="#a2a2a2" stroke="#000" stroke-width="0.8" />
<path d="M533,212 Q540,205 547,210 M533,220 L547,218 M534,255 Q540,262 548,258 M535,264 L548,262" fill="none" stroke="#000" stroke-width="1"/>
<ellipse cx="541.500" cy="238" rx="5.500" ry="12" fill="#080b22" stroke="#000" stroke-width="1"/>
<path d="M531,204 L546,202 L546,207 L532,209 Z" fill="#c4c4c4"/>
<path d="M1079,170 L1088,170 Q1094,172 1093,180 L1094,240 Q1094,247 1088,247 L1084,247 Z" fill="#a2a2a2" stroke="#000" stroke-width="0.8" />
<path d="M1081,185 L1092,186 M1081,192 Q1087,186 1093,192 M1083,228 Q1088,234 1093,228 M1083,236 L1093,236" fill="none" stroke="#000" stroke-width="1"/>
<ellipse cx="1084.500" cy="209" rx="3" ry="10" fill="#0a0e28" stroke="#000" stroke-width="1"/>
<polygon points="1426.0,109.0 1437.5,335.0 1449.0,560.0 1458.0,780.0 1467.0,1000.0 1494.0,1000.0 1485.5,780.0 1477.0,560.0 1465.0,335.0 1453.0,109.0" fill="#989898" stroke="#000" stroke-width="0.8" />
<polygon points="1426.0,109.0 1437.5,335.0 1449.0,560.0 1458.0,780.0 1467.0,1000.0 1468.3,1000.0 1459.9,780.0 1451.5,560.0 1440.5,335.0 1429.5,109.0" fill="#000" stroke="none" stroke-width="1" />
<polygon points="1432.8,109.0 1444.5,335.0 1456.3,560.0 1465.3,780.0 1474.3,1000.0 1475.4,1000.0 1467.0,780.0 1458.6,560.0 1447.5,335.0 1436.3,109.0" fill="#000" stroke="none" stroke-width="1" />
<polygon points="1440.0,109.0 1451.9,335.0 1463.8,560.0 1472.7,780.0 1481.6,1000.0 1482.9,1000.0 1475.1,780.0 1467.3,560.0 1456.4,335.0 1445.4,109.0" fill="#000" stroke="none" stroke-width="1" />
<polygon points="1449.0,109.0 1460.9,335.0 1472.8,560.0 1481.4,780.0 1490.0,1000.0 1490.8,1000.0 1482.2,780.0 1473.6,560.0 1461.7,335.0 1449.8,109.0" fill="#000" stroke="none" stroke-width="1" />
<polyline points="1427.9,109.0 1439.4,335.0 1451.0,560.0 1459.9,780.0 1468.9,1000.0" fill="none" stroke="#a0a0a0" stroke-width="1" stroke-dasharray="6 14"/>
<polyline points="1434.4,109.0 1446.0,335.0 1457.7,560.0 1466.5,780.0 1475.4,1000.0" fill="none" stroke="#a0a0a0" stroke-width="1.2" stroke-dasharray="7 12"/>
<polyline points="1441.7,109.0 1453.5,335.0 1465.2,560.0 1474.0,780.0 1482.7,1000.0" fill="none" stroke="#a0a0a0" stroke-width="1.2" stroke-dasharray="8 11"/>
<polyline points="1443.8,109.0 1455.7,335.0 1467.5,560.0 1476.2,780.0 1484.8,1000.0" fill="none" stroke="#a0a0a0" stroke-width="1.2" stroke-dasharray="8 12"/>
<polygon points="1307.8,109.7 1426.0,109.7 1426.5,119.8 1308.6,126.3" fill="#959595" stroke="#000" stroke-width="1" />
<polygon points="1308.6,126.3 1426.5,119.8 1428.1,152.7 1310.0,158.0" fill="#a0a0a0" stroke="#000" stroke-width="1" />
<polygon points="1310.0,158.0 1428.1,152.7 1430.3,197.5 1312.1,203.0" fill="#959595" stroke="#000" stroke-width="1" />
<polygon points="1312.1,203.0 1430.3,197.5 1431.9,228.6 1313.5,234.0" fill="#a0a0a0" stroke="#000" stroke-width="1" />
<polygon points="1313.5,234.0 1431.9,228.6 1434.1,273.0 1315.6,279.0" fill="#959595" stroke="#000" stroke-width="1" />
<polygon points="1315.6,279.0 1434.1,273.0 1435.7,305.0 1317.0,310.7" fill="#a0a0a0" stroke="#000" stroke-width="1" />
<polygon points="1317.0,310.7 1435.7,305.0 1437.9,350.0 1319.1,355.5" fill="#959595" stroke="#000" stroke-width="1" />
<polygon points="1319.1,355.5 1437.9,350.0 1439.4,381.0 1320.5,387.5" fill="#a0a0a0" stroke="#000" stroke-width="1" />
<polygon points="1320.5,387.5 1439.4,381.0 1441.7,427.0 1322.5,431.0" fill="#959595" stroke="#000" stroke-width="1" />
<polygon points="1322.5,431.0 1441.7,427.0 1443.2,457.8 1324.0,463.5" fill="#a0a0a0" stroke="#000" stroke-width="1" />
<polygon points="1324.0,463.5 1443.2,457.8 1445.4,503.0 1326.0,508.0" fill="#959595" stroke="#000" stroke-width="1" />
<polygon points="1326.0,508.0 1445.4,503.0 1447.0,534.6 1327.5,540.0" fill="#a0a0a0" stroke="#000" stroke-width="1" />
<polyline points="1307.8,109.7 1327.5,540.0" fill="none" stroke="#000" stroke-width="2" />
<polygon points="1263.0,604.0 1277.0,603.0 1301.0,872.0 1287.0,874.0 1274.0,854.0" fill="#9a9a9a" stroke="#000" stroke-width="1" />
<polygon points="1278.0,618.0 1451.0,608.0 1475.0,867.0 1301.0,878.0" fill="#969696" stroke="#000" stroke-width="1" />
<polygon points="1451.0,608.0 1462.0,612.0 1489.0,862.0 1475.0,867.0" fill="#8c8c8c" stroke="#000" stroke-width="0.8" />
<polyline points="1282.0,624.0 1448.0,613.0 1472.0,862.0 1304.0,873.0" fill="none" stroke="#000" stroke-width="0.8" stroke-dasharray="6 4"/>
<polyline points="1364.0,619.0 1385.0,871.0" fill="none" stroke="#000" stroke-width="1" stroke-dasharray="5 3"/>
<polyline points="1369.0,619.0 1390.0,871.0" fill="none" stroke="#000" stroke-width="1" stroke-dasharray="5 3"/>
<polygon points="1288.0,881.0 1478.0,869.0 1481.0,898.0 1290.0,910.0" fill="url(#roll)" stroke="#000" stroke-width="0.8" />
<polyline points="1296.0,880.0 1298.0,909.0" fill="none" stroke="#000" stroke-width="0.8" />
<polyline points="1299.0,880.0 1301.0,909.0" fill="none" stroke="#000" stroke-width="0.8" />
<polygon points="1475.0,867.0 1489.0,862.0 1492.0,896.0 1481.0,898.0" fill="#8c8c8c" stroke="#000" stroke-width="0.8" />
<polygon points="1286.0,873.0 1300.0,871.0 1301.0,882.0 1287.0,884.0" fill="#8e8e8e" stroke="#000" stroke-width="0.8" />
<polygon points="1281.0,952.0 1306.0,950.0 1310.0,1000.0 1285.0,1000.0" fill="#9a9a9a" stroke="#000" stroke-width="0.8" />
<polyline points="1288.0,952.0 1292.0,1000.0" fill="none" stroke="#000" stroke-width="1" />
<polyline points="1294.0,951.0 1298.0,1000.0" fill="none" stroke="#000" stroke-width="1" />
<polyline points="1300.0,951.0 1304.0,1000.0" fill="none" stroke="#000" stroke-width="1" />
<polygon points="1260.0,854.0 1287.0,852.0 1290.0,970.0 1267.0,973.0" fill="#9a9a9a" stroke="#000" stroke-width="1" />
<polyline points="1261.0,884.0 1286.0,882.0" fill="none" stroke="#000" stroke-width="0.8" />
<polyline points="1263.0,920.0 1288.0,918.0" fill="none" stroke="#000" stroke-width="0.8" />
<polyline points="1264.0,941.0 1289.0,939.0" fill="none" stroke="#000" stroke-width="0.8" />
<polygon points="1289.0,908.0 1312.0,907.0 1314.0,950.0 1291.0,952.0" fill="#8e8e8e" stroke="#000" stroke-width="0.8" />
<polyline points="1290.0,918.0 1308.0,916.0 1310.0,944.0 1292.0,946.0" fill="none" stroke="#000" stroke-width="0.8" />
<polygon points="1310.0,908.0 1373.0,904.0 1375.0,940.0 1312.0,945.0" fill="url(#roll)" stroke="#000" stroke-width="0.8" />
<g shape-rendering="auto">
<polygon points="119.5,917.0 145.0,916.0 146.0,941.0 120.0,941.0" fill="#7d8d5e" stroke="#ffff00" stroke-width="1.2" />
<polygon points="120.0,943.0 146.0,942.0 146.0,948.0 122.0,949.0" fill="#5a7099" stroke="#c8c8c8" stroke-width="1" />
<polyline points="118.5,898.0 118.5,940.0" fill="none" stroke="#00dd00" stroke-width="2.2" />
<polygon points="118.5,893.0 122.5,904.0 114.5,904.0" fill="#00e000" stroke="none" stroke-width="1" />
<polyline points="120.0,940.5 148.0,939.5" fill="none" stroke="#e00000" stroke-width="2.2" />
<polygon points="155.0,939.5 145.0,936.0 145.0,943.5" fill="#c00000" stroke="none" stroke-width="1" />
<polyline points="119.5,942.0 121.0,958.0" fill="none" stroke="#00d8e8" stroke-width="2.2" />
<circle cx="121" cy="960" r="4" fill="#00e0f0"/>
<circle cx="119" cy="941" r="3.5" fill="#8a8a8a"/>
<text x="112.5" y="892" font-size="12" fill="#d8d8d8" font-family="Liberation Sans,sans-serif">Y</text>
<text x="156.5" y="945" font-size="12" fill="#e00020" font-family="Liberation Sans,sans-serif">X</text>
<text x="117.5" y="970" font-size="11" fill="#d8d8d8" font-family="Liberation Sans,sans-serif">Z</text>
</g>
<rect x="64" y="113" width="24" height="24" fill="#8c8c9c"/>
<g transform="translate(66,115) scale(.8333)" shape-rendering="auto"><rect x="3" y="4" width="18" height="4" fill="#4a6088"/><rect x="3" y="10" width="18" height="4" fill="#4a6088"/><rect x="3" y="16" width="18" height="4" fill="#4a6088"/></g>
<rect x="92" y="113" width="24" height="24" fill="#8c8c9c"/>
<g transform="translate(94,115) scale(.8333)" shape-rendering="auto"><rect x="5" y="5" width="14" height="14" fill="#eef4ff" stroke="#ccd" stroke-width=".5"/><path d="M1 1h5l-2 2l2 2l-1 1l-2-2l-2 2zM23 1v5l-2-2l-2 2l-1-1l2-2l-2-2zM1 23v-5l2 2l2-2l1 1l-2 2l2 2zM23 23h-5l2-2l-2-2l1-1l2 2l2-2z" fill="#30c030" stroke="#187818" stroke-width=".4"/></g>
<rect x="120" y="113" width="24" height="24" fill="#8c8c9c"/>
<g transform="translate(122,115) scale(.8333)" shape-rendering="auto"><circle cx="14" cy="9" r="6" fill="#dce8f8" stroke="#889" stroke-width="1.6"/><circle cx="14" cy="9" r="3.5" fill="#b8d0f0"/><path d="M9.5 13.5L3 21" stroke="#aaa" stroke-width="3.2" stroke-linecap="round"/><path d="M9.5 13.5L3 21" stroke="#eee" stroke-width="1.2"/></g>
<rect x="148" y="113" width="24" height="24" fill="#8c8c9c"/>
<g transform="translate(150,115) scale(.8333)" shape-rendering="auto"><path d="M3 16l9-5l9 5l-9 5z" fill="#eef2f8" stroke="#889" stroke-width=".7"/><path d="M11 15V4" stroke="#1a78f0" stroke-width="1.8"/><path d="M11 1l3 5h-6z" fill="#1a78f0"/><path d="M11 15l8-5" stroke="#28b828" stroke-width="1.8"/><path d="M21 8.500l-5 1l2.500 3z" fill="#28b828"/><path d="M11 15l7 5" stroke="#e02020" stroke-width="1.8"/><path d="M20 21.500l-5-1l2.500-3z" fill="#e02020"/><circle cx="11" cy="15" r="1.8" fill="#eee" stroke="#555" stroke-width=".6"/></g>
<rect x="176" y="113" width="24" height="24" fill="#8c8c9c"/>
<g transform="translate(178,115) scale(.8333)" shape-rendering="auto"><path d="M12 3.500v11M12 14.500l-9 3.500M12 14.500l9 3.500" fill="none" stroke="#000" stroke-width="1.100"/><polygon points="2,8 12,3.5 22,8 12,12.5" fill="#34d428"/><path d="M2 8l10-4.500l10 4.500l-1 10l-9 5l-9-5zM2 8l10 4.500l10-4.500M12 12.500v10.500" fill="none" stroke="#000" stroke-width="1.500" stroke-linejoin="round"/></g>
<rect x="204" y="113" width="24" height="24" fill="#8c8c9c"/>
<g transform="translate(206,115) scale(.8333)" shape-rendering="auto"><polygon points="3,18 12,14.5 21,18 12,23" fill="#34d428"/><path d="M12 3.500v11M12 14.500l-9 3.500M12 14.500l9 3.500" fill="none" stroke="#000" stroke-width="1.100"/><path d="M2 8l10-4.500l10 4.500l-1 10l-9 5l-9-5zM2 8l10 4.500l10-4.500M12 12.500v10.500" fill="none" stroke="#000" stroke-width="1.500" stroke-linejoin="round"/></g>
<rect x="232" y="113" width="24" height="24" fill="#8c8c9c"/>
<g transform="translate(234,115) scale(.8333)" shape-rendering="auto"><polygon points="2,8 12,3.5 12,14.5 3,18" fill="#34d428"/><path d="M12 3.500v11M12 14.500l-9 3.500M12 14.500l9 3.500" fill="none" stroke="#000" stroke-width="1.100"/><path d="M2 8l10-4.500l10 4.500l-1 10l-9 5l-9-5zM2 8l10 4.500l10-4.500M12 12.500v10.500" fill="none" stroke="#000" stroke-width="1.500" stroke-linejoin="round"/></g>
<rect x="260" y="113" width="24" height="24" fill="#8c8c9c"/>
<g transform="translate(262,115) scale(.8333)" shape-rendering="auto"><path d="M12 3.500v11M12 14.500l-9 3.500M12 14.500l9 3.500" fill="none" stroke="#000" stroke-width="1.100"/><polygon points="12,12.5 22,8 21,18 12,23" fill="#34d428"/><path d="M2 8l10-4.500l10 4.500l-1 10l-9 5l-9-5zM2 8l10 4.500l10-4.500M12 12.500v10.500" fill="none" stroke="#000" stroke-width="1.500" stroke-linejoin="round"/></g>
<rect x="288" y="113" width="24" height="24" fill="#8c8c9c"/>
<g transform="translate(290,115) scale(.8333)" shape-rendering="auto"><path d="M12 3.500v11M12 14.500l-9 3.500M12 14.500l9 3.500" fill="none" stroke="#000" stroke-width="1.100"/><polygon points="2,8 12,12.5 12,23 3,18" fill="#34d428"/><path d="M2 8l10-4.500l10 4.500l-1 10l-9 5l-9-5zM2 8l10 4.500l10-4.500M12 12.500v10.500" fill="none" stroke="#000" stroke-width="1.500" stroke-linejoin="round"/></g>
<rect x="316" y="113" width="24" height="24" fill="#8c8c9c"/>
<g transform="translate(318,115) scale(.8333)" shape-rendering="auto"><polygon points="12,3.5 22,8 21,18 12,14.5" fill="#34d428"/><path d="M12 3.500v11M12 14.500l-9 3.500M12 14.500l9 3.500" fill="none" stroke="#000" stroke-width="1.100"/><path d="M2 8l10-4.500l10 4.500l-1 10l-9 5l-9-5zM2 8l10 4.500l10-4.500M12 12.500v10.500" fill="none" stroke="#000" stroke-width="1.500" stroke-linejoin="round"/></g>
<rect x="344" y="113" width="24" height="24" fill="#8c8c9c"/>
<g transform="translate(346,115) scale(.8333)" shape-rendering="auto"><polygon points="2,8 12,3.5 22,8 12,12.5" fill="#6ae858"/><polygon points="2,8 12,12.5 12,23 3,18" fill="#2cb424"/><polygon points="12,12.5 22,8 21,18 12,23" fill="#44d034"/><path d="M2 8l10-4.500l10 4.500l-1 10l-9 5l-9-5zM2 8l10 4.500l10-4.500M12 12.500v10.500" fill="none" stroke="#168010" stroke-width=".8"/></g>
<rect x="64" y="141" width="24" height="24" fill="#8c8c9c"/>
<g transform="translate(66,143) scale(.8333)" shape-rendering="auto"><path d="M7 5.4v13.2a5.0 2.4 0 0 0 10 0v-13.2" fill="none" stroke="#222" stroke-width="1"/><ellipse cx="12.0" cy="5.4" rx="5.0" ry="2.4" fill="none" stroke="#222" stroke-width="1"/><path d="M7 18.6a5 2.4 0 0 1 10 0" fill="none" stroke="#222" stroke-width=".8"/></g>
<rect x="64" y="169" width="24" height="24" fill="#8c8c9c"/>
<g transform="translate(66,171) scale(.8333)" shape-rendering="auto"><path d="M7 5.4v13.2a5.0 2.4 0 0 0 10 0v-13.2" fill="none" stroke="#222" stroke-width="1"/><ellipse cx="12.0" cy="5.4" rx="5.0" ry="2.4" fill="none" stroke="#222" stroke-width="1"/></g>
<rect x="64.5" y="197.5" width="23" height="23" fill="#a89868" stroke="#f0c850" stroke-width="1"/>
<g transform="translate(66,199) scale(.8333)" shape-rendering="auto"><path d="M7 5.4v13.2a5.0 2.4 0 0 0 10 0v-13.2" fill="#3c6cc0" stroke="#182850" stroke-width="1"/><ellipse cx="12.0" cy="5.4" rx="5.0" ry="2.4" fill="#6898e0" stroke="#182850" stroke-width="1"/></g>
<rect x="64" y="225" width="24" height="24" fill="#8c8c9c"/>
<g transform="translate(66,227) scale(.8333)" shape-rendering="auto"><path d="M7 5.4v13.2a5.0 2.4 0 0 0 10 0v-13.2" fill="#dce8f8" stroke="#667" stroke-width="1"/><ellipse cx="12.0" cy="5.4" rx="5.0" ry="2.4" fill="#f4f8ff" stroke="#667" stroke-width="1"/></g>
<rect x="64" y="253" width="24" height="24" fill="#8c8c9c"/>
<g transform="translate(66,255) scale(.8333)" shape-rendering="auto"><path d="M7 5.4v13.2a5.0 2.4 0 0 0 10 0v-13.2" fill="#aaa" stroke="#222" stroke-width="1"/><ellipse cx="12.0" cy="5.4" rx="5.0" ry="2.4" fill="#999" stroke="#222" stroke-width="1"/><path d="M9 5l2 15M12 5l-1 16M15 5l-2 15M9 20l4-15M15 20l-4-14" stroke="#222" stroke-width=".6" fill="none"/></g>
</svg>
<div id="status" class="abs">
<div class="abs" style="left:3px;top:20px;width:1127px;height:1px;background:#9a9a9a"></div>
<div class="abs" style="left:1341px;top:3px;width:131px;height:15px;background:#fff"></div>
<div class="grip" style="left:1336px;top:4px;height:14px;background-image:repeating-linear-gradient(#9aa 0 1px,transparent 1px 3px)"></div>
<div class="grip" style="left:1476px;top:4px;height:14px;background-image:repeating-linear-gradient(#9aa 0 1px,transparent 1px 3px)"></div>
<svg class="abs" style="left:1459px;top:3px" width="14" height="15" viewBox="0 0 14 15"><circle cx="8.5" cy="6" r="3.6" fill="#e8f2ff" stroke="#3a78c8" stroke-width="1.4"/><path d="M5.8 8.8L2 12.8" stroke="#3a78c8" stroke-width="2"/></svg>
<span class="st" style="left:1486px;top:2px;font-size:12px">绝对 XY 上视图</span>
<div class="abs" style="left:1591px;top:4px;width:1px;height:14px;background:#9a9fb0"></div>
<span class="st" style="left:1601px;top:2px;font-size:12px">绝对视图</span>
<div class="grip" style="left:1658px;top:4px;height:14px;background-image:repeating-linear-gradient(#9aa 0 1px,transparent 1px 3px)"></div>
<span class="st" style="left:1668px;top:4px;font-weight:bold;font-size:12px">LAYER0</span>
<div class="abs" style="left:1726px;top:4px;width:1px;height:14px;background:#9a9fb0"></div>
<div class="abs" style="left:1753px;top:4px;width:1px;height:14px;background:#9a9fb0"></div>
<div class="abs" style="left:1762px;top:6px;width:32px;height:11px;background:#4a6288"></div>
<div class="abs" style="left:1799px;top:4px;width:1px;height:14px;background:#9a9fb0"></div>
<div class="abs" style="left:1805px;top:6px;width:32px;height:11px;background:#4a6288"></div>
<div class="abs" style="left:1842px;top:4px;width:1px;height:14px;background:#9a9fb0"></div>
<div class="abs" style="left:1848px;top:6px;width:32px;height:11px;background:#4a6288"></div>
<div class="abs" style="left:1885px;top:4px;width:1px;height:14px;background:#9a9fb0"></div>
<svg class="abs" style="left:1892px;top:3px" width="16" height="16" viewBox="0 0 16 16"><circle cx="8" cy="8" r="6.5" fill="#1c3fb0"/><path d="M4 4q3-2 5 0q-1 3-3 3q-2-1-2-3zM8 8q3-1 5 1q-1 3-3 4q-2-2-2-5z" fill="#2fb030"/><circle cx="6" cy="5.5" r="1.5" fill="#9fd0ff" opacity=".7"/></svg>
<!-- row 2 -->
<span class="st" style="left:1141px;top:22px;font-size:12px">拴牢</span>
<i class="abs" style="left:1133px;top:23px;width:1px;height:14px;background:#8a8fa0"></i>
<i class="abs" style="left:1175px;top:23px;width:1px;height:14px;background:#8a8fa0"></i>
<i class="abs" style="left:1206px;top:23px;width:1px;height:14px;background:#8a8fa0"></i>
<i class="abs" style="left:1237px;top:23px;width:1px;height:14px;background:#8a8fa0"></i>
<i class="abs" style="left:1268px;top:23px;width:1px;height:14px;background:#8a8fa0"></i>
<i class="abs" style="left:1299px;top:23px;width:1px;height:14px;background:#8a8fa0"></i>
<i class="abs" style="left:1330px;top:23px;width:1px;height:14px;background:#8a8fa0"></i>
<i class="abs" style="left:1361px;top:23px;width:1px;height:14px;background:#8a8fa0"></i>
<i class="abs" style="left:1424px;top:23px;width:1px;height:14px;background:#8a8fa0"></i>
<i class="abs" style="left:1578px;top:23px;width:1px;height:14px;background:#8a8fa0"></i>
<i class="abs" style="left:1653px;top:23px;width:1px;height:14px;background:#8a8fa0"></i>
<svg class="abs" style="left:1182px;top:21px" width="17" height="17" viewBox="0 0 17 17"><rect x=".5" y=".5" width="16" height="16" fill="#c9ccd8" stroke="#6b6f80"/><rect x="2.5" y="2.5" width="12" height="12" fill="#f4dada" stroke="#e0405a" stroke-width="1.6"/><path d="M5 7h6l-2-2M12 10H6l2 2" stroke="#d83050" stroke-width="1.4" fill="none"/></svg>
<svg class="abs" style="left:1212px;top:21px" width="18" height="18" viewBox="0 0 18 18"><rect width="18" height="18" fill="#ffe07a"/><path d="M3 2l4 3l2-4l1 4l4-1l-3 3l3 3l-5-1l-2 4l-1-4l-4 0l3-3z" fill="#d060c0" stroke="#a040a0" stroke-width=".5"/><path d="M8 7l7 7l-2 0l1 3l-2 0l-1-3l-2 2z" fill="#d8d8c0" stroke="#666" stroke-width=".7"/></svg>
<svg class="abs" style="left:1244px;top:22px" width="17" height="16" viewBox="0 0 17 16"><path d="M2 7l7-5l7 3l-3 3z" fill="#e0a860" stroke="#a06828" stroke-width=".7"/><rect x="2" y="8" width="9" height="7" fill="#cfe0f8" stroke="#3a68b8" stroke-width=".8"/><path d="M4 10h2v2H4zM7 12h2v2H7z" fill="#3a68b8"/></svg>
<svg class="abs" style="left:1276px;top:21px" width="14" height="18" viewBox="0 0 14 18"><ellipse cx="7" cy="16" rx="5" ry="1.5" fill="#8a8fa0" opacity=".6"/><text x="1" y="14" font-size="17" font-weight="bold" fill="#4a78d0" font-family="Liberation Sans,sans-serif">?</text></svg>
<svg class="abs" style="left:1304px;top:21px" width="20" height="18" viewBox="0 0 20 18"><path d="M3 3l4-2l4 2v5l-4 2l-4-2z" fill="#4a90e0" stroke="#1c4fa0" stroke-width=".7"/><path d="M10 9l4-2l4 2v5l-4 2l-4-2z" fill="#7ab0b8" stroke="#204850" stroke-width=".7"/><path d="M1 12h7M5 9l3 3l-3 3" stroke="#e00010" stroke-width="1.6" fill="none"/></svg>
<svg class="abs" style="left:1336px;top:21px" width="18" height="18" viewBox="0 0 18 18"><rect width="18" height="18" fill="#ffe07a"/><path d="M2 5l7-3l7 3l-7 3z" fill="#e030e8"/><path d="M2 5v8l7 3V8z" fill="#5a9a98" stroke="#1c4fb0" stroke-width=".8"/><path d="M16 5v8l-7 3V8z" fill="#3a7ad0" stroke="#1c4fb0" stroke-width=".8"/></svg>
<svg class="abs" style="left:1430px;top:21px" width="18" height="17" viewBox="0 0 18 17"><rect x="1" y="1" width="16" height="15" fill="#e8ecf4" stroke="#6a7088" stroke-width="1.2"/><path d="M9 1v15M1 8h16" stroke="#6a7088" stroke-width="1.2"/></svg>
<span class="st" style="left:1464px;top:24.5px;font-size:12px;letter-spacing:-.1px">LS: 1.00 PS: 1.00</span>
<span class="st" style="left:1589px;top:22px;font-size:12px">单位: 毫米</span>
<span class="st" style="left:1663px;top:24.5px;letter-spacing:.18px"><span style="color:#e8101c">X =-0910.616</span> Y = 0162.069 Z = 0000.000</span>
</div>
<div id="taskbar" class="abs">
<div class="abs" style="left:48px;top:0;width:343px;height:8px;background:#f2f2f2"></div>
<div class="abs" style="left:638px;top:0;width:46px;height:8px;background:#4a4a4a"></div>
<div class="abs" style="left:1815px;top:2px;font-size:11px;color:#fff;line-height:11px">18:56</div>
</div>
<!-- sticker -->
<svg class="abs" style="left:1355px;top:960px" width="110" height="84" viewBox="1355 960 110 84">
<circle cx="1367.8" cy="1005.6" r="8" fill="#8e5c4e"/><text x="1363" y="1010.5" font-size="13" fill="#fff" font-family="Liberation Sans,sans-serif">A</text>
<circle cx="1374.7" cy="1026.6" r="8" fill="#8e5c4e"/><path d="M1370 1023l3-1.5h3.5l3 1.5l-1.5 2.5l-1-.5v5h-4.5v-5l-1 .5z" fill="#fff"/>
<path d="M1403 975q-3-6 1-8q0 4 2 7M1406 974q2-5 6-4q-3 2-3 5" fill="#a0602c"/>
<circle cx="1389.7" cy="979" r="6" fill="#b87838"/><circle cx="1389.7" cy="979.5" r="3" fill="#f0b8a0"/>
<circle cx="1421.6" cy="979" r="6" fill="#b87838"/><circle cx="1421.6" cy="979.5" r="3" fill="#f0b8a0"/>
<ellipse cx="1405.6" cy="996" rx="25" ry="24" fill="#b87838"/>
<path d="M1388 1018q-5 8 2 16h30q8-8 3-18z" fill="#ffe83c"/>
<path d="M1383 1022q2-7 8-5l-2 8zM1424 1014q6-2 7 4l-7 4z" fill="#ffe83c"/>
<path d="M1390 1018q12 8 30-2l2 4q-18 10-34 2z" fill="#b87838"/>
<ellipse cx="1406.6" cy="1000" rx="19.5" ry="17.5" fill="#fff15a"/>
<circle cx="1396" cy="994" r="1.5" fill="#3a2a1a"/><circle cx="1417" cy="994" r="1.5" fill="#3a2a1a"/><ellipse cx="1406" cy="997" rx="1.2" ry=".8" fill="#3a2a1a"/>
<ellipse cx="1391" cy="1000" rx="3.5" ry="2.5" fill="#ffa030" opacity=".8"/><ellipse cx="1421" cy="1000" rx="3.5" ry="2.5" fill="#ffa030" opacity=".8"/>
<circle cx="1396" cy="1029" r="6.5" fill="#b87838"/><circle cx="1390.5" cy="1023.5" r="2.3" fill="#b87838"/><circle cx="1401.5" cy="1023.5" r="2.3" fill="#b87838"/>
<ellipse cx="1396" cy="1036" rx="5" ry="3" fill="#b87838"/>
<circle cx="1393.5" cy="1028" r=".8" fill="#3a2a1a"/><circle cx="1398.5" cy="1028" r=".8" fill="#3a2a1a"/>
<ellipse cx="1406" cy="1038.5" rx="14" ry="1.5" fill="#c89060" opacity=".6"/>
<text x="1436" y="989" font-size="22" font-weight="bold" fill="#fff" stroke="#b07840" stroke-width="1.6" paint-order="stroke" font-family="Liberation Sans,sans-serif" transform="rotate(10 1446 980)">W</text>
<circle cx="1441" cy="978" r="1.5" fill="#c08850"/><circle cx="1450" cy="981" r="1.5" fill="#c08850"/>
<circle cx="1439" cy="993" r="3" fill="#b87838"/><circle cx="1453" cy="993" r="3" fill="#b87838"/>
<text x="1437.5" y="1009" font-size="22" font-weight="bold" fill="#c08850" stroke="#c08850" stroke-width="1.2" font-family="Liberation Sans,sans-serif">O</text>
<text x="1434" y="1033" font-size="25" font-weight="bold" fill="#ffe83c" stroke="#b87820" stroke-width="1.6" paint-order="stroke" font-family="Liberation Sans,sans-serif" transform="rotate(-10 1446 1022)">W</text>
</svg>
</body>
</html>
